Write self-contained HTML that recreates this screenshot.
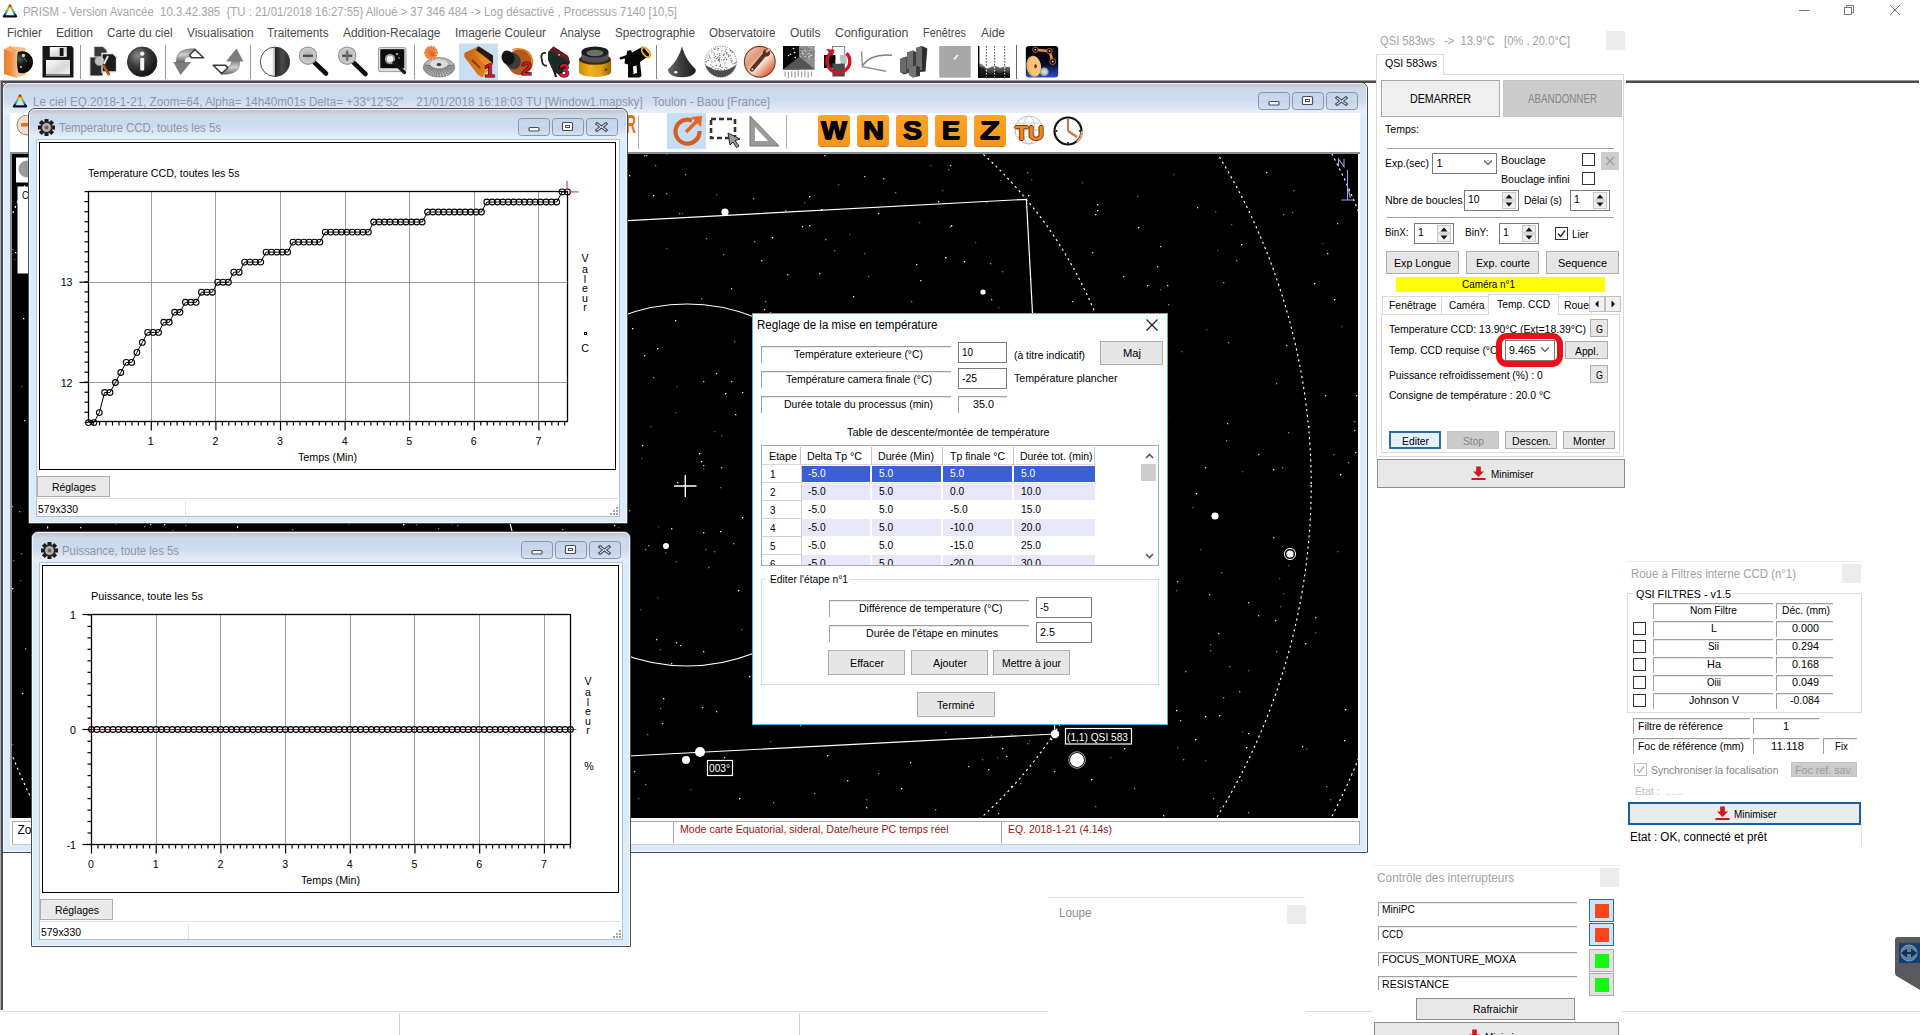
<!DOCTYPE html><html><head><meta charset="utf-8"><title>PRISM</title><style>html,body{margin:0;padding:0;}body{width:1920px;height:1035px;overflow:hidden;background:#fff;position:relative;font-family:'Liberation Sans',sans-serif;font-size:11px;}</style></head><body>
<svg style="position:absolute;left:2px;top:3px;" width="16" height="16" viewBox="0 0 15 15"><defs><linearGradient id="pg2" x1="0" y1="0" x2="0" y2="1"><stop offset="0" stop-color="#b0202a"/><stop offset="0.25" stop-color="#f0b020"/><stop offset="0.5" stop-color="#40c060"/><stop offset="0.7" stop-color="#20a0c0"/><stop offset="0.85" stop-color="#102050"/><stop offset="1" stop-color="#080818"/></linearGradient></defs><path d="M7.5 2.2 L13.3 12.6 L1.7 12.6 Z" fill="none" stroke="url(#pg2)" stroke-width="2" stroke-linejoin="round"/></svg>
<div style="position:absolute;left:23.00px;top:5px;font-size:12px;color:#a6a6a6;white-space:pre;line-height:normal;transform:scaleX(0.9484);transform-origin:0 0;">PRISM - Version Avancée  10.3.42.385  {TU : 21/01/2018 16:27:55} Alloué &gt; 37 346 484 -&gt; Log désactivé , Processus 7140 [10,5]</div>
<svg style="position:absolute;left:1790px;top:0px;" width="120" height="20"><g stroke="#777" stroke-width="1" fill="none"><path d="M9 10.5H19.5"/><rect x="54.5" y="7.5" width="7" height="7"/><path d="M56.5 7.5V5.5H63.5V12.5H61.5"/><path d="M100 5L110 15M110 5L100 15"/></g></svg>
<div style="position:absolute;left:7.00px;top:25.5px;font-size:12px;color:#4a4a4a;white-space:pre;line-height:normal;transform:scaleX(0.9718);transform-origin:0 0;">Fichier</div>
<div style="position:absolute;left:56.00px;top:25.5px;font-size:12px;color:#4a4a4a;white-space:pre;line-height:normal;transform:scaleX(1.0081);transform-origin:0 0;">Edition</div>
<div style="position:absolute;left:107.00px;top:25.5px;font-size:12px;color:#4a4a4a;white-space:pre;line-height:normal;transform:scaleX(0.9722);transform-origin:0 0;">Carte du ciel</div>
<div style="position:absolute;left:186.50px;top:25.5px;font-size:12px;color:#4a4a4a;white-space:pre;line-height:normal;transform:scaleX(0.9902);transform-origin:0 0;">Visualisation</div>
<div style="position:absolute;left:267.00px;top:25.5px;font-size:12px;color:#4a4a4a;white-space:pre;line-height:normal;transform:scaleX(0.9776);transform-origin:0 0;">Traitements</div>
<div style="position:absolute;left:343.00px;top:25.5px;font-size:12px;color:#4a4a4a;white-space:pre;line-height:normal;transform:scaleX(0.9943);transform-origin:0 0;">Addition-Recalage</div>
<div style="position:absolute;left:455.00px;top:25.5px;font-size:12px;color:#4a4a4a;white-space:pre;line-height:normal;transform:scaleX(0.9886);transform-origin:0 0;">Imagerie Couleur</div>
<div style="position:absolute;left:560.00px;top:25.5px;font-size:12px;color:#4a4a4a;white-space:pre;line-height:normal;transform:scaleX(0.9484);transform-origin:0 0;">Analyse</div>
<div style="position:absolute;left:615.00px;top:25.5px;font-size:12px;color:#4a4a4a;white-space:pre;line-height:normal;transform:scaleX(0.9829);transform-origin:0 0;">Spectrographie</div>
<div style="position:absolute;left:709.00px;top:25.5px;font-size:12px;color:#4a4a4a;white-space:pre;line-height:normal;transform:scaleX(0.9679);transform-origin:0 0;">Observatoire</div>
<div style="position:absolute;left:790.00px;top:25.5px;font-size:12px;color:#4a4a4a;white-space:pre;line-height:normal;transform:scaleX(0.9939);transform-origin:0 0;">Outils</div>
<div style="position:absolute;left:835.00px;top:25.5px;font-size:12px;color:#4a4a4a;white-space:pre;line-height:normal;transform:scaleX(1.0295);transform-origin:0 0;">Configuration</div>
<div style="position:absolute;left:923.00px;top:25.5px;font-size:12px;color:#4a4a4a;white-space:pre;line-height:normal;transform:scaleX(0.9080);transform-origin:0 0;">Fenêtres</div>
<div style="position:absolute;left:981.00px;top:25.5px;font-size:12px;color:#4a4a4a;white-space:pre;line-height:normal;">Aide</div>
<svg style="position:absolute;left:0;top:42px" width="1070" height="40" viewBox="0 42 1070 40"><defs><radialGradient id="gsph" cx="0.35" cy="0.3" r="0.75"><stop offset="0" stop-color="#8a8a8a"/><stop offset="0.45" stop-color="#3c3c3c"/><stop offset="1" stop-color="#0c0c0c"/></radialGradient><radialGradient id="gball" cx="0.4" cy="0.35" r="0.7"><stop offset="0" stop-color="#4a5a50"/><stop offset="0.4" stop-color="#151515"/><stop offset="1" stop-color="#000"/></radialGradient><linearGradient id="gmet" x1="0" y1="0" x2="0" y2="1"><stop offset="0" stop-color="#8c8c8c"/><stop offset="0.45" stop-color="#d0d0d0"/><stop offset="1" stop-color="#6a6a6a"/></linearGradient><linearGradient id="gor" x1="0" y1="0" x2="1" y2="0"><stop offset="0" stop-color="#ef7f2e"/><stop offset="0.5" stop-color="#f09048"/><stop offset="1" stop-color="#f6c8a0"/></linearGradient><linearGradient id="ghalf" x1="0" y1="0" x2="1" y2="0"><stop offset="0" stop-color="#fff"/><stop offset="0.4" stop-color="#fdfdfd"/><stop offset="0.5" stop-color="#aaa"/><stop offset="0.5" stop-color="#222"/><stop offset="0.75" stop-color="#4a4a4a"/><stop offset="1" stop-color="#2a2a2a"/></linearGradient><linearGradient id="gyel" x1="0" y1="0" x2="1" y2="0"><stop offset="0" stop-color="#c88a08"/><stop offset="0.35" stop-color="#f2b21c"/><stop offset="0.7" stop-color="#e0a010"/><stop offset="1" stop-color="#9a6400"/></linearGradient><linearGradient id="gcop" x1="0" y1="0" x2="1" y2="1"><stop offset="0" stop-color="#f3d3c2"/><stop offset="0.35" stop-color="#e09878"/><stop offset="0.55" stop-color="#f6e0d4"/><stop offset="0.8" stop-color="#e07850"/><stop offset="1" stop-color="#b86040"/></linearGradient><linearGradient id="glab" x1="0" y1="0" x2="1" y2="1"><stop offset="0" stop-color="#fff"/><stop offset="0.6" stop-color="#d8d8d8"/><stop offset="1" stop-color="#f4f4f4"/></linearGradient><linearGradient id="gcone" x1="0" y1="0" x2="1" y2="0"><stop offset="0" stop-color="#6a6a6a"/><stop offset="0.5" stop-color="#3a3a3a"/><stop offset="1" stop-color="#1e1e1e"/></linearGradient><linearGradient id="gcam1" x1="0" y1="0" x2="1" y2="1"><stop offset="0" stop-color="#b85a10"/><stop offset="0.5" stop-color="#e88a20"/><stop offset="1" stop-color="#f4a030"/></linearGradient><linearGradient id="gspec" x1="0" y1="0" x2="0" y2="1"><stop offset="0" stop-color="#8a8a8a"/><stop offset="1" stop-color="#0a0a0a"/></linearGradient><linearGradient id="grob" x1="0" y1="0" x2="0" y2="1"><stop offset="0" stop-color="#04040a"/><stop offset="0.55" stop-color="#080820"/><stop offset="1" stop-color="#2c50e0"/></linearGradient><radialGradient id="glens" cx="0.5" cy="0.5" r="0.5"><stop offset="0" stop-color="#b0b0b0"/><stop offset="0.8" stop-color="#c8c8c8"/><stop offset="1" stop-color="#e8e8e8"/></radialGradient></defs><path d="M9 46.3 L25.5 47.8 L26 74.5 L15 78Z" fill="#f5bd8c"/><circle cx="22" cy="62.2" r="11" fill="url(#gball)"/><circle cx="23.5" cy="55.5" r="1.7" fill="#dfe8d8" opacity="0.9"/><circle cx="21" cy="67" r="1.2" fill="#cdd" opacity="0.7"/><path d="M24 58 L27 62" stroke="#8a9a88" stroke-width="1" opacity="0.7"/><path d="M4 49.5 L10 46.3 L18 51 C16.5 58 16.5 66 18.5 73 L17 78 L4 74Z" fill="url(#gor)"/><path d="M4 49.5 L10 46.3 L18 51 L12 52Z" fill="#f7a868"/><path d="M42.5 46H71.5L73.5 48V77.5H42.5Z" fill="#161616"/><rect x="49.8" y="47" width="17" height="9.8" fill="url(#glab)"/><rect x="59.7" y="48" width="3.8" height="8" fill="#141414"/><rect x="46" y="60" width="24" height="14.2" fill="url(#glab)"/><rect x="46" y="74.2" width="24" height="1.6" fill="#8a8a8a"/><rect x="80" y="45" width="1" height="34" fill="#9a9a9a"/><path d="M94 46.5H103L107 50.5V58H94Z" fill="#3a3a3a" stroke="#d8d8d8" stroke-width="1"/><path d="M89.8 57H103V76H89.8Z" fill="#2a2a2a" stroke="#e4e4e4" stroke-width="1.2"/><path d="M102 53.5H113L116.5 57V72H102Z" fill="#1c1c1c" stroke="#e8e8e8" stroke-width="1.3"/><circle cx="99.5" cy="61" r="4.6" fill="#cfcfcf" opacity="0.9" stroke="#999" stroke-width="0.8"/><path d="M108 56L104 64" stroke="#e8e8e8" stroke-width="1.8"/><path d="M103.5 65L109 75" stroke="#c8651e" stroke-width="2.8"/><path d="M104.2 64.6L109.8 74.6" stroke="#5a2a08" stroke-width="0.8"/><circle cx="142.2" cy="61.8" r="15" fill="url(#gsph)"/><circle cx="142.2" cy="61.8" r="14.6" fill="none" stroke="#3a3a3a" stroke-width="0.8"/><rect x="140.2" y="58" width="4" height="12.4" rx="1" fill="#f4f4f4"/><circle cx="142.2" cy="53.6" r="2.2" fill="#f4f4f4"/><rect x="165" y="45" width="1" height="34" fill="#9a9a9a"/><path d="M173.2 62 L191.2 62 L180.5 75Z" fill="#7c7c7c"/><path d="M176.5 62 C176 52 183 48.5 195 48.8 L190 57 C186 56.5 184 58.5 184.5 62Z" fill="url(#gmet)" stroke="#6a6a6a" stroke-width="0.6"/><path d="M195 49.5 L203.5 57.8 L191.5 57.8 L189.5 55Z" fill="#fff" stroke="#3a3a3a" stroke-width="1.6" stroke-linejoin="round"/><path d="M226 61.5 L243.5 61.5 L236.5 48.5Z" fill="#7c7c7c"/><path d="M239.5 61.5 C240 71 234 74.5 221 74.3 L226 66.5 C230 67 231.5 65 231.5 61.5Z" fill="url(#gmet)" stroke="#6a6a6a" stroke-width="0.6"/><path d="M221.5 73.5 L213.2 65.3 L225.5 65.3 L227.8 68Z" fill="#fff" stroke="#3a3a3a" stroke-width="1.6" stroke-linejoin="round"/><rect x="250" y="45" width="1" height="34" fill="#9a9a9a"/><circle cx="275" cy="61.8" r="14.7" fill="url(#ghalf)" stroke="#3a3a3a" stroke-width="0.9"/><path d="M314 62.2 L326 73.5" stroke="#0e0e0e" stroke-width="4.6" stroke-linecap="round"/><circle cx="308" cy="55.7" r="8.6" fill="url(#glens)" stroke="#9a9a9a" stroke-width="1.4"/><rect x="303" y="54.7" width="10" height="2.2" fill="#4a4a4a"/><path d="M353.2 62.2 L365.5 74" stroke="#0e0e0e" stroke-width="4.6" stroke-linecap="round"/><circle cx="347.2" cy="55.7" r="8.6" fill="url(#glens)" stroke="#9a9a9a" stroke-width="1.4"/><rect x="342.2" y="54.7" width="10" height="2.2" fill="#4a4a4a"/><rect x="346.09999999999997" y="50.7" width="2.2" height="10" fill="#6a6a6a"/><rect x="378.5" y="47.6" width="27.5" height="24" rx="1.5" fill="#e0e0e0" stroke="#8a8a8a" stroke-width="0.8"/><rect x="380.3" y="49.2" width="24" height="19" fill="#0c0c0c"/><circle cx="390" cy="59" r="5.2" fill="#9a9a9a"/><circle cx="390" cy="59" r="3.2" fill="#f4f4f4"/><circle cx="397" cy="54" r="0.9" fill="#ddd"/><circle cx="399" cy="58" r="0.7" fill="#ccc"/><path d="M394 62.5 L404.5 72.5" stroke="#151515" stroke-width="3.2" stroke-linecap="round"/><rect x="414" y="45" width="1" height="34" fill="#9a9a9a"/><ellipse cx="439" cy="67.3" rx="15.8" ry="9.8" fill="#b4b4b4" stroke="#8c8c8c" stroke-width="0.8"/><path d="M439 66 L454.1 65.2" stroke="#6e6e6e" stroke-width="0.9"/><path d="M439 66 L454.5 67.3" stroke="#6e6e6e" stroke-width="0.9"/><path d="M439 66 L454.1 69.4" stroke="#6e6e6e" stroke-width="0.9"/><path d="M439 66 L453.0 71.5" stroke="#6e6e6e" stroke-width="0.9"/><path d="M439 66 L451.1 73.3" stroke="#6e6e6e" stroke-width="0.9"/><path d="M439 66 L448.7 74.8" stroke="#6e6e6e" stroke-width="0.9"/><path d="M439 66 L445.7 75.9" stroke="#6e6e6e" stroke-width="0.9"/><path d="M439 66 L442.4 76.7" stroke="#6e6e6e" stroke-width="0.9"/><path d="M439 66 L439.0 76.9" stroke="#6e6e6e" stroke-width="0.9"/><path d="M439 66 L435.6 76.7" stroke="#6e6e6e" stroke-width="0.9"/><path d="M439 66 L432.3 75.9" stroke="#6e6e6e" stroke-width="0.9"/><path d="M439 66 L429.3 74.8" stroke="#6e6e6e" stroke-width="0.9"/><path d="M439 66 L426.9 73.3" stroke="#6e6e6e" stroke-width="0.9"/><path d="M439 66 L425.0 71.5" stroke="#6e6e6e" stroke-width="0.9"/><path d="M439 66 L423.9 69.4" stroke="#6e6e6e" stroke-width="0.9"/><path d="M439 66 L423.5 67.3" stroke="#6e6e6e" stroke-width="0.9"/><path d="M439 66 L423.9 65.2" stroke="#6e6e6e" stroke-width="0.9"/><ellipse cx="439" cy="64" rx="9" ry="4.6" fill="#dcdcdc"/><ellipse cx="439" cy="64.5" rx="2.4" ry="1.5" fill="#3a3a3a"/><circle cx="431" cy="52.7" r="6.8" fill="#f39a62"/><path d="M431 52.7 L437.8 52.7" stroke="#e06a28" stroke-width="1"/><path d="M431 52.7 L436.9 56.1" stroke="#e06a28" stroke-width="1"/><path d="M431 52.7 L434.4 58.6" stroke="#e06a28" stroke-width="1"/><path d="M431 52.7 L431.0 59.5" stroke="#e06a28" stroke-width="1"/><path d="M431 52.7 L427.6 58.6" stroke="#e06a28" stroke-width="1"/><path d="M431 52.7 L425.1 56.1" stroke="#e06a28" stroke-width="1"/><path d="M431 52.7 L424.2 52.7" stroke="#e06a28" stroke-width="1"/><path d="M431 52.7 L425.1 49.3" stroke="#e06a28" stroke-width="1"/><path d="M431 52.7 L427.6 46.8" stroke="#e06a28" stroke-width="1"/><path d="M431 52.7 L431.0 45.9" stroke="#e06a28" stroke-width="1"/><path d="M431 52.7 L434.4 46.8" stroke="#e06a28" stroke-width="1"/><path d="M431 52.7 L436.9 49.3" stroke="#e06a28" stroke-width="1"/><circle cx="432.5" cy="54.5" r="2" fill="#e8601c"/><rect x="459" y="43.5" width="39" height="36.5" fill="#c9def5"/><path d="M464.5 53 L478.5 46.3 L493 55.5 L493 64 L482.5 77.3 L478 75 L464.5 57Z" fill="url(#gcam1)"/><path d="M478.5 46.3 L493 55.5 L493 64 L489 60 L476 50Z" fill="#2a1a10"/><path d="M464.5 53 L470 50.5 L486 66 L482.5 77.3 L478 75 L464.5 57Z" fill="#c8641a" opacity="0.55"/><path d="M472 60 L480 68" stroke="#6a2a08" stroke-width="2.2" opacity="0.7"/><text x="484.3" y="77.3" font-family="Liberation Sans" font-weight="bold" font-size="19" fill="#d01828" stroke="#1a0000" stroke-width="1.1" paint-order="stroke">1</text><ellipse cx="520" cy="62" rx="12.5" ry="13" fill="#b4581c"/><path d="M512 50 A13 13 0 0 1 524 75 M516 49.5 A13 13 0 0 1 528 72 M520 49 A13 13 0 0 1 531 68" fill="none" stroke="#e08838" stroke-width="1.3"/><ellipse cx="513" cy="61" rx="7.5" ry="8.5" fill="#3c3c3c" transform="rotate(-25 513 61)"/><ellipse cx="508" cy="57.8" rx="6.2" ry="7.4" fill="#141414" transform="rotate(-25 508 57.8)"/><text x="521.3" y="75.3" font-family="Liberation Sans" font-weight="bold" font-size="19" fill="#d01828" stroke="#1a0000" stroke-width="1.1" paint-order="stroke">2</text><path d="M548 52 L553.5 46.5 L568 56 L570 63 L560 75.5 L553 71 L548 60Z" fill="#1c2a28"/><path d="M553.5 46.5 L568 56 L570 63 L563 58 L550 50Z" fill="#6a1c24"/><path d="M546 53 C542 52 541 55 541.5 58 L542.5 63 C543 65 545 66 547 65.5" fill="none" stroke="#1e1e1e" stroke-width="1.7"/><path d="M554 70 L556 77" stroke="#1a1a1a" stroke-width="2.2"/><circle cx="559" cy="54.8" r="0.9" fill="#f4d0d0"/><text x="558.8" y="76.5" font-family="Liberation Sans" font-weight="bold" font-size="19" fill="#d01828" stroke="#1a0000" stroke-width="1.1" paint-order="stroke">3</text><path d="M579 60 V72 A16 5 0 0 0 611 72 V60Z" fill="url(#gyel)"/><ellipse cx="595" cy="59.5" rx="16" ry="5.2" fill="#3a2a1a"/><path d="M581.5 52 V58 A13.5 4.5 0 0 0 608.5 58 V52Z" fill="#50545a"/><ellipse cx="595" cy="52" rx="13.5" ry="5.6" fill="#1c1c1c"/><ellipse cx="595" cy="53" rx="8.5" ry="3.2" fill="#6e6e66"/><circle cx="606" cy="69.5" r="1.5" fill="#6a4400"/><path d="M619.5 57.5 L626.5 55 L627 51 L631 50 L632 52.5 L643 46.5 L650 55 L640 62 L641.5 76 L639.5 77.5 L628 77.5 L628 64.5 L624.5 63.5 L625 58.5 L620 59.5Z" fill="#060606"/><path d="M633 66.5 L636.5 65.5 L637 73 L633.5 74Z" fill="#fff"/><ellipse cx="646" cy="52.3" rx="3.1" ry="5.6" transform="rotate(-38 646 52.3)" fill="none" stroke="#f0a020" stroke-width="2"/><rect x="656" y="45" width="1" height="34" fill="#8a8a8a"/><path d="M682 46.3 C684.5 56 689 63 695.5 69 C697 72 693 77.3 682 77.3 C671 77.3 667 72 668.3 69 C675 63 679.5 56 682 46.3Z" fill="url(#gcone)"/><ellipse cx="675.8" cy="72.2" rx="1.7" ry="1.3" fill="#f4f4f4"/><circle cx="720.8" cy="61.8" r="15.6" fill="#fafafa"/><path d="M705.6 65 A15.6 15.6 0 0 0 736 65 Q720.8 76 705.6 65Z" fill="#4c4c4c"/><rect x="718.1" y="59.1" width="1" height="1" fill="#555"/><rect x="734.5" y="62.9" width="1" height="1" fill="#555"/><rect x="720.4" y="69.0" width="1" height="1" fill="#555"/><rect x="731.1" y="61.5" width="1" height="1" fill="#555"/><rect x="726.2" y="52.9" width="1" height="1" fill="#555"/><rect x="717.1" y="57.3" width="1" height="1" fill="#555"/><rect x="711.5" y="51.3" width="1" height="1" fill="#555"/><rect x="708.0" y="59.9" width="1" height="1" fill="#555"/><rect x="719.0" y="58.5" width="1" height="1" fill="#555"/><rect x="721.4" y="50.3" width="1" height="1" fill="#555"/><rect x="720.0" y="64.3" width="1" height="1" fill="#555"/><rect x="727.6" y="54.1" width="1" height="1" fill="#555"/><rect x="718.1" y="48.0" width="1" height="1" fill="#555"/><rect x="717.6" y="47.8" width="1" height="1" fill="#555"/><rect x="707.2" y="66.7" width="1" height="1" fill="#555"/><rect x="724.2" y="58.6" width="1" height="1" fill="#555"/><rect x="725.4" y="67.1" width="1" height="1" fill="#555"/><rect x="730.5" y="59.7" width="1" height="1" fill="#555"/><rect x="715.0" y="55.9" width="1" height="1" fill="#555"/><rect x="711.5" y="61.4" width="1" height="1" fill="#555"/><rect x="708.5" y="54.6" width="1" height="1" fill="#555"/><rect x="714.8" y="48.6" width="1" height="1" fill="#555"/><rect x="730.1" y="50.1" width="1" height="1" fill="#555"/><rect x="717.9" y="56.5" width="1" height="1" fill="#555"/><rect x="730.2" y="50.5" width="1" height="1" fill="#555"/><rect x="730.1" y="55.4" width="1" height="1" fill="#555"/><rect x="719.2" y="55.1" width="1" height="1" fill="#555"/><rect x="726.4" y="51.9" width="1" height="1" fill="#555"/><rect x="720.0" y="65.5" width="1" height="1" fill="#555"/><rect x="729.9" y="49.9" width="1" height="1" fill="#555"/><rect x="715.9" y="64.9" width="1" height="1" fill="#555"/><rect x="723.0" y="59.5" width="1" height="1" fill="#555"/><rect x="718.4" y="59.7" width="1" height="1" fill="#555"/><rect x="719.1" y="53.3" width="1" height="1" fill="#555"/><rect x="731.7" y="51.7" width="1" height="1" fill="#555"/><rect x="705.8" y="61.3" width="1" height="1" fill="#555"/><rect x="719.3" y="65.7" width="1" height="1" fill="#555"/><rect x="718.6" y="60.2" width="1" height="1" fill="#555"/><rect x="716.2" y="58.0" width="1" height="1" fill="#555"/><rect x="734.3" y="65.5" width="1" height="1" fill="#555"/><rect x="728.1" y="56.2" width="1" height="1" fill="#555"/><rect x="710.3" y="64.5" width="1" height="1" fill="#555"/><rect x="713.6" y="52.7" width="1" height="1" fill="#555"/><rect x="709.8" y="57.5" width="1" height="1" fill="#555"/><rect x="730.7" y="57.9" width="1" height="1" fill="#555"/><rect x="709.2" y="67.1" width="1" height="1" fill="#555"/><rect x="731.5" y="60.3" width="1" height="1" fill="#555"/><rect x="719.3" y="61.3" width="1" height="1" fill="#555"/><rect x="711.0" y="67.6" width="1" height="1" fill="#555"/><rect x="732.5" y="63.3" width="1" height="1" fill="#555"/><rect x="718.3" y="59.1" width="1" height="1" fill="#555"/><rect x="713.7" y="54.5" width="1" height="1" fill="#555"/><rect x="717.0" y="53.8" width="1" height="1" fill="#555"/><rect x="717.4" y="49.4" width="1" height="1" fill="#555"/><rect x="724.5" y="62.3" width="1" height="1" fill="#555"/><rect x="714.2" y="48.6" width="1" height="1" fill="#555"/><rect x="713.7" y="57.1" width="1" height="1" fill="#555"/><rect x="715.3" y="68.1" width="1" height="1" fill="#555"/><rect x="721.1" y="59.4" width="1" height="1" fill="#555"/><rect x="709.1" y="56.4" width="1" height="1" fill="#555"/><rect x="718.2" y="68.4" width="1" height="1" fill="#555"/><rect x="723.2" y="54.9" width="1" height="1" fill="#555"/><rect x="719.3" y="57.3" width="1" height="1" fill="#555"/><rect x="717.0" y="69.6" width="1" height="1" fill="#555"/><rect x="725.8" y="53.2" width="1" height="1" fill="#555"/><rect x="724.6" y="56.9" width="1" height="1" fill="#555"/><rect x="728.4" y="55.1" width="1" height="1" fill="#555"/><rect x="721.6" y="67.0" width="1" height="1" fill="#555"/><rect x="714.4" y="60.6" width="1" height="1" fill="#555"/><rect x="725.6" y="48.9" width="1" height="1" fill="#555"/><rect x="724.0" y="69.0" width="1" height="1" fill="#555"/><rect x="725.0" y="50.6" width="1" height="1" fill="#555"/><rect x="723.9" y="53.5" width="1" height="1" fill="#555"/><rect x="726.4" y="67.7" width="1" height="1" fill="#555"/><rect x="722.9" y="54.3" width="1" height="1" fill="#555"/><rect x="712.4" y="66.4" width="1" height="1" fill="#555"/><rect x="726.0" y="59.0" width="1" height="1" fill="#555"/><rect x="735.4" y="62.2" width="1" height="1" fill="#555"/><rect x="731.7" y="51.6" width="1" height="1" fill="#555"/><circle cx="720.8" cy="61.8" r="15.6" fill="none" stroke="#6a6a6a" stroke-width="0.9" stroke-dasharray="1.2 1.2"/><circle cx="759.8" cy="61.8" r="15.4" fill="url(#gcop)" stroke="#7a3c28" stroke-width="1.1"/><path d="M752 69.5 L765 54" stroke="#5c2e1e" stroke-width="4.2" stroke-linecap="round"/><circle cx="766.5" cy="52.8" r="3.6" fill="#5c2e1e"/><path d="M766 52 L770.5 48.5" stroke="#e8a888" stroke-width="2.4"/><circle cx="752.3" cy="69.2" r="1" fill="#f0d0c0"/><rect x="783" y="46" width="16.5" height="23.5" fill="#060606"/><rect x="799.5" y="46" width="15.2" height="23.5" fill="#8c8c8c"/><rect x="808.5" y="56.4" width="1" height="1" fill="#ccc"/><rect x="811.7" y="56.9" width="1" height="1" fill="#555"/><rect x="808.9" y="58.6" width="1" height="1" fill="#ccc"/><rect x="804.9" y="58.2" width="1" height="1" fill="#777"/><rect x="807.4" y="54.0" width="1" height="1" fill="#ccc"/><rect x="810.1" y="51.7" width="1" height="1" fill="#555"/><rect x="812.8" y="56.7" width="1" height="1" fill="#555"/><rect x="810.5" y="47.0" width="1" height="1" fill="#777"/><rect x="801.3" y="46.0" width="1" height="1" fill="#ccc"/><rect x="802.5" y="49.0" width="1" height="1" fill="#555"/><rect x="812.1" y="50.1" width="1" height="1" fill="#555"/><rect x="807.3" y="55.5" width="1" height="1" fill="#555"/><rect x="802.1" y="59.6" width="1" height="1" fill="#555"/><rect x="813.5" y="58.5" width="1" height="1" fill="#eee"/><rect x="799.8" y="51.8" width="1" height="1" fill="#555"/><rect x="803.3" y="50.6" width="1" height="1" fill="#ccc"/><rect x="808.1" y="55.9" width="1" height="1" fill="#ccc"/><rect x="804.0" y="57.5" width="1" height="1" fill="#777"/><rect x="809.6" y="48.6" width="1" height="1" fill="#777"/><rect x="809.7" y="46.8" width="1" height="1" fill="#ccc"/><rect x="813.3" y="51.0" width="1" height="1" fill="#777"/><rect x="799.8" y="57.0" width="1" height="1" fill="#eee"/><rect x="805.0" y="57.8" width="1" height="1" fill="#777"/><rect x="800.2" y="48.5" width="1" height="1" fill="#555"/><rect x="801.2" y="49.4" width="1" height="1" fill="#777"/><rect x="804.5" y="51.0" width="1" height="1" fill="#eee"/><rect x="810.7" y="47.5" width="1" height="1" fill="#eee"/><rect x="812.0" y="46.5" width="1" height="1" fill="#ccc"/><rect x="802.5" y="53.2" width="1" height="1" fill="#eee"/><rect x="812.8" y="50.8" width="1" height="1" fill="#ccc"/><rect x="804.0" y="50.4" width="1" height="1" fill="#555"/><rect x="811.1" y="54.8" width="1" height="1" fill="#eee"/><rect x="814.0" y="48.3" width="1" height="1" fill="#ccc"/><rect x="800.7" y="54.4" width="1" height="1" fill="#777"/><rect x="800.0" y="56.4" width="1" height="1" fill="#eee"/><rect x="811.5" y="52.4" width="1" height="1" fill="#777"/><rect x="801.6" y="59.7" width="1" height="1" fill="#ccc"/><rect x="811.1" y="50.7" width="1" height="1" fill="#555"/><rect x="801.4" y="56.2" width="1" height="1" fill="#555"/><rect x="808.6" y="57.0" width="1" height="1" fill="#ccc"/><rect x="801.9" y="51.2" width="1" height="1" fill="#ccc"/><rect x="811.7" y="50.1" width="1" height="1" fill="#777"/><rect x="812.9" y="54.7" width="1" height="1" fill="#555"/><rect x="813.7" y="52.3" width="1" height="1" fill="#777"/><rect x="809.5" y="50.4" width="1" height="1" fill="#eee"/><rect x="803.7" y="51.7" width="1" height="1" fill="#555"/><rect x="801.1" y="57.5" width="1" height="1" fill="#555"/><rect x="808.6" y="53.0" width="1" height="1" fill="#eee"/><rect x="802.1" y="52.9" width="1" height="1" fill="#eee"/><rect x="800.4" y="57.1" width="1" height="1" fill="#eee"/><rect x="809.6" y="55.3" width="1" height="1" fill="#eee"/><rect x="804.8" y="55.9" width="1" height="1" fill="#eee"/><rect x="811.6" y="49.7" width="1" height="1" fill="#eee"/><rect x="813.4" y="50.8" width="1" height="1" fill="#555"/><rect x="807.9" y="46.2" width="1" height="1" fill="#eee"/><rect x="804.2" y="49.8" width="1" height="1" fill="#eee"/><rect x="811.3" y="55.1" width="1" height="1" fill="#eee"/><rect x="804.5" y="55.0" width="1" height="1" fill="#777"/><rect x="804.6" y="57.8" width="1" height="1" fill="#777"/><rect x="813.7" y="59.4" width="1" height="1" fill="#555"/><path d="M783 69.5 L799.5 56.5 L814.7 69.5Z" fill="#555"/><circle cx="793.5" cy="48.5" r="0.8" fill="#fff"/><circle cx="794.5" cy="52.5" r="0.8" fill="#fff"/><circle cx="790.5" cy="54.3" r="0.8" fill="#fff"/><circle cx="788.5" cy="55.5" r="0.8" fill="#fff"/><circle cx="795.3" cy="57.5" r="0.8" fill="#fff"/><rect x="784.5" y="71.3" width="1.2" height="5.2" fill="#9aa0a8"/><rect x="787.8" y="71.8" width="1.2" height="6.4" fill="#9aa0a8"/><rect x="791.1" y="71.2" width="1.2" height="6.0" fill="#9aa0a8"/><rect x="794.4" y="71.6" width="1.2" height="6.1" fill="#9aa0a8"/><rect x="797.7" y="70.8" width="1.2" height="6.2" fill="#9aa0a8"/><rect x="801.0" y="71.4" width="1.2" height="6.0" fill="#9aa0a8"/><rect x="804.3" y="71.1" width="1.2" height="5.9" fill="#9aa0a8"/><rect x="807.6" y="71.7" width="1.2" height="6.0" fill="#9aa0a8"/><rect x="810.9" y="71.6" width="1.2" height="5.0" fill="#9aa0a8"/><rect x="832.5" y="46.5" width="12.2" height="15.8" fill="#fff" stroke="#777" stroke-width="0.9"/><rect x="840" y="55" width="6.6" height="8.6" fill="#b9c0c0"/><rect x="824" y="55" width="11.5" height="13" fill="#0a0a0a"/><rect x="832.4" y="63.5" width="12.4" height="13" fill="#4a4e52"/><rect x="835.5" y="60" width="5" height="3.5" fill="#fff"/><path d="M833 51.2 A11.4 11.4 0 1 0 846.5 53.2" fill="none" stroke="#cf1424" stroke-width="3.4"/><path d="M826 49 L834.5 49.8 L832.6 56.5Z" fill="#cf1424"/><path d="M861.6 51.5 L862.4 66.6 L886 71.2" fill="none" stroke="#8a9090" stroke-width="1.4"/><path d="M862.4 65.5 C868 57.5 878 54 892 55.3" fill="none" stroke="#7a7e7e" stroke-width="1.5"/><path d="M900 59 L906 56.5 L909 58 L909 73 L904 74.5 L900 72Z" fill="#4a4a4a"/><path d="M900 59 L906 56.5 L906 72.5 L900 72Z" fill="#6a6a6a"/><path d="M907 52.5 L913 50.5 L917 52.5 L917 70 L907 70Z" fill="#3c3c3c"/><path d="M907 52.5 L913 50.5 L913 68 L907 69Z" fill="#707070"/><path d="M916 48 L922 46 L927.3 48.5 L925.5 71.5 L919 72 L916 70Z" fill="#2e2e2e"/><path d="M916 48 L922 46 L922 70 L916 70Z" fill="#6c6c6c"/><path d="M909 67 L916 65.5 L920 67 L920 76 L913 77.5 L909 75Z" fill="#3a3a3a"/><path d="M909 67 L916 65.5 L916 76.5 L913 77.5 L909 75Z" fill="#747474"/><rect x="939.2" y="46" width="31.5" height="31.6" fill="#a8a8a8"/><path d="M954 59.5 L957.8 55" stroke="#fff" stroke-width="1.5"/><rect x="978" y="46" width="32" height="31.6" fill="#fdfdfd"/><path d="M978 64 L981 63.5 L985 67 L988 68.5 L992 66.5 L996 66 L1000 68 L1004 66.5 L1010 67 V77.6 H978Z" fill="url(#gspec)"/><path d="M978 66 L984 68 L987 73 L992 74.5 L996 71 L1000 74 L1004 71 L1010 75 V77.6 H978Z" fill="#111" opacity="0.75"/><path d="M986.4 46V66M994.6 46V66M1004.7 46V66" stroke="#555" stroke-width="1" stroke-dasharray="1.6 1.4"/><path d="M986.4 67V77M994.6 67V77M1004.7 67V77" stroke="#fff" stroke-width="1" stroke-dasharray="1.4 1.6"/><rect x="978" y="46" width="1.4" height="31.6" fill="#000"/><rect x="978" y="76.6" width="32" height="1" fill="#000"/><rect x="1016" y="45" width="1" height="34" fill="#6a6a6a"/><rect x="1025.8" y="46" width="32.4" height="31.6" rx="3" fill="url(#grob)"/><path d="M1035.4 49.7 L1049.5 51.1 L1052.7 61.6" fill="none" stroke="#e8902c" stroke-width="2.6"/><circle cx="1035.4" cy="49.7" r="2.7" fill="#0a0a14" stroke="#d0682c" stroke-width="0.9"/><circle cx="1049.5" cy="51.1" r="2.7" fill="#0a0a14" stroke="#d0682c" stroke-width="0.9"/><circle cx="1052.7" cy="61.6" r="2.9" fill="#0a0a14" stroke="#d0682c" stroke-width="0.9"/><circle cx="1035.4" cy="49.7" r="0.8" fill="#fff"/><circle cx="1049.5" cy="51.1" r="0.8" fill="#fff"/><circle cx="1052.7" cy="61.6" r="0.8" fill="#fff"/><ellipse cx="1033.6" cy="66.3" rx="7.2" ry="10.6" fill="#f2b060" transform="rotate(-8 1033.6 66.3)"/><ellipse cx="1035" cy="66.3" rx="6" ry="9.6" fill="#f6c47c" transform="rotate(-8 1035 66.3)"/><ellipse cx="1035.6" cy="66.2" rx="1.3" ry="2" fill="#5a3408"/><circle cx="1044.3" cy="71.8" r="4.3" fill="#a8b0b0"/><circle cx="1044.3" cy="71.8" r="2.4" fill="#d8dcd4"/></svg>
<div style="position:absolute;left:0px;top:80px;width:1919px;height:1px;box-sizing:border-box;background:#9a9a9a;"></div>
<div style="position:absolute;left:0px;top:81px;width:1919px;height:1.5px;box-sizing:border-box;background:#4a4a4a;"></div>
<div style="position:absolute;left:0px;top:80px;width:1px;height:930px;box-sizing:border-box;background:#b0a8a8;"></div>
<div style="position:absolute;left:1px;top:81px;width:2px;height:929px;box-sizing:border-box;background:#4d5259;"></div>
<div style="position:absolute;left:0px;top:1011px;width:1920px;height:1px;box-sizing:border-box;background:#dcdcdc;"></div>
<div style="position:absolute;left:399px;top:1013px;width:1px;height:22px;box-sizing:border-box;background:#d4d4d4;"></div>
<div style="position:absolute;left:799px;top:1013px;width:1px;height:22px;box-sizing:border-box;background:#d4d4d4;"></div>
<div style="position:absolute;left:2px;top:82px;width:1366px;height:771px;box-sizing:border-box;border:1px solid #434a52;border-radius:7px 7px 1px 1px;background:linear-gradient(to bottom,#c4c8d6 0px,#c5c9d7 3px,#cfd9e3 6px,#c9dcec 11px,#cddaf0 17px,#d8e3f0 22px,#e1ecf6 27px,#e3effb 30px,#dcebfa 32px,#dcebfa 100%);"></div>
<div style="position:absolute;left:3px;top:83px;width:1364px;height:769px;box-sizing:border-box;border:1px solid rgba(255,255,255,0.7);border-radius:6px 6px 0 0;"></div>
<svg style="position:absolute;left:12px;top:93px;" width="16" height="16" viewBox="0 0 15 15"><defs><linearGradient id="pg12" x1="0" y1="0" x2="0" y2="1"><stop offset="0" stop-color="#b0202a"/><stop offset="0.25" stop-color="#f0b020"/><stop offset="0.5" stop-color="#40c060"/><stop offset="0.7" stop-color="#20a0c0"/><stop offset="0.85" stop-color="#102050"/><stop offset="1" stop-color="#080818"/></linearGradient></defs><path d="M7.5 2.2 L13.3 12.6 L1.7 12.6 Z" fill="none" stroke="url(#pg12)" stroke-width="2" stroke-linejoin="round"/></svg>
<div style="position:absolute;left:32.50px;top:95px;font-size:12px;color:#8e98a6;white-space:pre;line-height:normal;transform:scaleX(0.9710);transform-origin:0 0;">Le ciel EQ.2018-1-21, Zoom=64, Alpha= 14h40m01s Delta= +33°12'52''    21/01/2018 16:18:03 TU [Window1.mapsky]   Toulon - Baou [France]</div>
<svg style="position:absolute;left:1258px;top:92px;" width="101" height="19"><defs><linearGradient id="cbg" x1="0" y1="0" x2="0" y2="1"><stop offset="0" stop-color="#c3d2e8"/><stop offset="0.45" stop-color="#cbd9ec"/><stop offset="0.5" stop-color="#c3d3e8"/><stop offset="1" stop-color="#d3e0f0"/></linearGradient></defs><rect x="0.5" y="0.5" width="31" height="17" rx="3" fill="url(#cbg)" stroke="#8497b3"/><rect x="34.5" y="0.5" width="31" height="17" rx="3" fill="url(#cbg)" stroke="#8497b3"/><rect x="68.5" y="0.5" width="31" height="17" rx="3" fill="url(#cbg)" stroke="#8497b3"/><rect x="11" y="9.5" width="10" height="3.5" rx="1" fill="#fff" stroke="#46505f" stroke-width="1.2"/><rect x="44.5" y="4.5" width="10" height="8" rx="1" fill="#fff" stroke="#46505f" stroke-width="1.2"/><rect x="47.5" y="7.5" width="4" height="2" fill="#fff" stroke="#46505f" stroke-width="1"/><path d="M79 4.5 L83.5 8 L88 4.5 L89.5 6 L85.5 9 L89.5 12 L88 13.5 L83.5 10 L79 13.5 L77.5 12 L81.5 9 L77.5 6Z" fill="#fff" stroke="#46505f" stroke-width="1.1"/></svg>
<div style="position:absolute;left:10px;top:113px;width:1350px;height:732px;box-sizing:border-box;background:#fff;"></div>
<div style="position:absolute;left:10px;top:152px;width:1350px;height:2px;box-sizing:border-box;background:#8a8f96;"></div>
<div style="position:absolute;left:10px;top:152px;width:2px;height:666px;box-sizing:border-box;background:#8a8f96;"></div>
<svg style="position:absolute;left:16px;top:115px;" width="14" height="22" viewBox="0 0 14 22"><circle cx="11" cy="10" r="10" fill="#f2ddd0" stroke="#a08070" stroke-width="1"/><rect x="5" y="8" width="12" height="3.5" fill="#e07020"/></svg>
<div style="position:absolute;left:626.00px;top:109px;font-size:26px;color:#e8701a;white-space:pre;line-height:normal;font-weight:bold;transform:scaleX(0.5324);transform-origin:0 0;">R</div>
<div style="position:absolute;left:638px;top:115px;width:1px;height:34px;box-sizing:border-box;background:#b0b0b0;"></div>
<div style="position:absolute;left:667px;top:113px;width:39px;height:36px;box-sizing:border-box;background:#c5ddf7;"></div>
<svg style="position:absolute;left:671px;top:115px;" width="32" height="32"><path d="M21 5.5 A12 12 0 1 0 28.5 16" fill="none" stroke="#d4601c" stroke-width="4.2"/><path d="M15 17 L26 6" stroke="#e8641c" stroke-width="3.6"/><path d="M20 2 L31 1 L30 12Z" fill="#f0641c"/></svg>
<svg style="position:absolute;left:709px;top:115px;" width="34" height="34"><rect x="2" y="4" width="24" height="19" fill="none" stroke="#333" stroke-width="2.6" stroke-dasharray="5 3"/><path d="M19 18 L31 24 L26 25.5 L30 31 L27.5 32.5 L24 27 L21 30Z" fill="#999" stroke="#222" stroke-width="1"/></svg>
<svg style="position:absolute;left:748px;top:115px;" width="34" height="34"><path d="M2 1 L2 31 L31 31Z" fill="#9a9a9a" stroke="#777" stroke-width="1"/><path d="M7 12 L7 26 L20 26Z" fill="#fff"/></svg>
<div style="position:absolute;left:786px;top:115px;width:1px;height:34px;box-sizing:border-box;background:#b0b0b0;"></div>
<div style="position:absolute;left:818px;top:115px;width:32px;height:31px;border-radius:3px;background:linear-gradient(#ffa424,#f7941a);box-shadow:0 1px 0 #c9822a;"></div>
<div style="position:absolute;left:821.00px;top:115.69999999999999px;font-size:25px;color:#000;white-space:pre;line-height:normal;font-weight:bold;transform:scaleX(1.1013);transform-origin:0 0;text-shadow:0.6px 0 0 #000,-0.6px 0 0 #000,0 0.6px 0 #000;">W</div>
<div style="position:absolute;left:857px;top:115px;width:32px;height:31px;border-radius:3px;background:linear-gradient(#ffa424,#f7941a);box-shadow:0 1px 0 #c9822a;"></div>
<div style="position:absolute;left:862.50px;top:115.69999999999999px;font-size:25px;color:#000;white-space:pre;line-height:normal;font-weight:bold;transform:scaleX(1.1626);transform-origin:0 0;text-shadow:0.6px 0 0 #000,-0.6px 0 0 #000,0 0.6px 0 #000;">N</div>
<div style="position:absolute;left:896px;top:115px;width:32px;height:31px;border-radius:3px;background:linear-gradient(#ffa424,#f7941a);box-shadow:0 1px 0 #c9822a;"></div>
<div style="position:absolute;left:902.50px;top:115.69999999999999px;font-size:25px;color:#000;white-space:pre;line-height:normal;font-weight:bold;transform:scaleX(1.1386);transform-origin:0 0;text-shadow:0.6px 0 0 #000,-0.6px 0 0 #000,0 0.6px 0 #000;">S</div>
<div style="position:absolute;left:935px;top:115px;width:32px;height:31px;border-radius:3px;background:linear-gradient(#ffa424,#f7941a);box-shadow:0 1px 0 #c9822a;"></div>
<div style="position:absolute;left:942.00px;top:115.69999999999999px;font-size:25px;color:#000;white-space:pre;line-height:normal;font-weight:bold;transform:scaleX(1.0787);transform-origin:0 0;text-shadow:0.6px 0 0 #000,-0.6px 0 0 #000,0 0.6px 0 #000;">E</div>
<div style="position:absolute;left:974px;top:115px;width:32px;height:31px;border-radius:3px;background:linear-gradient(#ffa424,#f7941a);box-shadow:0 1px 0 #c9822a;"></div>
<div style="position:absolute;left:980.00px;top:115.69999999999999px;font-size:25px;color:#000;white-space:pre;line-height:normal;font-weight:bold;transform:scaleX(1.3088);transform-origin:0 0;text-shadow:0.6px 0 0 #000,-0.6px 0 0 #000,0 0.6px 0 #000;">Z</div>
<svg style="position:absolute;left:1013px;top:114px;" width="34" height="34"><circle cx="16" cy="16" r="14" fill="#fff" stroke="#bbb"/><ellipse cx="16" cy="16" rx="6" ry="14" fill="none" stroke="#ccc"/><path d="M2 16H30M4 9H28M4 23H28" stroke="#ccc"/></svg>
<div style="position:absolute;left:1015.00px;top:121px;font-size:21px;color:#f08818;white-space:pre;line-height:normal;font-weight:bold;transform:scaleX(1.0357);transform-origin:0 0;text-shadow:1px 0 0 #7a3a08,-1px 0 0 #7a3a08,0 1px 0 #7a3a08,0 -1px 0 #7a3a08;">TU</div>
<svg style="position:absolute;left:1052px;top:114px;" width="34" height="34"><circle cx="16" cy="17" r="13.5" fill="#fff" stroke="#111" stroke-width="2.2"/><path d="M16 17V5" stroke="#e0703a" stroke-width="2"/><path d="M16 17L25 23" stroke="#e0703a" stroke-width="2.4"/><path d="M30 17 A14 14 0 0 1 25 28" stroke="#e0a080" stroke-width="2.4" fill="none"/><circle cx="16" cy="29" r="1" fill="#111"/><circle cx="4.5" cy="17" r="1" fill="#111"/><circle cx="28" cy="17" r="1" fill="#111"/></svg>
<svg style="position:absolute;left:12px;top:154px;" width="1346" height="664"><rect width="1347" height="665" fill="#000"/><g transform="translate(-1,-1)"><rect x="853" y="100" width="1.3" height="1.3" fill="#fff" opacity="0.4"/><rect x="652" y="545" width="1.3" height="1.3" fill="#fff" opacity="1"/><rect x="884" y="39" width="1.3" height="1.3" fill="#fff" opacity="0.5"/><rect x="774" y="57" width="1.3" height="1.3" fill="#fff" opacity="0.6"/><rect x="668" y="60" width="1.3" height="1.3" fill="#fff" opacity="0.6"/><rect x="660" y="375" width="1.3" height="1.3" fill="#fff" opacity="0.9"/><rect x="1077" y="387" width="1.3" height="1.3" fill="#fff" opacity="1"/><rect x="1038" y="263" width="1.3" height="1.3" fill="#fff" opacity="0.9"/><rect x="651" y="570" width="1.3" height="1.3" fill="#fff" opacity="0.8"/><rect x="923" y="359" width="1.3" height="1.3" fill="#fff" opacity="0.5"/><rect x="842" y="542" width="1.3" height="1.3" fill="#fff" opacity="0.9"/><rect x="692" y="379" width="1.3" height="1.3" fill="#fff" opacity="0.9"/><rect x="889" y="364" width="1.3" height="1.3" fill="#fff" opacity="1"/><rect x="1029" y="411" width="1.3" height="1.3" fill="#fff" opacity="0.6"/><rect x="1114" y="284" width="1.3" height="1.3" fill="#fff" opacity="0.8"/><rect x="957" y="613" width="1.3" height="1.3" fill="#fff" opacity="0.8"/><rect x="836" y="527" width="1.3" height="1.3" fill="#fff" opacity="0.4"/><rect x="1186" y="54" width="1.3" height="1.3" fill="#fff" opacity="0.8"/><rect x="1000" y="581" width="1.3" height="1.3" fill="#fff" opacity="0.4"/><rect x="945" y="404" width="1.3" height="1.3" fill="#fff" opacity="1"/><rect x="703" y="278" width="1.3" height="1.3" fill="#fff" opacity="0.35"/><rect x="867" y="620" width="1.3" height="1.3" fill="#fff" opacity="0.6"/><rect x="646" y="444" width="1.3" height="1.3" fill="#fff" opacity="0.35"/><rect x="1024" y="524" width="1.3" height="1.3" fill="#fff" opacity="0.35"/><rect x="846" y="462" width="1.3" height="1.3" fill="#fff" opacity="0.5"/><rect x="980" y="529" width="1.3" height="1.3" fill="#fff" opacity="1"/><rect x="1230" y="627" width="1.3" height="1.3" fill="#fff" opacity="0.6"/><rect x="1126" y="43" width="1.3" height="1.3" fill="#fff" opacity="0.4"/><rect x="1129" y="430" width="1.3" height="1.3" fill="#fff" opacity="0.4"/><rect x="1217" y="189" width="1.3" height="1.3" fill="#fff" opacity="0.6"/><rect x="1265" y="230" width="1.3" height="1.3" fill="#fff" opacity="0.6"/><rect x="876" y="406" width="1.3" height="1.3" fill="#fff" opacity="0.6"/><rect x="660" y="510" width="1.3" height="1.3" fill="#fff" opacity="0.9"/><rect x="1156" y="264" width="1.3" height="1.3" fill="#fff" opacity="0.35"/><rect x="979" y="110" width="1.3" height="1.3" fill="#fff" opacity="0.6"/><rect x="1018" y="587" width="1.3" height="1.3" fill="#fff" opacity="0.35"/><rect x="931" y="365" width="1.3" height="1.3" fill="#fff" opacity="0.4"/><rect x="920" y="238" width="1.3" height="1.3" fill="#fff" opacity="0.6"/><rect x="1316" y="100" width="1.3" height="1.3" fill="#fff" opacity="0.9"/><rect x="727" y="437" width="1.3" height="1.3" fill="#fff" opacity="1"/><rect x="971" y="391" width="1.3" height="1.3" fill="#fff" opacity="0.8"/><rect x="823" y="97" width="1.3" height="1.3" fill="#fff" opacity="0.5"/><rect x="887" y="376" width="1.3" height="1.3" fill="#fff" opacity="0.9"/><rect x="1121" y="342" width="1.3" height="1.3" fill="#fff" opacity="0.5"/><rect x="1095" y="491" width="1.3" height="1.3" fill="#fff" opacity="0.6"/><rect x="1274" y="518" width="1.3" height="1.3" fill="#fff" opacity="0.35"/><rect x="1114" y="371" width="1.3" height="1.3" fill="#fff" opacity="0.6"/><rect x="908" y="69" width="1.3" height="1.3" fill="#fff" opacity="0.4"/><rect x="909" y="127" width="1.3" height="1.3" fill="#fff" opacity="0.9"/><rect x="939" y="73" width="1.3" height="1.3" fill="#fff" opacity="0.5"/><rect x="655" y="0" width="1.3" height="1.3" fill="#fff" opacity="0.9"/><rect x="1009" y="630" width="1.3" height="1.3" fill="#fff" opacity="0.5"/><rect x="636" y="581" width="1.3" height="1.3" fill="#fff" opacity="0.5"/><rect x="892" y="421" width="1.3" height="1.3" fill="#fff" opacity="0.8"/><rect x="1057" y="315" width="1.3" height="1.3" fill="#fff" opacity="1"/><rect x="1237" y="659" width="1.3" height="1.3" fill="#fff" opacity="0.6"/><rect x="968" y="207" width="1.3" height="1.3" fill="#fff" opacity="0.9"/><rect x="692" y="228" width="1.3" height="1.3" fill="#fff" opacity="0.8"/><rect x="966" y="460" width="1.3" height="1.3" fill="#fff" opacity="0.5"/><rect x="634" y="631" width="1.3" height="1.3" fill="#fff" opacity="0.5"/><rect x="881" y="458" width="1.3" height="1.3" fill="#fff" opacity="1"/><rect x="1170" y="198" width="1.3" height="1.3" fill="#fff" opacity="0.4"/><rect x="1247" y="462" width="1.3" height="1.3" fill="#fff" opacity="0.8"/><rect x="995" y="603" width="1.3" height="1.3" fill="#fff" opacity="0.8"/><rect x="1181" y="354" width="1.3" height="1.3" fill="#fff" opacity="0.35"/><rect x="984" y="423" width="1.3" height="1.3" fill="#fff" opacity="0.5"/><rect x="1209" y="654" width="1.3" height="1.3" fill="#fff" opacity="0.35"/><rect x="759" y="159" width="1.3" height="1.3" fill="#fff" opacity="0.6"/><rect x="1157" y="151" width="1.3" height="1.3" fill="#fff" opacity="0.5"/><rect x="977" y="485" width="1.3" height="1.3" fill="#fff" opacity="1"/><rect x="1194" y="314" width="1.3" height="1.3" fill="#fff" opacity="0.9"/><rect x="1123" y="635" width="1.3" height="1.3" fill="#fff" opacity="0.6"/><rect x="1207" y="480" width="1.3" height="1.3" fill="#fff" opacity="0.8"/><rect x="1314" y="242" width="1.3" height="1.3" fill="#fff" opacity="0.9"/><rect x="692" y="312" width="1.3" height="1.3" fill="#fff" opacity="0.8"/><rect x="766" y="414" width="1.3" height="1.3" fill="#fff" opacity="0.5"/><rect x="1231" y="318" width="1.3" height="1.3" fill="#fff" opacity="0.4"/><rect x="868" y="427" width="1.3" height="1.3" fill="#fff" opacity="0.35"/><rect x="1099" y="604" width="1.3" height="1.3" fill="#fff" opacity="0.35"/><rect x="1136" y="132" width="1.3" height="1.3" fill="#fff" opacity="0.9"/><rect x="934" y="422" width="1.3" height="1.3" fill="#fff" opacity="1"/><rect x="1202" y="645" width="1.3" height="1.3" fill="#fff" opacity="0.6"/><rect x="955" y="494" width="1.3" height="1.3" fill="#fff" opacity="1"/><rect x="1146" y="113" width="1.3" height="1.3" fill="#fff" opacity="0.9"/><rect x="637" y="392" width="1.3" height="1.3" fill="#fff" opacity="0.6"/><rect x="1206" y="97" width="1.3" height="1.3" fill="#fff" opacity="0.35"/><rect x="1052" y="315" width="1.3" height="1.3" fill="#fff" opacity="0.8"/><rect x="731" y="364" width="1.3" height="1.3" fill="#fff" opacity="1"/><rect x="627" y="645" width="1.3" height="1.3" fill="#fff" opacity="0.4"/><rect x="692" y="498" width="1.3" height="1.3" fill="#fff" opacity="0.9"/><rect x="934" y="579" width="1.3" height="1.3" fill="#fff" opacity="0.35"/><rect x="1255" y="19" width="1.3" height="1.3" fill="#fff" opacity="0.9"/><rect x="831" y="160" width="1.3" height="1.3" fill="#fff" opacity="0.5"/><rect x="855" y="361" width="1.3" height="1.3" fill="#fff" opacity="0.35"/><rect x="713" y="604" width="1.3" height="1.3" fill="#fff" opacity="0.8"/><rect x="1272" y="440" width="1.3" height="1.3" fill="#fff" opacity="0.35"/><rect x="1277" y="279" width="1.3" height="1.3" fill="#fff" opacity="0.5"/><rect x="712" y="101" width="1.3" height="1.3" fill="#fff" opacity="0.5"/><rect x="631" y="292" width="1.3" height="1.3" fill="#fff" opacity="0.9"/><rect x="1061" y="515" width="1.3" height="1.3" fill="#fff" opacity="0.9"/><rect x="743" y="314" width="1.3" height="1.3" fill="#fff" opacity="0.4"/><rect x="705" y="41" width="1.3" height="1.3" fill="#fff" opacity="0.4"/><rect x="995" y="369" width="1.3" height="1.3" fill="#fff" opacity="0.35"/><rect x="1184" y="586" width="1.3" height="1.3" fill="#fff" opacity="1"/><rect x="798" y="184" width="1.3" height="1.3" fill="#fff" opacity="0.35"/><rect x="688" y="300" width="1.3" height="1.3" fill="#fff" opacity="1"/><rect x="1172" y="606" width="1.3" height="1.3" fill="#fff" opacity="0.6"/><rect x="855" y="646" width="1.3" height="1.3" fill="#fff" opacity="0.5"/><rect x="991" y="460" width="1.3" height="1.3" fill="#fff" opacity="0.6"/><rect x="988" y="536" width="1.3" height="1.3" fill="#fff" opacity="0.5"/><rect x="1304" y="464" width="1.3" height="1.3" fill="#fff" opacity="0.8"/><rect x="1291" y="593" width="1.3" height="1.3" fill="#fff" opacity="0.9"/><rect x="1230" y="91" width="1.3" height="1.3" fill="#fff" opacity="1"/><rect x="903" y="210" width="1.3" height="1.3" fill="#fff" opacity="0.4"/><rect x="793" y="49" width="1.3" height="1.3" fill="#fff" opacity="0.4"/><rect x="838" y="81" width="1.3" height="1.3" fill="#fff" opacity="0.35"/><rect x="730" y="476" width="1.3" height="1.3" fill="#fff" opacity="0.4"/><rect x="884" y="168" width="1.3" height="1.3" fill="#fff" opacity="0.9"/><rect x="1323" y="146" width="1.3" height="1.3" fill="#fff" opacity="1"/><rect x="908" y="324" width="1.3" height="1.3" fill="#fff" opacity="0.4"/><rect x="1225" y="107" width="1.3" height="1.3" fill="#fff" opacity="0.6"/><rect x="1343" y="268" width="1.3" height="1.3" fill="#fff" opacity="0.6"/><rect x="760" y="212" width="1.3" height="1.3" fill="#fff" opacity="0.4"/><rect x="884" y="224" width="1.3" height="1.3" fill="#fff" opacity="0.6"/><rect x="939" y="12" width="1.3" height="1.3" fill="#fff" opacity="0.8"/><rect x="995" y="196" width="1.3" height="1.3" fill="#fff" opacity="1"/><rect x="699" y="610" width="1.3" height="1.3" fill="#fff" opacity="0.9"/><rect x="1326" y="70" width="1.3" height="1.3" fill="#fff" opacity="0.8"/><rect x="816" y="602" width="1.3" height="1.3" fill="#fff" opacity="0.9"/><rect x="814" y="86" width="1.3" height="1.3" fill="#fff" opacity="0.6"/><rect x="1237" y="449" width="1.3" height="1.3" fill="#fff" opacity="0.8"/><rect x="913" y="356" width="1.3" height="1.3" fill="#fff" opacity="0.5"/><rect x="1034" y="465" width="1.3" height="1.3" fill="#fff" opacity="1"/><rect x="821" y="531" width="1.3" height="1.3" fill="#fff" opacity="0.9"/><rect x="927" y="48" width="1.3" height="1.3" fill="#fff" opacity="1"/><rect x="1080" y="532" width="1.3" height="1.3" fill="#fff" opacity="1"/><rect x="1061" y="148" width="1.3" height="1.3" fill="#fff" opacity="0.8"/><rect x="1247" y="301" width="1.3" height="1.3" fill="#fff" opacity="0.8"/><rect x="1343" y="277" width="1.3" height="1.3" fill="#fff" opacity="0.8"/><rect x="1071" y="29" width="1.3" height="1.3" fill="#fff" opacity="0.4"/><rect x="791" y="73" width="1.3" height="1.3" fill="#fff" opacity="0.9"/><rect x="808" y="120" width="1.3" height="1.3" fill="#fff" opacity="0.8"/><rect x="1076" y="353" width="1.3" height="1.3" fill="#fff" opacity="0.9"/><rect x="829" y="332" width="1.3" height="1.3" fill="#fff" opacity="0.9"/><rect x="814" y="534" width="1.3" height="1.3" fill="#fff" opacity="0.8"/><rect x="644" y="12" width="1.3" height="1.3" fill="#fff" opacity="0.5"/><rect x="1019" y="126" width="1.3" height="1.3" fill="#fff" opacity="0.6"/><rect x="796" y="297" width="1.3" height="1.3" fill="#fff" opacity="0.4"/><rect x="1215" y="287" width="1.3" height="1.3" fill="#fff" opacity="0.6"/><rect x="1016" y="590" width="1.3" height="1.3" fill="#fff" opacity="0.5"/><rect x="842" y="143" width="1.3" height="1.3" fill="#fff" opacity="0.9"/><rect x="867" y="553" width="1.3" height="1.3" fill="#fff" opacity="0.4"/><rect x="1149" y="93" width="1.3" height="1.3" fill="#fff" opacity="0.8"/><rect x="1334" y="556" width="1.3" height="1.3" fill="#fff" opacity="1"/><rect x="669" y="492" width="1.3" height="1.3" fill="#fff" opacity="0.8"/><rect x="931" y="37" width="1.3" height="1.3" fill="#fff" opacity="0.4"/><rect x="1231" y="578" width="1.3" height="1.3" fill="#fff" opacity="0.4"/><rect x="1326" y="398" width="1.3" height="1.3" fill="#fff" opacity="0.4"/><rect x="831" y="305" width="1.3" height="1.3" fill="#fff" opacity="0.9"/><rect x="813" y="2" width="1.3" height="1.3" fill="#fff" opacity="0.8"/><rect x="1319" y="646" width="1.3" height="1.3" fill="#fff" opacity="0.5"/><rect x="853" y="23" width="1.3" height="1.3" fill="#fff" opacity="0.8"/><rect x="776" y="121" width="1.3" height="1.3" fill="#fff" opacity="0.8"/><rect x="896" y="315" width="1.3" height="1.3" fill="#fff" opacity="0.5"/><rect x="1096" y="165" width="1.3" height="1.3" fill="#fff" opacity="0.35"/><rect x="621" y="175" width="1.3" height="1.3" fill="#fff" opacity="1"/><rect x="722" y="390" width="1.3" height="1.3" fill="#fff" opacity="0.6"/><rect x="633" y="202" width="1.3" height="1.3" fill="#fff" opacity="0.9"/><rect x="679" y="636" width="1.3" height="1.3" fill="#fff" opacity="0.35"/><rect x="1165" y="437" width="1.3" height="1.3" fill="#fff" opacity="0.4"/><rect x="1189" y="396" width="1.3" height="1.3" fill="#fff" opacity="0.35"/><rect x="855" y="654" width="1.3" height="1.3" fill="#fff" opacity="0.9"/><rect x="824" y="411" width="1.3" height="1.3" fill="#fff" opacity="0.9"/><rect x="649" y="555" width="1.3" height="1.3" fill="#fff" opacity="0.5"/><rect x="1075" y="487" width="1.3" height="1.3" fill="#fff" opacity="0.35"/><rect x="986" y="604" width="1.3" height="1.3" fill="#fff" opacity="0.35"/><rect x="985" y="554" width="1.3" height="1.3" fill="#fff" opacity="0.35"/><rect x="629" y="456" width="1.3" height="1.3" fill="#fff" opacity="0.35"/><rect x="1269" y="453" width="1.3" height="1.3" fill="#fff" opacity="0.4"/><rect x="1086" y="57" width="1.3" height="1.3" fill="#fff" opacity="1"/><rect x="714" y="240" width="1.3" height="1.3" fill="#fff" opacity="1"/><rect x="892" y="300" width="1.3" height="1.3" fill="#fff" opacity="1"/><rect x="1075" y="416" width="1.3" height="1.3" fill="#fff" opacity="0.4"/><rect x="796" y="175" width="1.3" height="1.3" fill="#fff" opacity="0.6"/><rect x="1199" y="497" width="1.3" height="1.3" fill="#fff" opacity="0.5"/><rect x="1272" y="61" width="1.3" height="1.3" fill="#fff" opacity="0.5"/><rect x="665" y="489" width="1.3" height="1.3" fill="#fff" opacity="0.8"/><rect x="1208" y="562" width="1.3" height="1.3" fill="#fff" opacity="0.9"/><rect x="1149" y="136" width="1.3" height="1.3" fill="#fff" opacity="0.4"/><rect x="1091" y="306" width="1.3" height="1.3" fill="#fff" opacity="0.35"/><rect x="896" y="318" width="1.3" height="1.3" fill="#fff" opacity="0.4"/><rect x="827" y="31" width="1.3" height="1.3" fill="#fff" opacity="0.4"/><rect x="1086" y="51" width="1.3" height="1.3" fill="#fff" opacity="0.9"/><rect x="859" y="433" width="1.3" height="1.3" fill="#fff" opacity="0.4"/><rect x="839" y="377" width="1.3" height="1.3" fill="#fff" opacity="1"/><rect x="969" y="323" width="1.3" height="1.3" fill="#fff" opacity="0.4"/><rect x="690" y="145" width="1.3" height="1.3" fill="#fff" opacity="0.6"/><rect x="829" y="343" width="1.3" height="1.3" fill="#fff" opacity="0.6"/><rect x="957" y="509" width="1.3" height="1.3" fill="#fff" opacity="0.5"/><rect x="762" y="649" width="1.3" height="1.3" fill="#fff" opacity="0.6"/><rect x="630" y="305" width="1.3" height="1.3" fill="#fff" opacity="0.35"/><rect x="987" y="660" width="1.3" height="1.3" fill="#fff" opacity="0.8"/><rect x="899" y="609" width="1.3" height="1.3" fill="#fff" opacity="0.9"/><rect x="671" y="60" width="1.3" height="1.3" fill="#fff" opacity="0.4"/><rect x="1000" y="633" width="1.3" height="1.3" fill="#fff" opacity="0.9"/><rect x="1057" y="419" width="1.3" height="1.3" fill="#fff" opacity="0.8"/><rect x="1264" y="467" width="1.3" height="1.3" fill="#fff" opacity="0.9"/><rect x="980" y="582" width="1.3" height="1.3" fill="#fff" opacity="0.6"/><rect x="635" y="2" width="1.3" height="1.3" fill="#fff" opacity="0.6"/><rect x="1115" y="269" width="1.3" height="1.3" fill="#fff" opacity="0.4"/><rect x="720" y="228" width="1.3" height="1.3" fill="#fff" opacity="0.8"/><rect x="705" y="220" width="1.3" height="1.3" fill="#fff" opacity="0.8"/><rect x="1165" y="557" width="1.3" height="1.3" fill="#fff" opacity="1"/><rect x="1303" y="130" width="1.3" height="1.3" fill="#fff" opacity="1"/><rect x="1275" y="192" width="1.3" height="1.3" fill="#fff" opacity="0.8"/><rect x="664" y="259" width="1.3" height="1.3" fill="#fff" opacity="0.35"/><rect x="1047" y="240" width="1.3" height="1.3" fill="#fff" opacity="0.6"/><rect x="1169" y="567" width="1.3" height="1.3" fill="#fff" opacity="0.8"/><rect x="691" y="554" width="1.3" height="1.3" fill="#fff" opacity="0.8"/><rect x="1081" y="99" width="1.3" height="1.3" fill="#fff" opacity="0.8"/><rect x="935" y="210" width="1.3" height="1.3" fill="#fff" opacity="0.35"/><rect x="890" y="635" width="1.3" height="1.3" fill="#fff" opacity="1"/><rect x="1210" y="419" width="1.3" height="1.3" fill="#fff" opacity="0.5"/><rect x="1018" y="478" width="1.3" height="1.3" fill="#fff" opacity="1"/><rect x="1298" y="273" width="1.3" height="1.3" fill="#fff" opacity="0.5"/><rect x="1166" y="428" width="1.3" height="1.3" fill="#fff" opacity="0.8"/><rect x="971" y="606" width="1.3" height="1.3" fill="#fff" opacity="0.5"/><rect x="710" y="314" width="1.3" height="1.3" fill="#fff" opacity="0.8"/><rect x="823" y="170" width="1.3" height="1.3" fill="#fff" opacity="0.4"/><rect x="1330" y="173" width="1.3" height="1.3" fill="#fff" opacity="0.4"/><rect x="791" y="321" width="1.3" height="1.3" fill="#fff" opacity="0.4"/><rect x="905" y="111" width="1.3" height="1.3" fill="#fff" opacity="0.9"/><rect x="672" y="332" width="1.3" height="1.3" fill="#fff" opacity="0.35"/><rect x="980" y="146" width="1.3" height="1.3" fill="#fff" opacity="0.8"/><rect x="1344" y="299" width="1.3" height="1.3" fill="#fff" opacity="0.9"/><rect x="1017" y="162" width="1.3" height="1.3" fill="#fff" opacity="0.9"/><rect x="867" y="60" width="1.3" height="1.3" fill="#fff" opacity="0.9"/><rect x="886" y="537" width="1.3" height="1.3" fill="#fff" opacity="0.9"/><rect x="1265" y="498" width="1.3" height="1.3" fill="#fff" opacity="0.6"/><rect x="896" y="495" width="1.3" height="1.3" fill="#fff" opacity="0.9"/><rect x="892" y="225" width="1.3" height="1.3" fill="#fff" opacity="1"/><rect x="981" y="381" width="1.3" height="1.3" fill="#fff" opacity="0.8"/><rect x="709" y="334" width="1.3" height="1.3" fill="#fff" opacity="0.4"/><rect x="1194" y="563" width="1.3" height="1.3" fill="#fff" opacity="1"/><rect x="815" y="165" width="1.3" height="1.3" fill="#fff" opacity="0.6"/><rect x="1088" y="287" width="1.3" height="1.3" fill="#fff" opacity="0.8"/><rect x="1237" y="580" width="1.3" height="1.3" fill="#fff" opacity="1"/><rect x="710" y="282" width="1.3" height="1.3" fill="#fff" opacity="0.35"/><rect x="1271" y="314" width="1.3" height="1.3" fill="#fff" opacity="0.5"/><rect x="975" y="49" width="1.3" height="1.3" fill="#fff" opacity="0.35"/><rect x="1002" y="311" width="1.3" height="1.3" fill="#fff" opacity="0.6"/><rect x="798" y="72" width="1.3" height="1.3" fill="#fff" opacity="0.9"/><rect x="728" y="645" width="1.3" height="1.3" fill="#fff" opacity="1"/><rect x="1304" y="479" width="1.3" height="1.3" fill="#fff" opacity="0.4"/><rect x="1235" y="594" width="1.3" height="1.3" fill="#fff" opacity="1"/><rect x="1020" y="26" width="1.3" height="1.3" fill="#fff" opacity="0.35"/><rect x="709" y="378" width="1.3" height="1.3" fill="#fff" opacity="1"/><rect x="1088" y="202" width="1.3" height="1.3" fill="#fff" opacity="0.9"/><rect x="1074" y="351" width="1.3" height="1.3" fill="#fff" opacity="0.6"/><rect x="1127" y="74" width="1.3" height="1.3" fill="#fff" opacity="1"/><rect x="836" y="627" width="1.3" height="1.3" fill="#fff" opacity="0.9"/><rect x="900" y="148" width="1.3" height="1.3" fill="#fff" opacity="0.5"/><rect x="618" y="357" width="1.3" height="1.3" fill="#fff" opacity="0.6"/><rect x="820" y="210" width="1.3" height="1.3" fill="#fff" opacity="0.35"/><rect x="1262" y="316" width="1.3" height="1.3" fill="#fff" opacity="0.9"/><rect x="1016" y="19" width="1.3" height="1.3" fill="#fff" opacity="0.6"/><rect x="1131" y="204" width="1.3" height="1.3" fill="#fff" opacity="1"/><rect x="759" y="588" width="1.3" height="1.3" fill="#fff" opacity="0.4"/><rect x="924" y="171" width="1.3" height="1.3" fill="#fff" opacity="0.4"/><rect x="927" y="246" width="1.3" height="1.3" fill="#fff" opacity="0.6"/><rect x="642" y="224" width="1.3" height="1.3" fill="#fff" opacity="0.6"/><rect x="881" y="263" width="1.3" height="1.3" fill="#fff" opacity="1"/><rect x="1199" y="491" width="1.3" height="1.3" fill="#fff" opacity="0.5"/><rect x="666" y="329" width="1.3" height="1.3" fill="#fff" opacity="0.9"/><rect x="845" y="544" width="1.3" height="1.3" fill="#fff" opacity="0.9"/><rect x="957" y="176" width="1.3" height="1.3" fill="#fff" opacity="0.8"/><rect x="697" y="414" width="1.3" height="1.3" fill="#fff" opacity="0.5"/><rect x="754" y="148" width="1.3" height="1.3" fill="#fff" opacity="0.6"/><rect x="1282" y="37" width="1.3" height="1.3" fill="#fff" opacity="0.5"/><rect x="724" y="261" width="1.3" height="1.3" fill="#fff" opacity="0.9"/><rect x="634" y="396" width="1.3" height="1.3" fill="#fff" opacity="0.6"/><rect x="655" y="40" width="1.3" height="1.3" fill="#fff" opacity="0.6"/><rect x="945" y="473" width="1.3" height="1.3" fill="#fff" opacity="0.8"/><rect x="1152" y="662" width="1.3" height="1.3" fill="#fff" opacity="0.9"/><rect x="857" y="123" width="1.3" height="1.3" fill="#fff" opacity="0.5"/><rect x="1162" y="21" width="1.3" height="1.3" fill="#fff" opacity="0.4"/><rect x="1147" y="557" width="1.3" height="1.3" fill="#fff" opacity="0.8"/><rect x="940" y="72" width="1.3" height="1.3" fill="#fff" opacity="1"/><rect x="821" y="233" width="1.3" height="1.3" fill="#fff" opacity="1"/><rect x="1027" y="504" width="1.3" height="1.3" fill="#fff" opacity="0.6"/><rect x="877" y="546" width="1.3" height="1.3" fill="#fff" opacity="0.35"/><rect x="1204" y="58" width="1.3" height="1.3" fill="#fff" opacity="0.4"/><rect x="963" y="247" width="1.3" height="1.3" fill="#fff" opacity="0.6"/><rect x="758" y="242" width="1.3" height="1.3" fill="#fff" opacity="0.6"/><rect x="639" y="273" width="1.3" height="1.3" fill="#fff" opacity="0.35"/><rect x="1074" y="269" width="1.3" height="1.3" fill="#fff" opacity="0.6"/><rect x="642" y="42" width="1.3" height="1.3" fill="#fff" opacity="1"/><rect x="805" y="496" width="1.3" height="1.3" fill="#fff" opacity="0.5"/><rect x="865" y="181" width="1.3" height="1.3" fill="#fff" opacity="0.5"/><rect x="649" y="496" width="1.3" height="1.3" fill="#fff" opacity="0.4"/><rect x="848" y="183" width="1.3" height="1.3" fill="#fff" opacity="1"/><rect x="1144" y="395" width="1.3" height="1.3" fill="#fff" opacity="0.35"/><rect x="1080" y="626" width="1.3" height="1.3" fill="#fff" opacity="1"/><rect x="1220" y="71" width="1.3" height="1.3" fill="#fff" opacity="0.4"/><rect x="1315" y="633" width="1.3" height="1.3" fill="#fff" opacity="0.6"/><rect x="1194" y="607" width="1.3" height="1.3" fill="#fff" opacity="0.35"/><rect x="977" y="616" width="1.3" height="1.3" fill="#fff" opacity="0.9"/><rect x="623" y="618" width="1.3" height="1.3" fill="#fff" opacity="0.8"/><rect x="1218" y="513" width="1.3" height="1.3" fill="#fff" opacity="0.5"/><rect x="789" y="572" width="1.3" height="1.3" fill="#fff" opacity="0.6"/><rect x="881" y="519" width="1.3" height="1.3" fill="#fff" opacity="1"/><rect x="991" y="260" width="1.3" height="1.3" fill="#fff" opacity="0.9"/><rect x="798" y="43" width="1.3" height="1.3" fill="#fff" opacity="1"/><rect x="969" y="362" width="1.3" height="1.3" fill="#fff" opacity="0.9"/><rect x="1333" y="587" width="1.3" height="1.3" fill="#fff" opacity="1"/><rect x="810" y="56" width="1.3" height="1.3" fill="#fff" opacity="1"/><rect x="924" y="656" width="1.3" height="1.3" fill="#fff" opacity="0.6"/><rect x="743" y="88" width="1.3" height="1.3" fill="#fff" opacity="0.6"/><rect x="1070" y="448" width="1.3" height="1.3" fill="#fff" opacity="0.4"/><rect x="1010" y="514" width="1.3" height="1.3" fill="#fff" opacity="0.35"/><rect x="705" y="558" width="1.3" height="1.3" fill="#fff" opacity="0.8"/><rect x="821" y="178" width="1.3" height="1.3" fill="#fff" opacity="0.8"/><rect x="1156" y="132" width="1.3" height="1.3" fill="#fff" opacity="0.9"/><rect x="753" y="156" width="1.3" height="1.3" fill="#fff" opacity="0.8"/><rect x="1262" y="384" width="1.3" height="1.3" fill="#fff" opacity="0.8"/><rect x="664" y="167" width="1.3" height="1.3" fill="#fff" opacity="0.9"/><rect x="987" y="154" width="1.3" height="1.3" fill="#fff" opacity="0.35"/><rect x="690" y="308" width="1.3" height="1.3" fill="#fff" opacity="1"/><rect x="692" y="315" width="1.3" height="1.3" fill="#fff" opacity="0.35"/><rect x="786" y="298" width="1.3" height="1.3" fill="#fff" opacity="0.8"/><rect x="646" y="195" width="1.3" height="1.3" fill="#fff" opacity="1"/><rect x="654" y="399" width="1.3" height="1.3" fill="#fff" opacity="0.35"/><rect x="1043" y="618" width="1.3" height="1.3" fill="#fff" opacity="0.8"/><rect x="991" y="118" width="1.3" height="1.3" fill="#fff" opacity="0.5"/><rect x="807" y="516" width="1.3" height="1.3" fill="#fff" opacity="1"/><rect x="694" y="396" width="1.3" height="1.3" fill="#fff" opacity="0.5"/><rect x="872" y="25" width="1.3" height="1.3" fill="#fff" opacity="0.8"/><rect x="720" y="135" width="1.3" height="1.3" fill="#fff" opacity="0.8"/><rect x="645" y="486" width="1.3" height="1.3" fill="#fff" opacity="0.9"/><rect x="1212" y="544" width="1.3" height="1.3" fill="#fff" opacity="0.6"/><rect x="1112" y="123" width="1.3" height="1.3" fill="#fff" opacity="0.8"/><rect x="674" y="21" width="1.3" height="1.3" fill="#fff" opacity="0.6"/><rect x="1017" y="42" width="1.3" height="1.3" fill="#fff" opacity="1"/><rect x="1198" y="441" width="1.3" height="1.3" fill="#fff" opacity="0.9"/><rect x="1084" y="61" width="1.3" height="1.3" fill="#fff" opacity="0.9"/><rect x="907" y="180" width="1.3" height="1.3" fill="#fff" opacity="0.8"/><rect x="1105" y="277" width="1.3" height="1.3" fill="#fff" opacity="1"/><rect x="845" y="376" width="1.3" height="1.3" fill="#fff" opacity="0.8"/><rect x="919" y="12" width="1.3" height="1.3" fill="#fff" opacity="0.35"/><rect x="1345" y="242" width="1.3" height="1.3" fill="#fff" opacity="0.9"/><rect x="902" y="269" width="1.3" height="1.3" fill="#fff" opacity="1"/><rect x="934" y="104" width="1.3" height="1.3" fill="#fff" opacity="1"/><rect x="1216" y="270" width="1.3" height="1.3" fill="#fff" opacity="0.8"/><rect x="953" y="108" width="1.3" height="1.3" fill="#fff" opacity="1"/><rect x="655" y="95" width="1.3" height="1.3" fill="#fff" opacity="0.35"/><rect x="1281" y="59" width="1.3" height="1.3" fill="#fff" opacity="0.5"/><rect x="1294" y="490" width="1.3" height="1.3" fill="#fff" opacity="0.9"/><rect x="723" y="188" width="1.3" height="1.3" fill="#fff" opacity="0.5"/><rect x="742" y="45" width="1.3" height="1.3" fill="#fff" opacity="0.6"/><rect x="975" y="534" width="1.3" height="1.3" fill="#fff" opacity="0.35"/><rect x="761" y="84" width="1.3" height="1.3" fill="#fff" opacity="1"/><rect x="1329" y="321" width="1.3" height="1.3" fill="#fff" opacity="1"/><rect x="1061" y="423" width="1.3" height="1.3" fill="#fff" opacity="1"/><rect x="1277" y="412" width="1.3" height="1.3" fill="#fff" opacity="0.35"/><rect x="1268" y="425" width="1.3" height="1.3" fill="#fff" opacity="0.35"/><rect x="779" y="269" width="1.3" height="1.3" fill="#fff" opacity="0.35"/><rect x="760" y="314" width="1.3" height="1.3" fill="#fff" opacity="0.5"/><rect x="776" y="265" width="1.3" height="1.3" fill="#fff" opacity="0.5"/><rect x="731" y="239" width="1.3" height="1.3" fill="#fff" opacity="0.9"/><rect x="797" y="481" width="1.3" height="1.3" fill="#fff" opacity="0.9"/><rect x="647" y="373" width="1.3" height="1.3" fill="#fff" opacity="0.35"/><rect x="1108" y="443" width="1.3" height="1.3" fill="#fff" opacity="0.8"/><rect x="703" y="398" width="1.3" height="1.3" fill="#fff" opacity="0.5"/><rect x="1237" y="517" width="1.3" height="1.3" fill="#fff" opacity="0.4"/><rect x="924" y="387" width="1.3" height="1.3" fill="#fff" opacity="0.6"/><rect x="901" y="244" width="1.3" height="1.3" fill="#fff" opacity="0.5"/><rect x="937" y="16" width="1.3" height="1.3" fill="#fff" opacity="0.5"/><rect x="1337" y="309" width="1.3" height="1.3" fill="#fff" opacity="0.6"/><rect x="1174" y="518" width="1.3" height="1.3" fill="#fff" opacity="0.6"/><rect x="1228" y="538" width="1.3" height="1.3" fill="#fff" opacity="0.6"/><rect x="695" y="85" width="1.3" height="1.3" fill="#fff" opacity="0.6"/><rect x="884" y="533" width="1.3" height="1.3" fill="#fff" opacity="0.5"/><rect x="989" y="27" width="1.3" height="1.3" fill="#fff" opacity="0.4"/><rect x="712" y="612" width="1.3" height="1.3" fill="#fff" opacity="0.8"/><rect x="1185" y="340" width="1.3" height="1.3" fill="#fff" opacity="1"/><rect x="1166" y="594" width="1.3" height="1.3" fill="#fff" opacity="0.4"/><rect x="1311" y="90" width="1.3" height="1.3" fill="#fff" opacity="0.35"/><rect x="665" y="408" width="1.3" height="1.3" fill="#fff" opacity="0.4"/><rect x="1212" y="129" width="1.3" height="1.3" fill="#fff" opacity="0.6"/><rect x="827" y="539" width="1.3" height="1.3" fill="#fff" opacity="0.35"/><rect x="738" y="523" width="1.3" height="1.3" fill="#fff" opacity="0.9"/><rect x="665" y="233" width="1.3" height="1.3" fill="#fff" opacity="0.35"/><rect x="801" y="215" width="1.3" height="1.3" fill="#fff" opacity="0.5"/><rect x="818" y="542" width="1.3" height="1.3" fill="#fff" opacity="0.9"/><rect x="803" y="640" width="1.3" height="1.3" fill="#fff" opacity="0.6"/><rect x="769" y="175" width="1.3" height="1.3" fill="#fff" opacity="0.5"/><rect x="790" y="247" width="1.3" height="1.3" fill="#fff" opacity="0.9"/><rect x="750" y="107" width="1.3" height="1.3" fill="#fff" opacity="0.8"/><rect x="1113" y="595" width="1.3" height="1.3" fill="#fff" opacity="0.9"/><rect x="1195" y="176" width="1.3" height="1.3" fill="#fff" opacity="0.35"/><rect x="1004" y="423" width="1.3" height="1.3" fill="#fff" opacity="0.8"/><rect x="1322" y="301" width="1.3" height="1.3" fill="#fff" opacity="0.5"/><rect x="1040" y="586" width="1.3" height="1.3" fill="#fff" opacity="1"/><rect x="801" y="356" width="1.3" height="1.3" fill="#fff" opacity="0.35"/><rect x="905" y="530" width="1.3" height="1.3" fill="#fff" opacity="0.8"/><rect x="891" y="245" width="1.3" height="1.3" fill="#fff" opacity="0.9"/><rect x="880" y="508" width="1.3" height="1.3" fill="#fff" opacity="0.6"/><rect x="785" y="409" width="1.3" height="1.3" fill="#fff" opacity="1"/><rect x="833" y="343" width="1.3" height="1.3" fill="#fff" opacity="0.8"/><rect x="1084" y="653" width="1.3" height="1.3" fill="#fff" opacity="0.5"/><rect x="1295" y="595" width="1.3" height="1.3" fill="#fff" opacity="0.4"/><rect x="618" y="22" width="1.3" height="1.3" fill="#fff" opacity="0.9"/><rect x="829" y="415" width="1.3" height="1.3" fill="#fff" opacity="0.6"/><rect x="991" y="595" width="1.3" height="1.3" fill="#fff" opacity="0.9"/><rect x="974" y="407" width="1.3" height="1.3" fill="#fff" opacity="1"/><rect x="633" y="2" width="1.3" height="1.3" fill="#fff" opacity="0.8"/><rect x="839" y="347" width="1.3" height="1.3" fill="#fff" opacity="0.5"/><rect x="781" y="388" width="1.3" height="1.3" fill="#fff" opacity="0.5"/><rect x="715" y="243" width="1.3" height="1.3" fill="#fff" opacity="0.35"/><rect x="964" y="89" width="1.3" height="1.3" fill="#fff" opacity="0.35"/><rect x="4" y="99" width="1.3" height="1.3" fill="#fff" opacity="1"/><rect x="1" y="96" width="1.3" height="1.3" fill="#fff" opacity="0.4"/><rect x="13" y="267" width="1.3" height="1.3" fill="#fff" opacity="0.8"/><rect x="16" y="37" width="1.3" height="1.3" fill="#fff" opacity="0.35"/><rect x="10" y="233" width="1.3" height="1.3" fill="#fff" opacity="0.4"/><rect x="10" y="400" width="1.3" height="1.3" fill="#fff" opacity="0.5"/><rect x="12" y="165" width="1.3" height="1.3" fill="#fff" opacity="1"/><rect x="1" y="353" width="1.3" height="1.3" fill="#fff" opacity="0.6"/><rect x="3" y="106" width="1.3" height="1.3" fill="#fff" opacity="0.35"/><rect x="2" y="407" width="1.3" height="1.3" fill="#fff" opacity="0.4"/><rect x="16" y="94" width="1.3" height="1.3" fill="#fff" opacity="0.9"/><rect x="9" y="427" width="1.3" height="1.3" fill="#fff" opacity="0.4"/><rect x="11" y="540" width="1.3" height="1.3" fill="#fff" opacity="0.9"/><rect x="9" y="42" width="1.3" height="1.3" fill="#fff" opacity="0.4"/><rect x="1" y="591" width="1.3" height="1.3" fill="#fff" opacity="0.35"/><rect x="8" y="358" width="1.3" height="1.3" fill="#fff" opacity="0.6"/><rect x="14" y="495" width="1.3" height="1.3" fill="#fff" opacity="0.6"/><rect x="1" y="435" width="1.3" height="1.3" fill="#fff" opacity="0.9"/><rect x="153" y="371" width="1.3" height="1.3" fill="#fff" opacity="0.9"/><rect x="405" y="371" width="1.3" height="1.3" fill="#fff" opacity="0.4"/><rect x="575" y="378" width="1.3" height="1.3" fill="#fff" opacity="0.8"/><rect x="446" y="372" width="1.3" height="1.3" fill="#fff" opacity="0.5"/><rect x="427" y="375" width="1.3" height="1.3" fill="#fff" opacity="0.5"/><rect x="603" y="372" width="1.3" height="1.3" fill="#fff" opacity="0.9"/><rect x="69" y="374" width="1.3" height="1.3" fill="#fff" opacity="0.9"/><rect x="174" y="372" width="1.3" height="1.3" fill="#fff" opacity="0.4"/><rect x="139" y="371" width="1.3" height="1.3" fill="#fff" opacity="0.8"/><rect x="133" y="373" width="1.3" height="1.3" fill="#fff" opacity="0.5"/><rect x="161" y="377" width="1.3" height="1.3" fill="#fff" opacity="0.4"/><rect x="573" y="378" width="1.3" height="1.3" fill="#fff" opacity="0.35"/><rect x="607" y="374" width="1.3" height="1.3" fill="#fff" opacity="0.35"/><rect x="337" y="370" width="1.3" height="1.3" fill="#fff" opacity="1"/><rect x="281" y="376" width="1.3" height="1.3" fill="#fff" opacity="0.5"/><rect x="551" y="376" width="1.3" height="1.3" fill="#fff" opacity="0.6"/><rect x="392" y="371" width="1.3" height="1.3" fill="#fff" opacity="0.9"/><rect x="104" y="370" width="1.3" height="1.3" fill="#fff" opacity="1"/><rect x="392" y="371" width="1.3" height="1.3" fill="#fff" opacity="0.9"/><rect x="440" y="370" width="1.3" height="1.3" fill="#fff" opacity="0.9"/><g fill="none" stroke="#fff" stroke-width="1.2"><circle cx="676" cy="332" r="181"/><path d="M617 67.6 L1015.4 46.3 L1044 581"/><path d="M617 603 L1044 581"/><path d="M674.3 322 V344 M663 333 H685.5" stroke-width="1.4"/></g><g fill="none" stroke="#fff" stroke-width="1.15" stroke-dasharray="2.2 3.4"><circle cx="671.6" cy="332" r="447"/><circle cx="667.7" cy="332" r="632.5"/><circle cx="675" cy="332" r="726"/></g><g fill="#fff"><circle cx="714" cy="59" r="3.6"/><circle cx="972" cy="139" r="2.6"/><circle cx="1204" cy="363" r="3.6"/><circle cx="655" cy="393" r="3"/><circle cx="1044" cy="581" r="4.2"/><circle cx="1066" cy="607" r="7"/><circle cx="689" cy="599" r="5"/><circle cx="675" cy="607" r="4"/><circle cx="1279" cy="401" r="3.6"/></g><circle cx="1279" cy="401" r="5.6" fill="none" stroke="#fff" stroke-width="1"/><circle cx="1066" cy="607" r="8.3" fill="none" stroke="#fff" stroke-width="0.8" opacity="0.8"/><rect x="1054.5" y="575.5" width="66" height="15.5" fill="#000" stroke="#fff" stroke-width="1.2"/><rect x="696.5" y="607.5" width="25" height="15" fill="#000" stroke="#fff" stroke-width="1.2"/><g stroke="#9c9cf0" stroke-width="1.1" fill="none"><path d="M1336.5 17 V47 M1330 47 H1343.5 M1336.5 34 L1339.5 45"/><path d="M1327.5 13.5 V6 L1333 13.5 V6"/></g><rect x="5" y="4.5" width="30" height="25" fill="#fff"/><circle cx="16" cy="16" r="8.5" fill="#9a9a9a"/><rect x="6.5" y="33.5" width="30" height="87" fill="#fff"/></g></svg>
<div style="position:absolute;left:1066.50px;top:730.5px;font-size:11px;color:#fff;white-space:pre;line-height:normal;transform:scaleX(0.9236);transform-origin:0 0;">(1,1) QSI 583</div>
<div style="position:absolute;left:709.00px;top:762px;font-size:11px;color:#fff;white-space:pre;line-height:normal;transform:scaleX(0.9224);transform-origin:0 0;">003°</div>
<div style="position:absolute;left:22.00px;top:189px;font-size:11px;color:#000;white-space:pre;line-height:normal;transform:scaleX(0.8173);transform-origin:0 0;">C</div>
<div style="position:absolute;left:12px;top:821px;width:1347px;height:1px;box-sizing:border-box;background:#a8a8a8;"></div>
<div style="position:absolute;left:12px;top:821px;width:1px;height:23px;box-sizing:border-box;background:#a8a8a8;"></div>
<div style="position:absolute;left:12px;top:844px;width:1348px;height:1px;box-sizing:border-box;background:#c8ccd2;"></div>
<div style="position:absolute;left:1359px;top:821px;width:1px;height:24px;box-sizing:border-box;background:#a4a8b0;"></div>
<div style="position:absolute;left:673px;top:821px;width:1px;height:22px;box-sizing:border-box;background:#a8a8a8;"></div>
<div style="position:absolute;left:1001px;top:821px;width:1px;height:22px;box-sizing:border-box;background:#a8a8a8;"></div>
<div style="position:absolute;left:17.50px;top:822.7px;font-size:12px;color:#000;white-space:pre;line-height:normal;">Zoom=64</div>
<div style="position:absolute;left:679.50px;top:823px;font-size:11px;color:#a01414;white-space:pre;line-height:normal;transform:scaleX(0.9609);transform-origin:0 0;">Mode carte Equatorial, sideral, Date/heure PC temps réel</div>
<div style="position:absolute;left:1007.50px;top:823px;font-size:11px;color:#a01414;white-space:pre;line-height:normal;transform:scaleX(0.9502);transform-origin:0 0;">EQ. 2018-1-21 (4.14s)</div>
<div style="position:absolute;left:28px;top:108px;width:600px;height:416px;box-sizing:border-box;border:1px solid #434a52;border-radius:7px 7px 1px 1px;background:linear-gradient(to bottom,#c4c8d6 0px,#c5c9d7 3px,#cfd9e3 6px,#c9dcec 11px,#cddaf0 17px,#d8e3f0 22px,#e1ecf6 27px,#e3effb 30px,#dcebfa 32px,#dcebfa 100%);"></div>
<div style="position:absolute;left:29px;top:109px;width:598px;height:414px;box-sizing:border-box;border:1px solid rgba(255,255,255,0.7);border-radius:6px 6px 0 0;"></div>
<svg style="position:absolute;left:38px;top:119px;" width="17" height="17" viewBox="0 0 16 16"><rect x="12.40" y="6.10" width="3.8" height="3.8" transform="rotate(0 14.30 8.00)" fill="#1c1c1c"/><rect x="10.55" y="10.55" width="3.8" height="3.8" transform="rotate(45 12.45 12.45)" fill="#1c1c1c"/><rect x="6.10" y="12.40" width="3.8" height="3.8" transform="rotate(90 8.00 14.30)" fill="#1c1c1c"/><rect x="1.65" y="10.55" width="3.8" height="3.8" transform="rotate(135 3.55 12.45)" fill="#1c1c1c"/><rect x="-0.20" y="6.10" width="3.8" height="3.8" transform="rotate(180 1.70 8.00)" fill="#1c1c1c"/><rect x="1.65" y="1.65" width="3.8" height="3.8" transform="rotate(225 3.55 3.55)" fill="#1c1c1c"/><rect x="6.10" y="-0.20" width="3.8" height="3.8" transform="rotate(270 8.00 1.70)" fill="#1c1c1c"/><rect x="10.55" y="1.65" width="3.8" height="3.8" transform="rotate(315 12.45 3.55)" fill="#1c1c1c"/><circle cx="8" cy="8" r="5.6" fill="#2a2a2a"/><circle cx="8" cy="8" r="4.2" fill="#b8b0a8"/><circle cx="8" cy="8" r="1.8" fill="#6a625c"/></svg>
<div style="position:absolute;left:59.00px;top:120.5px;font-size:12px;color:#8e98a6;white-space:pre;line-height:normal;transform:scaleX(0.9488);transform-origin:0 0;">Temperature CCD, toutes les 5s</div>
<svg style="position:absolute;left:518px;top:118px;" width="101" height="19"><defs><linearGradient id="cbg" x1="0" y1="0" x2="0" y2="1"><stop offset="0" stop-color="#c3d2e8"/><stop offset="0.45" stop-color="#cbd9ec"/><stop offset="0.5" stop-color="#c3d3e8"/><stop offset="1" stop-color="#d3e0f0"/></linearGradient></defs><rect x="0.5" y="0.5" width="31" height="17" rx="3" fill="url(#cbg)" stroke="#8497b3"/><rect x="34.5" y="0.5" width="31" height="17" rx="3" fill="url(#cbg)" stroke="#8497b3"/><rect x="68.5" y="0.5" width="31" height="17" rx="3" fill="url(#cbg)" stroke="#8497b3"/><rect x="11" y="9.5" width="10" height="3.5" rx="1" fill="#fff" stroke="#46505f" stroke-width="1.2"/><rect x="44.5" y="4.5" width="10" height="8" rx="1" fill="#fff" stroke="#46505f" stroke-width="1.2"/><rect x="47.5" y="7.5" width="4" height="2" fill="#fff" stroke="#46505f" stroke-width="1"/><path d="M79 4.5 L83.5 8 L88 4.5 L89.5 6 L85.5 9 L89.5 12 L88 13.5 L83.5 10 L79 13.5 L77.5 12 L81.5 9 L77.5 6Z" fill="#fff" stroke="#46505f" stroke-width="1.1"/></svg>
<div style="position:absolute;left:36px;top:139px;width:584px;height:378px;box-sizing:border-box;background:#fff;border:1px solid #b4c0d0;"></div>
<div style="position:absolute;left:39px;top:142px;width:577px;height:328px;box-sizing:border-box;background:#fff;border:1px solid #000;"></div>
<div style="position:absolute;left:37px;top:476px;width:73px;height:21px;box-sizing:border-box;background:#e9e9e9;border:1px solid #adadad;"></div>
<div style="position:absolute;left:51.50px;top:480.5px;font-size:11px;color:#000;white-space:pre;line-height:normal;transform:scaleX(0.9466);transform-origin:0 0;">Réglages</div>
<div style="position:absolute;left:37px;top:498px;width:583px;height:1px;box-sizing:border-box;background:#e2e2e2;"></div>
<div style="position:absolute;left:185px;top:501px;width:1px;height:15px;box-sizing:border-box;background:#e2e2e2;"></div>
<div style="position:absolute;left:38.30px;top:502.79999999999995px;font-size:11px;color:#000;white-space:pre;line-height:normal;transform:scaleX(0.9474);transform-origin:0 0;">579x330</div>
<svg style="position:absolute;left:610px;top:507px;" width="9" height="9"><rect x="6" y="0" width="2" height="2" fill="#a9a9a9"/><rect x="3" y="3" width="2" height="2" fill="#a9a9a9"/><rect x="6" y="3" width="2" height="2" fill="#a9a9a9"/><rect x="0" y="6" width="2" height="2" fill="#a9a9a9"/><rect x="3" y="6" width="2" height="2" fill="#a9a9a9"/><rect x="6" y="6" width="2" height="2" fill="#a9a9a9"/></svg>
<svg style="position:absolute;left:0;top:0" width="700" height="960"><path d="M151.5 191.5 V421.5" stroke="#9c9c9c" stroke-width="1"/><path d="M215.5 191.5 V421.5" stroke="#9c9c9c" stroke-width="1"/><path d="M280.5 191.5 V421.5" stroke="#9c9c9c" stroke-width="1"/><path d="M345.5 191.5 V421.5" stroke="#9c9c9c" stroke-width="1"/><path d="M409.5 191.5 V421.5" stroke="#9c9c9c" stroke-width="1"/><path d="M474.5 191.5 V421.5" stroke="#9c9c9c" stroke-width="1"/><path d="M538.5 191.5 V421.5" stroke="#9c9c9c" stroke-width="1"/><path d="M88.5 282.5 H567.5" stroke="#9c9c9c" stroke-width="1"/><path d="M88.5 382.5 H567.5" stroke="#9c9c9c" stroke-width="1"/><rect x="88.5" y="191.5" width="479" height="230" fill="none" stroke="#000" stroke-width="1.3"/><path d="M93.2 421.5 v4" stroke="#000" stroke-width="1.2"/><path d="M99.6 421.5 v4" stroke="#000" stroke-width="1.2"/><path d="M106.1 421.5 v4" stroke="#000" stroke-width="1.2"/><path d="M112.5 421.5 v4" stroke="#000" stroke-width="1.2"/><path d="M119.0 421.5 v4" stroke="#000" stroke-width="1.2"/><path d="M125.5 421.5 v4" stroke="#000" stroke-width="1.2"/><path d="M131.9 421.5 v4" stroke="#000" stroke-width="1.2"/><path d="M138.4 421.5 v4" stroke="#000" stroke-width="1.2"/><path d="M144.8 421.5 v4" stroke="#000" stroke-width="1.2"/><path d="M151.3 421.5 v9" stroke="#000" stroke-width="1.2"/><path d="M157.8 421.5 v4" stroke="#000" stroke-width="1.2"/><path d="M164.2 421.5 v4" stroke="#000" stroke-width="1.2"/><path d="M170.7 421.5 v4" stroke="#000" stroke-width="1.2"/><path d="M177.1 421.5 v4" stroke="#000" stroke-width="1.2"/><path d="M183.6 421.5 v4" stroke="#000" stroke-width="1.2"/><path d="M190.1 421.5 v4" stroke="#000" stroke-width="1.2"/><path d="M196.5 421.5 v4" stroke="#000" stroke-width="1.2"/><path d="M203.0 421.5 v4" stroke="#000" stroke-width="1.2"/><path d="M209.4 421.5 v4" stroke="#000" stroke-width="1.2"/><path d="M215.9 421.5 v9" stroke="#000" stroke-width="1.2"/><path d="M222.4 421.5 v4" stroke="#000" stroke-width="1.2"/><path d="M228.8 421.5 v4" stroke="#000" stroke-width="1.2"/><path d="M235.3 421.5 v4" stroke="#000" stroke-width="1.2"/><path d="M241.7 421.5 v4" stroke="#000" stroke-width="1.2"/><path d="M248.2 421.5 v4" stroke="#000" stroke-width="1.2"/><path d="M254.7 421.5 v4" stroke="#000" stroke-width="1.2"/><path d="M261.1 421.5 v4" stroke="#000" stroke-width="1.2"/><path d="M267.6 421.5 v4" stroke="#000" stroke-width="1.2"/><path d="M274.0 421.5 v4" stroke="#000" stroke-width="1.2"/><path d="M280.5 421.5 v9" stroke="#000" stroke-width="1.2"/><path d="M287.0 421.5 v4" stroke="#000" stroke-width="1.2"/><path d="M293.4 421.5 v4" stroke="#000" stroke-width="1.2"/><path d="M299.9 421.5 v4" stroke="#000" stroke-width="1.2"/><path d="M306.3 421.5 v4" stroke="#000" stroke-width="1.2"/><path d="M312.8 421.5 v4" stroke="#000" stroke-width="1.2"/><path d="M319.3 421.5 v4" stroke="#000" stroke-width="1.2"/><path d="M325.7 421.5 v4" stroke="#000" stroke-width="1.2"/><path d="M332.2 421.5 v4" stroke="#000" stroke-width="1.2"/><path d="M338.6 421.5 v4" stroke="#000" stroke-width="1.2"/><path d="M345.1 421.5 v9" stroke="#000" stroke-width="1.2"/><path d="M351.6 421.5 v4" stroke="#000" stroke-width="1.2"/><path d="M358.0 421.5 v4" stroke="#000" stroke-width="1.2"/><path d="M364.5 421.5 v4" stroke="#000" stroke-width="1.2"/><path d="M370.9 421.5 v4" stroke="#000" stroke-width="1.2"/><path d="M377.4 421.5 v4" stroke="#000" stroke-width="1.2"/><path d="M383.9 421.5 v4" stroke="#000" stroke-width="1.2"/><path d="M390.3 421.5 v4" stroke="#000" stroke-width="1.2"/><path d="M396.8 421.5 v4" stroke="#000" stroke-width="1.2"/><path d="M403.2 421.5 v4" stroke="#000" stroke-width="1.2"/><path d="M409.7 421.5 v9" stroke="#000" stroke-width="1.2"/><path d="M416.2 421.5 v4" stroke="#000" stroke-width="1.2"/><path d="M422.6 421.5 v4" stroke="#000" stroke-width="1.2"/><path d="M429.1 421.5 v4" stroke="#000" stroke-width="1.2"/><path d="M435.5 421.5 v4" stroke="#000" stroke-width="1.2"/><path d="M442.0 421.5 v4" stroke="#000" stroke-width="1.2"/><path d="M448.5 421.5 v4" stroke="#000" stroke-width="1.2"/><path d="M454.9 421.5 v4" stroke="#000" stroke-width="1.2"/><path d="M461.4 421.5 v4" stroke="#000" stroke-width="1.2"/><path d="M467.8 421.5 v4" stroke="#000" stroke-width="1.2"/><path d="M474.3 421.5 v9" stroke="#000" stroke-width="1.2"/><path d="M480.8 421.5 v4" stroke="#000" stroke-width="1.2"/><path d="M487.2 421.5 v4" stroke="#000" stroke-width="1.2"/><path d="M493.7 421.5 v4" stroke="#000" stroke-width="1.2"/><path d="M500.1 421.5 v4" stroke="#000" stroke-width="1.2"/><path d="M506.6 421.5 v4" stroke="#000" stroke-width="1.2"/><path d="M513.1 421.5 v4" stroke="#000" stroke-width="1.2"/><path d="M519.5 421.5 v4" stroke="#000" stroke-width="1.2"/><path d="M526.0 421.5 v4" stroke="#000" stroke-width="1.2"/><path d="M532.4 421.5 v4" stroke="#000" stroke-width="1.2"/><path d="M538.9 421.5 v9" stroke="#000" stroke-width="1.2"/><path d="M545.4 421.5 v4" stroke="#000" stroke-width="1.2"/><path d="M551.8 421.5 v4" stroke="#000" stroke-width="1.2"/><path d="M558.3 421.5 v4" stroke="#000" stroke-width="1.2"/><path d="M564.7 421.5 v4" stroke="#000" stroke-width="1.2"/><path d="M88.5 422.3 h-4" stroke="#000" stroke-width="1.2"/><path d="M88.5 412.3 h-4" stroke="#000" stroke-width="1.2"/><path d="M88.5 402.2 h-4" stroke="#000" stroke-width="1.2"/><path d="M88.5 392.2 h-4" stroke="#000" stroke-width="1.2"/><path d="M88.5 382.2 h-4" stroke="#000" stroke-width="1.2"/><path d="M88.5 372.2 h-4" stroke="#000" stroke-width="1.2"/><path d="M88.5 362.1 h-4" stroke="#000" stroke-width="1.2"/><path d="M88.5 352.1 h-4" stroke="#000" stroke-width="1.2"/><path d="M88.5 342.1 h-4" stroke="#000" stroke-width="1.2"/><path d="M88.5 332.0 h-4" stroke="#000" stroke-width="1.2"/><path d="M88.5 322.0 h-4" stroke="#000" stroke-width="1.2"/><path d="M88.5 312.0 h-4" stroke="#000" stroke-width="1.2"/><path d="M88.5 301.9 h-4" stroke="#000" stroke-width="1.2"/><path d="M88.5 291.9 h-4" stroke="#000" stroke-width="1.2"/><path d="M88.5 281.9 h-4" stroke="#000" stroke-width="1.2"/><path d="M88.5 271.9 h-4" stroke="#000" stroke-width="1.2"/><path d="M88.5 261.8 h-4" stroke="#000" stroke-width="1.2"/><path d="M88.5 251.8 h-4" stroke="#000" stroke-width="1.2"/><path d="M88.5 241.8 h-4" stroke="#000" stroke-width="1.2"/><path d="M88.5 231.7 h-4" stroke="#000" stroke-width="1.2"/><path d="M88.5 221.7 h-4" stroke="#000" stroke-width="1.2"/><path d="M88.5 211.7 h-4" stroke="#000" stroke-width="1.2"/><path d="M88.5 201.6 h-4" stroke="#000" stroke-width="1.2"/><path d="M88.5 191.6 h-4" stroke="#000" stroke-width="1.2"/><path d="M88.5 282.2 h-9" stroke="#000" stroke-width="1.2"/><path d="M88.5 382.5 h-9" stroke="#000" stroke-width="1.2"/><path d="M88.5 422.6 L93.9 422.6 L99.3 412.6 L104.6 392.5 L110.0 392.5 L115.4 382.5 L120.8 372.5 L126.2 362.4 L131.6 362.4 L136.9 352.4 L142.3 342.4 L147.7 332.4 L153.1 332.4 L158.5 332.4 L163.8 322.3 L169.2 322.3 L174.6 312.3 L180.0 312.3 L185.4 302.3 L190.8 302.3 L196.1 302.3 L201.5 292.2 L206.9 292.2 L212.3 292.2 L217.7 282.2 L223.1 282.2 L228.4 282.2 L233.8 272.2 L239.2 272.2 L244.6 262.1 L250.0 262.1 L255.3 262.1 L260.7 262.1 L266.1 252.1 L271.5 252.1 L276.9 252.1 L282.3 252.1 L287.6 252.1 L293.0 242.1 L298.4 242.1 L303.8 242.1 L309.2 242.1 L314.5 242.1 L319.9 242.1 L325.3 232.1 L330.7 232.1 L336.1 232.1 L341.5 232.1 L346.8 232.1 L352.2 232.1 L357.6 232.1 L363.0 232.1 L368.4 232.1 L373.7 222.0 L379.1 222.0 L384.5 222.0 L389.9 222.0 L395.3 222.0 L400.7 222.0 L406.0 222.0 L411.4 222.0 L416.8 222.0 L422.2 222.0 L427.6 212.0 L432.9 212.0 L438.3 212.0 L443.7 212.0 L449.1 212.0 L454.5 212.0 L459.9 212.0 L465.2 212.0 L470.6 212.0 L476.0 212.0 L481.4 212.0 L486.8 202.0 L492.2 202.0 L497.5 202.0 L502.9 202.0 L508.3 202.0 L513.7 202.0 L519.1 202.0 L524.4 202.0 L529.8 202.0 L535.2 202.0 L540.6 202.0 L546.0 202.0 L551.4 202.0 L556.7 202.0 L562.1 191.9 L567.5 191.9" fill="none" stroke="#000" stroke-width="1"/><circle cx="88.5" cy="422.6" r="2.9" fill="none" stroke="#000" stroke-width="1.1"/><circle cx="93.9" cy="422.6" r="2.9" fill="none" stroke="#000" stroke-width="1.1"/><circle cx="99.3" cy="412.6" r="2.9" fill="none" stroke="#000" stroke-width="1.1"/><circle cx="104.6" cy="392.5" r="2.9" fill="none" stroke="#000" stroke-width="1.1"/><circle cx="110.0" cy="392.5" r="2.9" fill="none" stroke="#000" stroke-width="1.1"/><circle cx="115.4" cy="382.5" r="2.9" fill="none" stroke="#000" stroke-width="1.1"/><circle cx="120.8" cy="372.5" r="2.9" fill="none" stroke="#000" stroke-width="1.1"/><circle cx="126.2" cy="362.4" r="2.9" fill="none" stroke="#000" stroke-width="1.1"/><circle cx="131.6" cy="362.4" r="2.9" fill="none" stroke="#000" stroke-width="1.1"/><circle cx="136.9" cy="352.4" r="2.9" fill="none" stroke="#000" stroke-width="1.1"/><circle cx="142.3" cy="342.4" r="2.9" fill="none" stroke="#000" stroke-width="1.1"/><circle cx="147.7" cy="332.4" r="2.9" fill="none" stroke="#000" stroke-width="1.1"/><circle cx="153.1" cy="332.4" r="2.9" fill="none" stroke="#000" stroke-width="1.1"/><circle cx="158.5" cy="332.4" r="2.9" fill="none" stroke="#000" stroke-width="1.1"/><circle cx="163.8" cy="322.3" r="2.9" fill="none" stroke="#000" stroke-width="1.1"/><circle cx="169.2" cy="322.3" r="2.9" fill="none" stroke="#000" stroke-width="1.1"/><circle cx="174.6" cy="312.3" r="2.9" fill="none" stroke="#000" stroke-width="1.1"/><circle cx="180.0" cy="312.3" r="2.9" fill="none" stroke="#000" stroke-width="1.1"/><circle cx="185.4" cy="302.3" r="2.9" fill="none" stroke="#000" stroke-width="1.1"/><circle cx="190.8" cy="302.3" r="2.9" fill="none" stroke="#000" stroke-width="1.1"/><circle cx="196.1" cy="302.3" r="2.9" fill="none" stroke="#000" stroke-width="1.1"/><circle cx="201.5" cy="292.2" r="2.9" fill="none" stroke="#000" stroke-width="1.1"/><circle cx="206.9" cy="292.2" r="2.9" fill="none" stroke="#000" stroke-width="1.1"/><circle cx="212.3" cy="292.2" r="2.9" fill="none" stroke="#000" stroke-width="1.1"/><circle cx="217.7" cy="282.2" r="2.9" fill="none" stroke="#000" stroke-width="1.1"/><circle cx="223.1" cy="282.2" r="2.9" fill="none" stroke="#000" stroke-width="1.1"/><circle cx="228.4" cy="282.2" r="2.9" fill="none" stroke="#000" stroke-width="1.1"/><circle cx="233.8" cy="272.2" r="2.9" fill="none" stroke="#000" stroke-width="1.1"/><circle cx="239.2" cy="272.2" r="2.9" fill="none" stroke="#000" stroke-width="1.1"/><circle cx="244.6" cy="262.1" r="2.9" fill="none" stroke="#000" stroke-width="1.1"/><circle cx="250.0" cy="262.1" r="2.9" fill="none" stroke="#000" stroke-width="1.1"/><circle cx="255.3" cy="262.1" r="2.9" fill="none" stroke="#000" stroke-width="1.1"/><circle cx="260.7" cy="262.1" r="2.9" fill="none" stroke="#000" stroke-width="1.1"/><circle cx="266.1" cy="252.1" r="2.9" fill="none" stroke="#000" stroke-width="1.1"/><circle cx="271.5" cy="252.1" r="2.9" fill="none" stroke="#000" stroke-width="1.1"/><circle cx="276.9" cy="252.1" r="2.9" fill="none" stroke="#000" stroke-width="1.1"/><circle cx="282.3" cy="252.1" r="2.9" fill="none" stroke="#000" stroke-width="1.1"/><circle cx="287.6" cy="252.1" r="2.9" fill="none" stroke="#000" stroke-width="1.1"/><circle cx="293.0" cy="242.1" r="2.9" fill="none" stroke="#000" stroke-width="1.1"/><circle cx="298.4" cy="242.1" r="2.9" fill="none" stroke="#000" stroke-width="1.1"/><circle cx="303.8" cy="242.1" r="2.9" fill="none" stroke="#000" stroke-width="1.1"/><circle cx="309.2" cy="242.1" r="2.9" fill="none" stroke="#000" stroke-width="1.1"/><circle cx="314.5" cy="242.1" r="2.9" fill="none" stroke="#000" stroke-width="1.1"/><circle cx="319.9" cy="242.1" r="2.9" fill="none" stroke="#000" stroke-width="1.1"/><circle cx="325.3" cy="232.1" r="2.9" fill="none" stroke="#000" stroke-width="1.1"/><circle cx="330.7" cy="232.1" r="2.9" fill="none" stroke="#000" stroke-width="1.1"/><circle cx="336.1" cy="232.1" r="2.9" fill="none" stroke="#000" stroke-width="1.1"/><circle cx="341.5" cy="232.1" r="2.9" fill="none" stroke="#000" stroke-width="1.1"/><circle cx="346.8" cy="232.1" r="2.9" fill="none" stroke="#000" stroke-width="1.1"/><circle cx="352.2" cy="232.1" r="2.9" fill="none" stroke="#000" stroke-width="1.1"/><circle cx="357.6" cy="232.1" r="2.9" fill="none" stroke="#000" stroke-width="1.1"/><circle cx="363.0" cy="232.1" r="2.9" fill="none" stroke="#000" stroke-width="1.1"/><circle cx="368.4" cy="232.1" r="2.9" fill="none" stroke="#000" stroke-width="1.1"/><circle cx="373.7" cy="222.0" r="2.9" fill="none" stroke="#000" stroke-width="1.1"/><circle cx="379.1" cy="222.0" r="2.9" fill="none" stroke="#000" stroke-width="1.1"/><circle cx="384.5" cy="222.0" r="2.9" fill="none" stroke="#000" stroke-width="1.1"/><circle cx="389.9" cy="222.0" r="2.9" fill="none" stroke="#000" stroke-width="1.1"/><circle cx="395.3" cy="222.0" r="2.9" fill="none" stroke="#000" stroke-width="1.1"/><circle cx="400.7" cy="222.0" r="2.9" fill="none" stroke="#000" stroke-width="1.1"/><circle cx="406.0" cy="222.0" r="2.9" fill="none" stroke="#000" stroke-width="1.1"/><circle cx="411.4" cy="222.0" r="2.9" fill="none" stroke="#000" stroke-width="1.1"/><circle cx="416.8" cy="222.0" r="2.9" fill="none" stroke="#000" stroke-width="1.1"/><circle cx="422.2" cy="222.0" r="2.9" fill="none" stroke="#000" stroke-width="1.1"/><circle cx="427.6" cy="212.0" r="2.9" fill="none" stroke="#000" stroke-width="1.1"/><circle cx="432.9" cy="212.0" r="2.9" fill="none" stroke="#000" stroke-width="1.1"/><circle cx="438.3" cy="212.0" r="2.9" fill="none" stroke="#000" stroke-width="1.1"/><circle cx="443.7" cy="212.0" r="2.9" fill="none" stroke="#000" stroke-width="1.1"/><circle cx="449.1" cy="212.0" r="2.9" fill="none" stroke="#000" stroke-width="1.1"/><circle cx="454.5" cy="212.0" r="2.9" fill="none" stroke="#000" stroke-width="1.1"/><circle cx="459.9" cy="212.0" r="2.9" fill="none" stroke="#000" stroke-width="1.1"/><circle cx="465.2" cy="212.0" r="2.9" fill="none" stroke="#000" stroke-width="1.1"/><circle cx="470.6" cy="212.0" r="2.9" fill="none" stroke="#000" stroke-width="1.1"/><circle cx="476.0" cy="212.0" r="2.9" fill="none" stroke="#000" stroke-width="1.1"/><circle cx="481.4" cy="212.0" r="2.9" fill="none" stroke="#000" stroke-width="1.1"/><circle cx="486.8" cy="202.0" r="2.9" fill="none" stroke="#000" stroke-width="1.1"/><circle cx="492.2" cy="202.0" r="2.9" fill="none" stroke="#000" stroke-width="1.1"/><circle cx="497.5" cy="202.0" r="2.9" fill="none" stroke="#000" stroke-width="1.1"/><circle cx="502.9" cy="202.0" r="2.9" fill="none" stroke="#000" stroke-width="1.1"/><circle cx="508.3" cy="202.0" r="2.9" fill="none" stroke="#000" stroke-width="1.1"/><circle cx="513.7" cy="202.0" r="2.9" fill="none" stroke="#000" stroke-width="1.1"/><circle cx="519.1" cy="202.0" r="2.9" fill="none" stroke="#000" stroke-width="1.1"/><circle cx="524.4" cy="202.0" r="2.9" fill="none" stroke="#000" stroke-width="1.1"/><circle cx="529.8" cy="202.0" r="2.9" fill="none" stroke="#000" stroke-width="1.1"/><circle cx="535.2" cy="202.0" r="2.9" fill="none" stroke="#000" stroke-width="1.1"/><circle cx="540.6" cy="202.0" r="2.9" fill="none" stroke="#000" stroke-width="1.1"/><circle cx="546.0" cy="202.0" r="2.9" fill="none" stroke="#000" stroke-width="1.1"/><circle cx="551.4" cy="202.0" r="2.9" fill="none" stroke="#000" stroke-width="1.1"/><circle cx="556.7" cy="202.0" r="2.9" fill="none" stroke="#000" stroke-width="1.1"/><circle cx="562.1" cy="191.9" r="2.9" fill="none" stroke="#000" stroke-width="1.1"/><circle cx="567.5" cy="191.9" r="2.9" fill="none" stroke="#000" stroke-width="1.1"/><path d="M567.0 180.9 v9 M569.5 191.9 h9" stroke="#d42828" stroke-width="1"/></svg>
<div style="position:absolute;left:88.00px;top:166.7px;font-size:10.67px;color:#000;white-space:pre;line-height:normal;">Temperature CCD, toutes les 5s</div>
<div style="position:absolute;left:147.83px;top:435px;font-size:10.67px;color:#000;white-space:pre;line-height:normal;">1</div>
<div style="position:absolute;left:212.43px;top:435px;font-size:10.67px;color:#000;white-space:pre;line-height:normal;">2</div>
<div style="position:absolute;left:277.03px;top:435px;font-size:10.67px;color:#000;white-space:pre;line-height:normal;">3</div>
<div style="position:absolute;left:341.63px;top:435px;font-size:10.67px;color:#000;white-space:pre;line-height:normal;">4</div>
<div style="position:absolute;left:406.23px;top:435px;font-size:10.67px;color:#000;white-space:pre;line-height:normal;">5</div>
<div style="position:absolute;left:470.83px;top:435px;font-size:10.67px;color:#000;white-space:pre;line-height:normal;">6</div>
<div style="position:absolute;left:535.43px;top:435px;font-size:10.67px;color:#000;white-space:pre;line-height:normal;">7</div>
<div style="position:absolute;left:297.50px;top:451.3px;font-size:10.67px;color:#000;white-space:pre;line-height:normal;transform:scaleX(1.0064);transform-origin:0 0;">Temps (Min)</div>
<div style="position:absolute;left:60.64px;top:276px;font-size:10.67px;color:#000;white-space:pre;line-height:normal;">13</div>
<div style="position:absolute;left:60.64px;top:376.5px;font-size:10.67px;color:#000;white-space:pre;line-height:normal;">12</div>
<div style="position:absolute;left:581.45px;top:252px;font-size:10.67px;color:#000;white-space:pre;line-height:normal;">V</div>
<div style="position:absolute;left:582.03px;top:263px;font-size:10.67px;color:#000;white-space:pre;line-height:normal;">a</div>
<div style="position:absolute;left:583.81px;top:272.5px;font-size:10.67px;color:#000;white-space:pre;line-height:normal;">l</div>
<div style="position:absolute;left:582.03px;top:282px;font-size:10.67px;color:#000;white-space:pre;line-height:normal;">e</div>
<div style="position:absolute;left:582.03px;top:291.5px;font-size:10.67px;color:#000;white-space:pre;line-height:normal;">u</div>
<div style="position:absolute;left:583.22px;top:301px;font-size:10.67px;color:#000;white-space:pre;line-height:normal;">r</div>
<div style="position:absolute;left:583.5px;top:332px;width:3px;height:3px;box-sizing:border-box;border:1px solid #000;"></div>
<div style="position:absolute;left:581.15px;top:342px;font-size:10.67px;color:#000;white-space:pre;line-height:normal;">C</div>
<div style="position:absolute;left:31px;top:531px;width:600px;height:416px;box-sizing:border-box;border:1px solid #434a52;border-radius:7px 7px 1px 1px;background:linear-gradient(to bottom,#c4c8d6 0px,#c5c9d7 3px,#cfd9e3 6px,#c9dcec 11px,#cddaf0 17px,#d8e3f0 22px,#e1ecf6 27px,#e3effb 30px,#dcebfa 32px,#dcebfa 100%);"></div>
<div style="position:absolute;left:32px;top:532px;width:598px;height:414px;box-sizing:border-box;border:1px solid rgba(255,255,255,0.7);border-radius:6px 6px 0 0;"></div>
<svg style="position:absolute;left:41px;top:542px;" width="17" height="17" viewBox="0 0 16 16"><rect x="12.40" y="6.10" width="3.8" height="3.8" transform="rotate(0 14.30 8.00)" fill="#1c1c1c"/><rect x="10.55" y="10.55" width="3.8" height="3.8" transform="rotate(45 12.45 12.45)" fill="#1c1c1c"/><rect x="6.10" y="12.40" width="3.8" height="3.8" transform="rotate(90 8.00 14.30)" fill="#1c1c1c"/><rect x="1.65" y="10.55" width="3.8" height="3.8" transform="rotate(135 3.55 12.45)" fill="#1c1c1c"/><rect x="-0.20" y="6.10" width="3.8" height="3.8" transform="rotate(180 1.70 8.00)" fill="#1c1c1c"/><rect x="1.65" y="1.65" width="3.8" height="3.8" transform="rotate(225 3.55 3.55)" fill="#1c1c1c"/><rect x="6.10" y="-0.20" width="3.8" height="3.8" transform="rotate(270 8.00 1.70)" fill="#1c1c1c"/><rect x="10.55" y="1.65" width="3.8" height="3.8" transform="rotate(315 12.45 3.55)" fill="#1c1c1c"/><circle cx="8" cy="8" r="5.6" fill="#2a2a2a"/><circle cx="8" cy="8" r="4.2" fill="#b8b0a8"/><circle cx="8" cy="8" r="1.8" fill="#6a625c"/></svg>
<div style="position:absolute;left:62.00px;top:543.5px;font-size:12px;color:#8e98a6;white-space:pre;line-height:normal;transform:scaleX(0.9481);transform-origin:0 0;">Puissance, toute les 5s</div>
<svg style="position:absolute;left:521px;top:541px;" width="101" height="19"><defs><linearGradient id="cbg" x1="0" y1="0" x2="0" y2="1"><stop offset="0" stop-color="#c3d2e8"/><stop offset="0.45" stop-color="#cbd9ec"/><stop offset="0.5" stop-color="#c3d3e8"/><stop offset="1" stop-color="#d3e0f0"/></linearGradient></defs><rect x="0.5" y="0.5" width="31" height="17" rx="3" fill="url(#cbg)" stroke="#8497b3"/><rect x="34.5" y="0.5" width="31" height="17" rx="3" fill="url(#cbg)" stroke="#8497b3"/><rect x="68.5" y="0.5" width="31" height="17" rx="3" fill="url(#cbg)" stroke="#8497b3"/><rect x="11" y="9.5" width="10" height="3.5" rx="1" fill="#fff" stroke="#46505f" stroke-width="1.2"/><rect x="44.5" y="4.5" width="10" height="8" rx="1" fill="#fff" stroke="#46505f" stroke-width="1.2"/><rect x="47.5" y="7.5" width="4" height="2" fill="#fff" stroke="#46505f" stroke-width="1"/><path d="M79 4.5 L83.5 8 L88 4.5 L89.5 6 L85.5 9 L89.5 12 L88 13.5 L83.5 10 L79 13.5 L77.5 12 L81.5 9 L77.5 6Z" fill="#fff" stroke="#46505f" stroke-width="1.1"/></svg>
<div style="position:absolute;left:39px;top:562px;width:584px;height:378px;box-sizing:border-box;background:#fff;border:1px solid #b4c0d0;"></div>
<div style="position:absolute;left:42px;top:565px;width:577px;height:328px;box-sizing:border-box;background:#fff;border:1px solid #000;"></div>
<div style="position:absolute;left:40px;top:899px;width:73px;height:21px;box-sizing:border-box;background:#e9e9e9;border:1px solid #adadad;"></div>
<div style="position:absolute;left:54.50px;top:903.5px;font-size:11px;color:#000;white-space:pre;line-height:normal;transform:scaleX(0.9466);transform-origin:0 0;">Réglages</div>
<div style="position:absolute;left:40px;top:921px;width:583px;height:1px;box-sizing:border-box;background:#e2e2e2;"></div>
<div style="position:absolute;left:188px;top:924px;width:1px;height:15px;box-sizing:border-box;background:#e2e2e2;"></div>
<div style="position:absolute;left:41.30px;top:925.8px;font-size:11px;color:#000;white-space:pre;line-height:normal;transform:scaleX(0.9474);transform-origin:0 0;">579x330</div>
<svg style="position:absolute;left:613px;top:930px;" width="9" height="9"><rect x="6" y="0" width="2" height="2" fill="#a9a9a9"/><rect x="3" y="3" width="2" height="2" fill="#a9a9a9"/><rect x="6" y="3" width="2" height="2" fill="#a9a9a9"/><rect x="0" y="6" width="2" height="2" fill="#a9a9a9"/><rect x="3" y="6" width="2" height="2" fill="#a9a9a9"/><rect x="6" y="6" width="2" height="2" fill="#a9a9a9"/></svg>
<svg style="position:absolute;left:0;top:0" width="700" height="960"><path d="M156.5 614.5 V844.5" stroke="#9c9c9c" stroke-width="1"/><path d="M220.5 614.5 V844.5" stroke="#9c9c9c" stroke-width="1"/><path d="M285.5 614.5 V844.5" stroke="#9c9c9c" stroke-width="1"/><path d="M350.5 614.5 V844.5" stroke="#9c9c9c" stroke-width="1"/><path d="M414.5 614.5 V844.5" stroke="#9c9c9c" stroke-width="1"/><path d="M479.5 614.5 V844.5" stroke="#9c9c9c" stroke-width="1"/><path d="M544.5 614.5 V844.5" stroke="#9c9c9c" stroke-width="1"/><rect x="91.5" y="614.5" width="479" height="230" fill="none" stroke="#000" stroke-width="1.3"/><path d="M91.5 844.5 v9" stroke="#000" stroke-width="1.2"/><path d="M98.0 844.5 v4" stroke="#000" stroke-width="1.2"/><path d="M104.4 844.5 v4" stroke="#000" stroke-width="1.2"/><path d="M110.9 844.5 v4" stroke="#000" stroke-width="1.2"/><path d="M117.4 844.5 v4" stroke="#000" stroke-width="1.2"/><path d="M123.8 844.5 v4" stroke="#000" stroke-width="1.2"/><path d="M130.3 844.5 v4" stroke="#000" stroke-width="1.2"/><path d="M136.8 844.5 v4" stroke="#000" stroke-width="1.2"/><path d="M143.3 844.5 v4" stroke="#000" stroke-width="1.2"/><path d="M149.7 844.5 v4" stroke="#000" stroke-width="1.2"/><path d="M156.2 844.5 v9" stroke="#000" stroke-width="1.2"/><path d="M162.7 844.5 v4" stroke="#000" stroke-width="1.2"/><path d="M169.1 844.5 v4" stroke="#000" stroke-width="1.2"/><path d="M175.6 844.5 v4" stroke="#000" stroke-width="1.2"/><path d="M182.1 844.5 v4" stroke="#000" stroke-width="1.2"/><path d="M188.6 844.5 v4" stroke="#000" stroke-width="1.2"/><path d="M195.0 844.5 v4" stroke="#000" stroke-width="1.2"/><path d="M201.5 844.5 v4" stroke="#000" stroke-width="1.2"/><path d="M208.0 844.5 v4" stroke="#000" stroke-width="1.2"/><path d="M214.4 844.5 v4" stroke="#000" stroke-width="1.2"/><path d="M220.9 844.5 v9" stroke="#000" stroke-width="1.2"/><path d="M227.4 844.5 v4" stroke="#000" stroke-width="1.2"/><path d="M233.8 844.5 v4" stroke="#000" stroke-width="1.2"/><path d="M240.3 844.5 v4" stroke="#000" stroke-width="1.2"/><path d="M246.8 844.5 v4" stroke="#000" stroke-width="1.2"/><path d="M253.2 844.5 v4" stroke="#000" stroke-width="1.2"/><path d="M259.7 844.5 v4" stroke="#000" stroke-width="1.2"/><path d="M266.2 844.5 v4" stroke="#000" stroke-width="1.2"/><path d="M272.7 844.5 v4" stroke="#000" stroke-width="1.2"/><path d="M279.1 844.5 v4" stroke="#000" stroke-width="1.2"/><path d="M285.6 844.5 v9" stroke="#000" stroke-width="1.2"/><path d="M292.1 844.5 v4" stroke="#000" stroke-width="1.2"/><path d="M298.5 844.5 v4" stroke="#000" stroke-width="1.2"/><path d="M305.0 844.5 v4" stroke="#000" stroke-width="1.2"/><path d="M311.5 844.5 v4" stroke="#000" stroke-width="1.2"/><path d="M317.9 844.5 v4" stroke="#000" stroke-width="1.2"/><path d="M324.4 844.5 v4" stroke="#000" stroke-width="1.2"/><path d="M330.9 844.5 v4" stroke="#000" stroke-width="1.2"/><path d="M337.4 844.5 v4" stroke="#000" stroke-width="1.2"/><path d="M343.8 844.5 v4" stroke="#000" stroke-width="1.2"/><path d="M350.3 844.5 v9" stroke="#000" stroke-width="1.2"/><path d="M356.8 844.5 v4" stroke="#000" stroke-width="1.2"/><path d="M363.2 844.5 v4" stroke="#000" stroke-width="1.2"/><path d="M369.7 844.5 v4" stroke="#000" stroke-width="1.2"/><path d="M376.2 844.5 v4" stroke="#000" stroke-width="1.2"/><path d="M382.6 844.5 v4" stroke="#000" stroke-width="1.2"/><path d="M389.1 844.5 v4" stroke="#000" stroke-width="1.2"/><path d="M395.6 844.5 v4" stroke="#000" stroke-width="1.2"/><path d="M402.1 844.5 v4" stroke="#000" stroke-width="1.2"/><path d="M408.5 844.5 v4" stroke="#000" stroke-width="1.2"/><path d="M415.0 844.5 v9" stroke="#000" stroke-width="1.2"/><path d="M421.5 844.5 v4" stroke="#000" stroke-width="1.2"/><path d="M427.9 844.5 v4" stroke="#000" stroke-width="1.2"/><path d="M434.4 844.5 v4" stroke="#000" stroke-width="1.2"/><path d="M440.9 844.5 v4" stroke="#000" stroke-width="1.2"/><path d="M447.4 844.5 v4" stroke="#000" stroke-width="1.2"/><path d="M453.8 844.5 v4" stroke="#000" stroke-width="1.2"/><path d="M460.3 844.5 v4" stroke="#000" stroke-width="1.2"/><path d="M466.8 844.5 v4" stroke="#000" stroke-width="1.2"/><path d="M473.2 844.5 v4" stroke="#000" stroke-width="1.2"/><path d="M479.7 844.5 v9" stroke="#000" stroke-width="1.2"/><path d="M486.2 844.5 v4" stroke="#000" stroke-width="1.2"/><path d="M492.6 844.5 v4" stroke="#000" stroke-width="1.2"/><path d="M499.1 844.5 v4" stroke="#000" stroke-width="1.2"/><path d="M505.6 844.5 v4" stroke="#000" stroke-width="1.2"/><path d="M512.0 844.5 v4" stroke="#000" stroke-width="1.2"/><path d="M518.5 844.5 v4" stroke="#000" stroke-width="1.2"/><path d="M525.0 844.5 v4" stroke="#000" stroke-width="1.2"/><path d="M531.5 844.5 v4" stroke="#000" stroke-width="1.2"/><path d="M537.9 844.5 v4" stroke="#000" stroke-width="1.2"/><path d="M544.4 844.5 v9" stroke="#000" stroke-width="1.2"/><path d="M550.9 844.5 v4" stroke="#000" stroke-width="1.2"/><path d="M557.3 844.5 v4" stroke="#000" stroke-width="1.2"/><path d="M563.8 844.5 v4" stroke="#000" stroke-width="1.2"/><path d="M570.3 844.5 v4" stroke="#000" stroke-width="1.2"/><path d="M91.5 844.5 h-4" stroke="#000" stroke-width="1.2"/><path d="M91.5 833.0 h-4" stroke="#000" stroke-width="1.2"/><path d="M91.5 821.5 h-4" stroke="#000" stroke-width="1.2"/><path d="M91.5 810.1 h-4" stroke="#000" stroke-width="1.2"/><path d="M91.5 798.6 h-4" stroke="#000" stroke-width="1.2"/><path d="M91.5 787.1 h-4" stroke="#000" stroke-width="1.2"/><path d="M91.5 775.6 h-4" stroke="#000" stroke-width="1.2"/><path d="M91.5 764.1 h-4" stroke="#000" stroke-width="1.2"/><path d="M91.5 752.7 h-4" stroke="#000" stroke-width="1.2"/><path d="M91.5 741.2 h-4" stroke="#000" stroke-width="1.2"/><path d="M91.5 729.7 h-4" stroke="#000" stroke-width="1.2"/><path d="M91.5 718.2 h-4" stroke="#000" stroke-width="1.2"/><path d="M91.5 706.7 h-4" stroke="#000" stroke-width="1.2"/><path d="M91.5 695.3 h-4" stroke="#000" stroke-width="1.2"/><path d="M91.5 683.8 h-4" stroke="#000" stroke-width="1.2"/><path d="M91.5 672.3 h-4" stroke="#000" stroke-width="1.2"/><path d="M91.5 660.8 h-4" stroke="#000" stroke-width="1.2"/><path d="M91.5 649.3 h-4" stroke="#000" stroke-width="1.2"/><path d="M91.5 637.9 h-4" stroke="#000" stroke-width="1.2"/><path d="M91.5 626.4 h-4" stroke="#000" stroke-width="1.2"/><path d="M91.5 614.9 h-4" stroke="#000" stroke-width="1.2"/><path d="M91.5 614.5 h-9" stroke="#000" stroke-width="1.2"/><path d="M91.5 729.5 h-9" stroke="#000" stroke-width="1.2"/><path d="M91.5 844.5 h-9" stroke="#000" stroke-width="1.2"/><path d="M87.5 729.5 H574.5" stroke="#000" stroke-width="1"/><path d="M91.5 729.5 H576.5" stroke="#a03038" stroke-width="1" opacity="0.8"/><circle cx="91.5" cy="729.5" r="2.9" fill="none" stroke="#000" stroke-width="1.1"/><circle cx="96.9" cy="729.5" r="2.9" fill="none" stroke="#000" stroke-width="1.1"/><circle cx="102.3" cy="729.5" r="2.9" fill="none" stroke="#000" stroke-width="1.1"/><circle cx="107.6" cy="729.5" r="2.9" fill="none" stroke="#000" stroke-width="1.1"/><circle cx="113.0" cy="729.5" r="2.9" fill="none" stroke="#000" stroke-width="1.1"/><circle cx="118.4" cy="729.5" r="2.9" fill="none" stroke="#000" stroke-width="1.1"/><circle cx="123.8" cy="729.5" r="2.9" fill="none" stroke="#000" stroke-width="1.1"/><circle cx="129.2" cy="729.5" r="2.9" fill="none" stroke="#000" stroke-width="1.1"/><circle cx="134.6" cy="729.5" r="2.9" fill="none" stroke="#000" stroke-width="1.1"/><circle cx="139.9" cy="729.5" r="2.9" fill="none" stroke="#000" stroke-width="1.1"/><circle cx="145.3" cy="729.5" r="2.9" fill="none" stroke="#000" stroke-width="1.1"/><circle cx="150.7" cy="729.5" r="2.9" fill="none" stroke="#000" stroke-width="1.1"/><circle cx="156.1" cy="729.5" r="2.9" fill="none" stroke="#000" stroke-width="1.1"/><circle cx="161.5" cy="729.5" r="2.9" fill="none" stroke="#000" stroke-width="1.1"/><circle cx="166.8" cy="729.5" r="2.9" fill="none" stroke="#000" stroke-width="1.1"/><circle cx="172.2" cy="729.5" r="2.9" fill="none" stroke="#000" stroke-width="1.1"/><circle cx="177.6" cy="729.5" r="2.9" fill="none" stroke="#000" stroke-width="1.1"/><circle cx="183.0" cy="729.5" r="2.9" fill="none" stroke="#000" stroke-width="1.1"/><circle cx="188.4" cy="729.5" r="2.9" fill="none" stroke="#000" stroke-width="1.1"/><circle cx="193.8" cy="729.5" r="2.9" fill="none" stroke="#000" stroke-width="1.1"/><circle cx="199.1" cy="729.5" r="2.9" fill="none" stroke="#000" stroke-width="1.1"/><circle cx="204.5" cy="729.5" r="2.9" fill="none" stroke="#000" stroke-width="1.1"/><circle cx="209.9" cy="729.5" r="2.9" fill="none" stroke="#000" stroke-width="1.1"/><circle cx="215.3" cy="729.5" r="2.9" fill="none" stroke="#000" stroke-width="1.1"/><circle cx="220.7" cy="729.5" r="2.9" fill="none" stroke="#000" stroke-width="1.1"/><circle cx="226.1" cy="729.5" r="2.9" fill="none" stroke="#000" stroke-width="1.1"/><circle cx="231.4" cy="729.5" r="2.9" fill="none" stroke="#000" stroke-width="1.1"/><circle cx="236.8" cy="729.5" r="2.9" fill="none" stroke="#000" stroke-width="1.1"/><circle cx="242.2" cy="729.5" r="2.9" fill="none" stroke="#000" stroke-width="1.1"/><circle cx="247.6" cy="729.5" r="2.9" fill="none" stroke="#000" stroke-width="1.1"/><circle cx="253.0" cy="729.5" r="2.9" fill="none" stroke="#000" stroke-width="1.1"/><circle cx="258.3" cy="729.5" r="2.9" fill="none" stroke="#000" stroke-width="1.1"/><circle cx="263.7" cy="729.5" r="2.9" fill="none" stroke="#000" stroke-width="1.1"/><circle cx="269.1" cy="729.5" r="2.9" fill="none" stroke="#000" stroke-width="1.1"/><circle cx="274.5" cy="729.5" r="2.9" fill="none" stroke="#000" stroke-width="1.1"/><circle cx="279.9" cy="729.5" r="2.9" fill="none" stroke="#000" stroke-width="1.1"/><circle cx="285.3" cy="729.5" r="2.9" fill="none" stroke="#000" stroke-width="1.1"/><circle cx="290.6" cy="729.5" r="2.9" fill="none" stroke="#000" stroke-width="1.1"/><circle cx="296.0" cy="729.5" r="2.9" fill="none" stroke="#000" stroke-width="1.1"/><circle cx="301.4" cy="729.5" r="2.9" fill="none" stroke="#000" stroke-width="1.1"/><circle cx="306.8" cy="729.5" r="2.9" fill="none" stroke="#000" stroke-width="1.1"/><circle cx="312.2" cy="729.5" r="2.9" fill="none" stroke="#000" stroke-width="1.1"/><circle cx="317.5" cy="729.5" r="2.9" fill="none" stroke="#000" stroke-width="1.1"/><circle cx="322.9" cy="729.5" r="2.9" fill="none" stroke="#000" stroke-width="1.1"/><circle cx="328.3" cy="729.5" r="2.9" fill="none" stroke="#000" stroke-width="1.1"/><circle cx="333.7" cy="729.5" r="2.9" fill="none" stroke="#000" stroke-width="1.1"/><circle cx="339.1" cy="729.5" r="2.9" fill="none" stroke="#000" stroke-width="1.1"/><circle cx="344.5" cy="729.5" r="2.9" fill="none" stroke="#000" stroke-width="1.1"/><circle cx="349.8" cy="729.5" r="2.9" fill="none" stroke="#000" stroke-width="1.1"/><circle cx="355.2" cy="729.5" r="2.9" fill="none" stroke="#000" stroke-width="1.1"/><circle cx="360.6" cy="729.5" r="2.9" fill="none" stroke="#000" stroke-width="1.1"/><circle cx="366.0" cy="729.5" r="2.9" fill="none" stroke="#000" stroke-width="1.1"/><circle cx="371.4" cy="729.5" r="2.9" fill="none" stroke="#000" stroke-width="1.1"/><circle cx="376.7" cy="729.5" r="2.9" fill="none" stroke="#000" stroke-width="1.1"/><circle cx="382.1" cy="729.5" r="2.9" fill="none" stroke="#000" stroke-width="1.1"/><circle cx="387.5" cy="729.5" r="2.9" fill="none" stroke="#000" stroke-width="1.1"/><circle cx="392.9" cy="729.5" r="2.9" fill="none" stroke="#000" stroke-width="1.1"/><circle cx="398.3" cy="729.5" r="2.9" fill="none" stroke="#000" stroke-width="1.1"/><circle cx="403.7" cy="729.5" r="2.9" fill="none" stroke="#000" stroke-width="1.1"/><circle cx="409.0" cy="729.5" r="2.9" fill="none" stroke="#000" stroke-width="1.1"/><circle cx="414.4" cy="729.5" r="2.9" fill="none" stroke="#000" stroke-width="1.1"/><circle cx="419.8" cy="729.5" r="2.9" fill="none" stroke="#000" stroke-width="1.1"/><circle cx="425.2" cy="729.5" r="2.9" fill="none" stroke="#000" stroke-width="1.1"/><circle cx="430.6" cy="729.5" r="2.9" fill="none" stroke="#000" stroke-width="1.1"/><circle cx="435.9" cy="729.5" r="2.9" fill="none" stroke="#000" stroke-width="1.1"/><circle cx="441.3" cy="729.5" r="2.9" fill="none" stroke="#000" stroke-width="1.1"/><circle cx="446.7" cy="729.5" r="2.9" fill="none" stroke="#000" stroke-width="1.1"/><circle cx="452.1" cy="729.5" r="2.9" fill="none" stroke="#000" stroke-width="1.1"/><circle cx="457.5" cy="729.5" r="2.9" fill="none" stroke="#000" stroke-width="1.1"/><circle cx="462.9" cy="729.5" r="2.9" fill="none" stroke="#000" stroke-width="1.1"/><circle cx="468.2" cy="729.5" r="2.9" fill="none" stroke="#000" stroke-width="1.1"/><circle cx="473.6" cy="729.5" r="2.9" fill="none" stroke="#000" stroke-width="1.1"/><circle cx="479.0" cy="729.5" r="2.9" fill="none" stroke="#000" stroke-width="1.1"/><circle cx="484.4" cy="729.5" r="2.9" fill="none" stroke="#000" stroke-width="1.1"/><circle cx="489.8" cy="729.5" r="2.9" fill="none" stroke="#000" stroke-width="1.1"/><circle cx="495.2" cy="729.5" r="2.9" fill="none" stroke="#000" stroke-width="1.1"/><circle cx="500.5" cy="729.5" r="2.9" fill="none" stroke="#000" stroke-width="1.1"/><circle cx="505.9" cy="729.5" r="2.9" fill="none" stroke="#000" stroke-width="1.1"/><circle cx="511.3" cy="729.5" r="2.9" fill="none" stroke="#000" stroke-width="1.1"/><circle cx="516.7" cy="729.5" r="2.9" fill="none" stroke="#000" stroke-width="1.1"/><circle cx="522.1" cy="729.5" r="2.9" fill="none" stroke="#000" stroke-width="1.1"/><circle cx="527.4" cy="729.5" r="2.9" fill="none" stroke="#000" stroke-width="1.1"/><circle cx="532.8" cy="729.5" r="2.9" fill="none" stroke="#000" stroke-width="1.1"/><circle cx="538.2" cy="729.5" r="2.9" fill="none" stroke="#000" stroke-width="1.1"/><circle cx="543.6" cy="729.5" r="2.9" fill="none" stroke="#000" stroke-width="1.1"/><circle cx="549.0" cy="729.5" r="2.9" fill="none" stroke="#000" stroke-width="1.1"/><circle cx="554.4" cy="729.5" r="2.9" fill="none" stroke="#000" stroke-width="1.1"/><circle cx="559.7" cy="729.5" r="2.9" fill="none" stroke="#000" stroke-width="1.1"/><circle cx="565.1" cy="729.5" r="2.9" fill="none" stroke="#000" stroke-width="1.1"/><circle cx="570.5" cy="729.5" r="2.9" fill="none" stroke="#000" stroke-width="1.1"/></svg>
<div style="position:absolute;left:91.00px;top:589.7px;font-size:10.67px;color:#000;white-space:pre;line-height:normal;transform:scaleX(1.0220);transform-origin:0 0;">Puissance, toute les 5s</div>
<div style="position:absolute;left:152.73px;top:858px;font-size:10.67px;color:#000;white-space:pre;line-height:normal;">1</div>
<div style="position:absolute;left:217.43px;top:858px;font-size:10.67px;color:#000;white-space:pre;line-height:normal;">2</div>
<div style="position:absolute;left:282.13px;top:858px;font-size:10.67px;color:#000;white-space:pre;line-height:normal;">3</div>
<div style="position:absolute;left:346.83px;top:858px;font-size:10.67px;color:#000;white-space:pre;line-height:normal;">4</div>
<div style="position:absolute;left:411.53px;top:858px;font-size:10.67px;color:#000;white-space:pre;line-height:normal;">5</div>
<div style="position:absolute;left:476.23px;top:858px;font-size:10.67px;color:#000;white-space:pre;line-height:normal;">6</div>
<div style="position:absolute;left:540.93px;top:858px;font-size:10.67px;color:#000;white-space:pre;line-height:normal;">7</div>
<div style="position:absolute;left:300.50px;top:874.3px;font-size:10.67px;color:#000;white-space:pre;line-height:normal;transform:scaleX(1.0064);transform-origin:0 0;">Temps (Min)</div>
<div style="position:absolute;left:88.03px;top:858px;font-size:10.67px;color:#000;white-space:pre;line-height:normal;">0</div>
<div style="position:absolute;left:70.06px;top:608.5px;font-size:10.67px;color:#000;white-space:pre;line-height:normal;">1</div>
<div style="position:absolute;left:70.06px;top:723.5px;font-size:10.67px;color:#000;white-space:pre;line-height:normal;">0</div>
<div style="position:absolute;left:66.52px;top:838.5px;font-size:10.67px;color:#000;white-space:pre;line-height:normal;">-1</div>
<div style="position:absolute;left:584.45px;top:675px;font-size:10.67px;color:#000;white-space:pre;line-height:normal;">V</div>
<div style="position:absolute;left:585.03px;top:686px;font-size:10.67px;color:#000;white-space:pre;line-height:normal;">a</div>
<div style="position:absolute;left:586.81px;top:695.5px;font-size:10.67px;color:#000;white-space:pre;line-height:normal;">l</div>
<div style="position:absolute;left:585.03px;top:705px;font-size:10.67px;color:#000;white-space:pre;line-height:normal;">e</div>
<div style="position:absolute;left:585.03px;top:714.5px;font-size:10.67px;color:#000;white-space:pre;line-height:normal;">u</div>
<div style="position:absolute;left:586.22px;top:724px;font-size:10.67px;color:#000;white-space:pre;line-height:normal;">r</div>
<div style="position:absolute;left:584.26px;top:760px;font-size:10.67px;color:#000;white-space:pre;line-height:normal;">%</div>
<div style="position:absolute;left:752px;top:313px;width:416px;height:412px;box-sizing:border-box;background:#fff;border:1px solid #57b0dc;"></div>
<div style="position:absolute;left:756.50px;top:318px;font-size:12px;color:#000;white-space:pre;line-height:normal;transform:scaleX(0.9629);transform-origin:0 0;">Reglage de la mise en température</div>
<svg style="position:absolute;left:1145px;top:318px;" width="14" height="14"><path d="M1.5 1.5L12.5 12.5M12.5 1.5L1.5 12.5" stroke="#222" stroke-width="1.3"/></svg>
<div style="position:absolute;left:761px;top:346px;width:190px;height:17px;box-sizing:border-box;background:#fff;"></div>
<div style="position:absolute;left:761px;top:346px;width:190px;height:1px;box-sizing:border-box;background:#a0a0a0;"></div>
<div style="position:absolute;left:761px;top:346px;width:1px;height:17px;box-sizing:border-box;background:#a0a0a0;"></div>
<div style="position:absolute;left:762px;top:347px;width:189px;height:1px;box-sizing:border-box;background:#e8e8e8;"></div>
<div style="position:absolute;left:794.00px;top:348.2px;font-size:11px;color:#000;white-space:pre;line-height:normal;transform:scaleX(0.9454);transform-origin:0 0;">Température exterieure (°C)</div>
<div style="position:absolute;left:958px;top:342px;width:49px;height:21px;box-sizing:border-box;background:#fff;border:1px solid #7a7a7a;"></div>
<div style="position:absolute;left:962.00px;top:346px;font-size:11px;color:#000;white-space:pre;line-height:normal;transform:scaleX(0.8980);transform-origin:0 0;">10</div>
<div style="position:absolute;left:1013.50px;top:349px;font-size:11px;color:#000;white-space:pre;line-height:normal;transform:scaleX(0.9441);transform-origin:0 0;">(à titre indicatif)</div>
<div style="position:absolute;left:1100px;top:341px;width:63px;height:24px;box-sizing:border-box;background:#e6e6e6;border:1px solid #adadad;"></div>
<div style="position:absolute;left:1122.50px;top:347px;font-size:11px;color:#000;white-space:pre;line-height:normal;transform:scaleX(1.0150);transform-origin:0 0;">Maj</div>
<div style="position:absolute;left:761px;top:371px;width:190px;height:17px;box-sizing:border-box;background:#fff;"></div>
<div style="position:absolute;left:761px;top:371px;width:190px;height:1px;box-sizing:border-box;background:#a0a0a0;"></div>
<div style="position:absolute;left:761px;top:371px;width:1px;height:17px;box-sizing:border-box;background:#a0a0a0;"></div>
<div style="position:absolute;left:762px;top:372px;width:189px;height:1px;box-sizing:border-box;background:#e8e8e8;"></div>
<div style="position:absolute;left:785.50px;top:373.2px;font-size:11px;color:#000;white-space:pre;line-height:normal;transform:scaleX(0.9507);transform-origin:0 0;">Température camera finale (°C)</div>
<div style="position:absolute;left:958px;top:368px;width:49px;height:21px;box-sizing:border-box;background:#fff;border:1px solid #7a7a7a;"></div>
<div style="position:absolute;left:962.00px;top:371.5px;font-size:11px;color:#000;white-space:pre;line-height:normal;transform:scaleX(0.9430);transform-origin:0 0;">-25</div>
<div style="position:absolute;left:1014.00px;top:371.5px;font-size:11px;color:#000;white-space:pre;line-height:normal;transform:scaleX(0.9671);transform-origin:0 0;">Température plancher</div>
<div style="position:absolute;left:761px;top:396px;width:190px;height:17px;box-sizing:border-box;background:#fff;"></div>
<div style="position:absolute;left:761px;top:396px;width:190px;height:1px;box-sizing:border-box;background:#a0a0a0;"></div>
<div style="position:absolute;left:761px;top:396px;width:1px;height:17px;box-sizing:border-box;background:#a0a0a0;"></div>
<div style="position:absolute;left:762px;top:397px;width:189px;height:1px;box-sizing:border-box;background:#e8e8e8;"></div>
<div style="position:absolute;left:783.50px;top:398px;font-size:11px;color:#000;white-space:pre;line-height:normal;transform:scaleX(0.9520);transform-origin:0 0;">Durée totale du processus (min)</div>
<div style="position:absolute;left:958px;top:396px;width:49px;height:17px;box-sizing:border-box;background:#fff;"></div>
<div style="position:absolute;left:958px;top:396px;width:49px;height:1px;box-sizing:border-box;background:#a0a0a0;"></div>
<div style="position:absolute;left:958px;top:396px;width:1px;height:17px;box-sizing:border-box;background:#a0a0a0;"></div>
<div style="position:absolute;left:959px;top:397px;width:48px;height:1px;box-sizing:border-box;background:#e8e8e8;"></div>
<div style="position:absolute;left:972.50px;top:398px;font-size:11px;color:#000;white-space:pre;line-height:normal;transform:scaleX(0.9803);transform-origin:0 0;">35.0</div>
<div style="position:absolute;left:846.75px;top:426px;font-size:11px;color:#000;white-space:pre;line-height:normal;transform:scaleX(0.9797);transform-origin:0 0;">Table de descente/montée de température</div>
<div style="position:absolute;left:761px;top:445px;width:398px;height:121px;box-sizing:border-box;background:#fff;border:1px solid #a8a8a8;"></div>
<div style="position:absolute;left:769.30px;top:450px;font-size:11px;color:#000;white-space:pre;line-height:normal;transform:scaleX(0.9739);transform-origin:0 0;">Etape</div>
<div style="position:absolute;left:800px;top:447px;width:1px;height:17px;box-sizing:border-box;background:#c8c8c8;"></div>
<div style="position:absolute;left:807.30px;top:450px;font-size:11px;color:#000;white-space:pre;line-height:normal;transform:scaleX(0.9686);transform-origin:0 0;">Delta Tp °C</div>
<div style="position:absolute;left:871px;top:447px;width:1px;height:17px;box-sizing:border-box;background:#c8c8c8;"></div>
<div style="position:absolute;left:878.30px;top:450px;font-size:11px;color:#000;white-space:pre;line-height:normal;transform:scaleX(0.9642);transform-origin:0 0;">Durée (Min)</div>
<div style="position:absolute;left:942px;top:447px;width:1px;height:17px;box-sizing:border-box;background:#c8c8c8;"></div>
<div style="position:absolute;left:949.80px;top:450px;font-size:11px;color:#000;white-space:pre;line-height:normal;transform:scaleX(0.9550);transform-origin:0 0;">Tp finale °C</div>
<div style="position:absolute;left:1013px;top:447px;width:1px;height:17px;box-sizing:border-box;background:#c8c8c8;"></div>
<div style="position:absolute;left:1020.30px;top:450px;font-size:11px;color:#000;white-space:pre;line-height:normal;transform:scaleX(0.9487);transform-origin:0 0;">Durée tot. (min)</div>
<div style="position:absolute;left:1094px;top:447px;width:1px;height:17px;box-sizing:border-box;background:#c8c8c8;"></div>
<div style="position:absolute;left:762px;top:464px;width:333px;height:1px;box-sizing:border-box;background:#d8d8d8;"></div>
<div style="position:absolute;left:762px;top:465px;width:396px;height:100px;overflow:hidden">
<div style="position:absolute;left:0;top:17px;width:39px;height:1px;background:#d0d0d0"></div>
<div style="position:absolute;left:39px;top:1px;width:69px;height:16px;background:#3a5fd6"></div>
<div style="position:absolute;left:110px;top:1px;width:69px;height:16px;background:#3a5fd6"></div>
<div style="position:absolute;left:181px;top:1px;width:69px;height:16px;background:#3a5fd6"></div>
<div style="position:absolute;left:252px;top:1px;width:81px;height:16px;background:#3a5fd6"></div>
<div style="position:absolute;left:108px;top:4px;width:1px;height:12px;background:#fff"></div>
<div style="position:absolute;left:250px;top:4px;width:1px;height:12px;background:#fff"></div>
<div style="position:absolute;left:0;top:35px;width:39px;height:1px;background:#d0d0d0"></div>
<div style="position:absolute;left:39px;top:18px;width:69px;height:17px;background:#e8e8fa"></div>
<div style="position:absolute;left:110px;top:18px;width:69px;height:17px;background:#e8e8fa"></div>
<div style="position:absolute;left:181px;top:18px;width:69px;height:17px;background:#e8e8fa"></div>
<div style="position:absolute;left:252px;top:18px;width:81px;height:17px;background:#e8e8fa"></div>
<div style="position:absolute;left:0;top:53px;width:39px;height:1px;background:#d0d0d0"></div>
<div style="position:absolute;left:0;top:71px;width:39px;height:1px;background:#d0d0d0"></div>
<div style="position:absolute;left:39px;top:54px;width:69px;height:17px;background:#e8e8fa"></div>
<div style="position:absolute;left:110px;top:54px;width:69px;height:17px;background:#e8e8fa"></div>
<div style="position:absolute;left:181px;top:54px;width:69px;height:17px;background:#e8e8fa"></div>
<div style="position:absolute;left:252px;top:54px;width:81px;height:17px;background:#e8e8fa"></div>
<div style="position:absolute;left:0;top:89px;width:39px;height:1px;background:#d0d0d0"></div>
<div style="position:absolute;left:0;top:107px;width:39px;height:1px;background:#d0d0d0"></div>
<div style="position:absolute;left:39px;top:90px;width:69px;height:17px;background:#e8e8fa"></div>
<div style="position:absolute;left:110px;top:90px;width:69px;height:17px;background:#e8e8fa"></div>
<div style="position:absolute;left:181px;top:90px;width:69px;height:17px;background:#e8e8fa"></div>
<div style="position:absolute;left:252px;top:90px;width:81px;height:17px;background:#e8e8fa"></div>
<div style="position:absolute;left:39px;top:0;width:1px;height:100px;background:#d0d0d0"></div>
</div>
<div style="position:absolute;left:0;top:0;width:1920px;height:565px;overflow:hidden">
<div style="position:absolute;left:769.50px;top:467.5px;font-size:11px;color:#000;white-space:pre;line-height:normal;transform:scaleX(0.9000);transform-origin:0 0;">1</div>
<div style="position:absolute;left:807.80px;top:466.5px;font-size:11px;color:#fff;white-space:pre;line-height:normal;transform:scaleX(0.9300);transform-origin:0 0;">-5.0</div>
<div style="position:absolute;left:878.80px;top:466.5px;font-size:11px;color:#fff;white-space:pre;line-height:normal;transform:scaleX(0.9300);transform-origin:0 0;">5.0</div>
<div style="position:absolute;left:950.30px;top:466.5px;font-size:11px;color:#fff;white-space:pre;line-height:normal;transform:scaleX(0.9300);transform-origin:0 0;">5.0</div>
<div style="position:absolute;left:1020.80px;top:466.5px;font-size:11px;color:#fff;white-space:pre;line-height:normal;transform:scaleX(0.9300);transform-origin:0 0;">5.0</div>
<div style="position:absolute;left:769.50px;top:485.5px;font-size:11px;color:#000;white-space:pre;line-height:normal;transform:scaleX(0.9000);transform-origin:0 0;">2</div>
<div style="position:absolute;left:807.80px;top:484.5px;font-size:11px;color:#000;white-space:pre;line-height:normal;transform:scaleX(0.9300);transform-origin:0 0;">-5.0</div>
<div style="position:absolute;left:878.80px;top:484.5px;font-size:11px;color:#000;white-space:pre;line-height:normal;transform:scaleX(0.9300);transform-origin:0 0;">5.0</div>
<div style="position:absolute;left:950.30px;top:484.5px;font-size:11px;color:#000;white-space:pre;line-height:normal;transform:scaleX(0.9300);transform-origin:0 0;">0.0</div>
<div style="position:absolute;left:1020.80px;top:484.5px;font-size:11px;color:#000;white-space:pre;line-height:normal;transform:scaleX(0.9300);transform-origin:0 0;">10.0</div>
<div style="position:absolute;left:769.50px;top:503.5px;font-size:11px;color:#000;white-space:pre;line-height:normal;transform:scaleX(0.9000);transform-origin:0 0;">3</div>
<div style="position:absolute;left:807.80px;top:502.5px;font-size:11px;color:#000;white-space:pre;line-height:normal;transform:scaleX(0.9300);transform-origin:0 0;">-5.0</div>
<div style="position:absolute;left:878.80px;top:502.5px;font-size:11px;color:#000;white-space:pre;line-height:normal;transform:scaleX(0.9300);transform-origin:0 0;">5.0</div>
<div style="position:absolute;left:950.30px;top:502.5px;font-size:11px;color:#000;white-space:pre;line-height:normal;transform:scaleX(0.9300);transform-origin:0 0;">-5.0</div>
<div style="position:absolute;left:1020.80px;top:502.5px;font-size:11px;color:#000;white-space:pre;line-height:normal;transform:scaleX(0.9300);transform-origin:0 0;">15.0</div>
<div style="position:absolute;left:769.50px;top:521.5px;font-size:11px;color:#000;white-space:pre;line-height:normal;transform:scaleX(0.9000);transform-origin:0 0;">4</div>
<div style="position:absolute;left:807.80px;top:520.5px;font-size:11px;color:#000;white-space:pre;line-height:normal;transform:scaleX(0.9300);transform-origin:0 0;">-5.0</div>
<div style="position:absolute;left:878.80px;top:520.5px;font-size:11px;color:#000;white-space:pre;line-height:normal;transform:scaleX(0.9300);transform-origin:0 0;">5.0</div>
<div style="position:absolute;left:950.30px;top:520.5px;font-size:11px;color:#000;white-space:pre;line-height:normal;transform:scaleX(0.9300);transform-origin:0 0;">-10.0</div>
<div style="position:absolute;left:1020.80px;top:520.5px;font-size:11px;color:#000;white-space:pre;line-height:normal;transform:scaleX(0.9300);transform-origin:0 0;">20.0</div>
<div style="position:absolute;left:769.50px;top:539.5px;font-size:11px;color:#000;white-space:pre;line-height:normal;transform:scaleX(0.9000);transform-origin:0 0;">5</div>
<div style="position:absolute;left:807.80px;top:538.5px;font-size:11px;color:#000;white-space:pre;line-height:normal;transform:scaleX(0.9300);transform-origin:0 0;">-5.0</div>
<div style="position:absolute;left:878.80px;top:538.5px;font-size:11px;color:#000;white-space:pre;line-height:normal;transform:scaleX(0.9300);transform-origin:0 0;">5.0</div>
<div style="position:absolute;left:950.30px;top:538.5px;font-size:11px;color:#000;white-space:pre;line-height:normal;transform:scaleX(0.9300);transform-origin:0 0;">-15.0</div>
<div style="position:absolute;left:1020.80px;top:538.5px;font-size:11px;color:#000;white-space:pre;line-height:normal;transform:scaleX(0.9300);transform-origin:0 0;">25.0</div>
<div style="position:absolute;left:769.50px;top:557.5px;font-size:11px;color:#000;white-space:pre;line-height:normal;transform:scaleX(0.9000);transform-origin:0 0;">6</div>
<div style="position:absolute;left:807.80px;top:556.5px;font-size:11px;color:#000;white-space:pre;line-height:normal;transform:scaleX(0.9300);transform-origin:0 0;">-5.0</div>
<div style="position:absolute;left:878.80px;top:556.5px;font-size:11px;color:#000;white-space:pre;line-height:normal;transform:scaleX(0.9300);transform-origin:0 0;">5.0</div>
<div style="position:absolute;left:950.30px;top:556.5px;font-size:11px;color:#000;white-space:pre;line-height:normal;transform:scaleX(0.9300);transform-origin:0 0;">-20.0</div>
<div style="position:absolute;left:1020.80px;top:556.5px;font-size:11px;color:#000;white-space:pre;line-height:normal;transform:scaleX(0.9300);transform-origin:0 0;">30.0</div>
</div>
<svg style="position:absolute;left:1141px;top:446px;" width="17" height="119"><path d="M5 12L8.5 8.5L12 12" fill="none" stroke="#555" stroke-width="1.6"/><rect x="0" y="18" width="15" height="17" fill="#cdcdcd"/><path d="M5 108L8.5 111.5L12 108" fill="none" stroke="#555" stroke-width="1.6"/></svg>
<div style="position:absolute;left:761px;top:579px;width:398px;height:106px;box-sizing:border-box;border:1px solid #dcdcdc;"></div>
<div style="position:absolute;left:766px;top:575px;width:84px;height:10px;box-sizing:border-box;background:#fff;"></div>
<div style="position:absolute;left:769.50px;top:573px;font-size:11px;color:#000;white-space:pre;line-height:normal;transform:scaleX(0.9334);transform-origin:0 0;">Editer l'étape n°1</div>
<div style="position:absolute;left:829px;top:600px;width:200px;height:17px;box-sizing:border-box;background:#fff;"></div>
<div style="position:absolute;left:829px;top:600px;width:200px;height:1px;box-sizing:border-box;background:#a0a0a0;"></div>
<div style="position:absolute;left:829px;top:600px;width:1px;height:17px;box-sizing:border-box;background:#a0a0a0;"></div>
<div style="position:absolute;left:830px;top:601px;width:199px;height:1px;box-sizing:border-box;background:#e8e8e8;"></div>
<div style="position:absolute;left:859.25px;top:601.8px;font-size:11px;color:#000;white-space:pre;line-height:normal;transform:scaleX(0.9546);transform-origin:0 0;">Différence de temperature (°C)</div>
<div style="position:absolute;left:1036px;top:597px;width:56px;height:21px;box-sizing:border-box;background:#fff;border:1px solid #7a7a7a;"></div>
<div style="position:absolute;left:1039.50px;top:600.5px;font-size:11px;color:#000;white-space:pre;line-height:normal;transform:scaleX(0.9201);transform-origin:0 0;">-5</div>
<div style="position:absolute;left:829px;top:625px;width:200px;height:17px;box-sizing:border-box;background:#fff;"></div>
<div style="position:absolute;left:829px;top:625px;width:200px;height:1px;box-sizing:border-box;background:#a0a0a0;"></div>
<div style="position:absolute;left:829px;top:625px;width:1px;height:17px;box-sizing:border-box;background:#a0a0a0;"></div>
<div style="position:absolute;left:830px;top:626px;width:199px;height:1px;box-sizing:border-box;background:#e8e8e8;"></div>
<div style="position:absolute;left:865.50px;top:627px;font-size:11px;color:#000;white-space:pre;line-height:normal;transform:scaleX(0.9617);transform-origin:0 0;">Durée de l'étape en minutes</div>
<div style="position:absolute;left:1036px;top:622px;width:56px;height:21px;box-sizing:border-box;background:#fff;border:1px solid #7a7a7a;"></div>
<div style="position:absolute;left:1039.50px;top:625.5px;font-size:11px;color:#000;white-space:pre;line-height:normal;transform:scaleX(0.9806);transform-origin:0 0;">2.5</div>
<div style="position:absolute;left:828px;top:650px;width:77px;height:25px;box-sizing:border-box;background:#e6e6e6;border:1px solid #adadad;"></div>
<div style="position:absolute;left:849.50px;top:656.5px;font-size:11px;color:#000;white-space:pre;line-height:normal;transform:scaleX(0.9811);transform-origin:0 0;">Effacer</div>
<div style="position:absolute;left:911px;top:650px;width:77px;height:25px;box-sizing:border-box;background:#e6e6e6;border:1px solid #adadad;"></div>
<div style="position:absolute;left:932.50px;top:656.5px;font-size:11px;color:#000;white-space:pre;line-height:normal;transform:scaleX(0.9753);transform-origin:0 0;">Ajouter</div>
<div style="position:absolute;left:993px;top:650px;width:77px;height:25px;box-sizing:border-box;background:#e6e6e6;border:1px solid #adadad;"></div>
<div style="position:absolute;left:1002.00px;top:656.5px;font-size:11px;color:#000;white-space:pre;line-height:normal;transform:scaleX(0.9555);transform-origin:0 0;">Mettre à jour</div>
<div style="position:absolute;left:917px;top:692px;width:78px;height:25px;box-sizing:border-box;background:#e6e6e6;border:1px solid #adadad;"></div>
<div style="position:absolute;left:937.25px;top:698.5px;font-size:11px;color:#000;white-space:pre;line-height:normal;transform:scaleX(0.9585);transform-origin:0 0;">Terminé</div>
<div style="position:absolute;left:1376px;top:28px;width:250px;height:462px;box-sizing:border-box;background:#fff;"></div>
<div style="position:absolute;left:1379.50px;top:33.7px;font-size:12px;color:#a2a2a2;white-space:pre;line-height:normal;transform:scaleX(0.9312);transform-origin:0 0;">QSI 583ws   -&gt;  13.9°C   [0% , 20.0°C]</div>
<div style="position:absolute;left:1606px;top:31px;width:19px;height:19px;box-sizing:border-box;background:#ececec;"></div>
<div style="position:absolute;left:1376px;top:74px;width:248px;height:383px;box-sizing:border-box;background:#fff;border:1px solid #dadada;"></div>
<div style="position:absolute;left:1376px;top:54px;width:68px;height:21px;box-sizing:border-box;background:#fff;border:1px solid #dadada;border-bottom:none;"></div>
<div style="position:absolute;left:1384.50px;top:57.2px;font-size:11px;color:#000;white-space:pre;line-height:normal;transform:scaleX(0.9663);transform-origin:0 0;">QSI 583ws</div>
<div style="position:absolute;left:1381px;top:80px;width:119px;height:37px;box-sizing:border-box;background:#efefef;border:1px solid #a8a8a8;"></div>
<div style="position:absolute;left:1410.00px;top:91.6px;font-size:12px;color:#000;white-space:pre;line-height:normal;transform:scaleX(0.8883);transform-origin:0 0;">DEMARRER</div>
<div style="position:absolute;left:1503px;top:80px;width:119px;height:37px;box-sizing:border-box;background:#cccccc;border:1px solid #c4c4c4;"></div>
<div style="position:absolute;left:1528.00px;top:91.6px;font-size:12px;color:#858585;white-space:pre;line-height:normal;transform:scaleX(0.8148);transform-origin:0 0;">ABANDONNER</div>
<div style="position:absolute;left:1384.80px;top:123px;font-size:11px;color:#000;white-space:pre;line-height:normal;transform:scaleX(0.9586);transform-origin:0 0;">Temps:</div>
<div style="position:absolute;left:1387px;top:148px;width:227px;height:1px;box-sizing:border-box;background:#a0a0a0;"></div>
<div style="position:absolute;left:1384.50px;top:156.7px;font-size:11px;color:#000;white-space:pre;line-height:normal;transform:scaleX(0.9469);transform-origin:0 0;">Exp.(sec)</div>
<div style="position:absolute;left:1432px;top:153px;width:65px;height:21px;box-sizing:border-box;background:#fff;border:1px solid #7a7a7a;"></div>
<div style="position:absolute;left:1436.50px;top:157px;font-size:11px;color:#000;white-space:pre;line-height:normal;">1</div>
<svg style="position:absolute;left:1483px;top:159px;" width="10" height="8"><path d="M1 1.5L5 5.5L9 1.5" fill="none" stroke="#555" stroke-width="1.1"/></svg>
<div style="position:absolute;left:1500.80px;top:153.6px;font-size:11px;color:#000;white-space:pre;line-height:normal;transform:scaleX(0.9722);transform-origin:0 0;">Bouclage</div>
<div style="position:absolute;left:1582px;top:153px;width:13px;height:13px;box-sizing:border-box;background:#fff;border:1px solid #333;"></div>
<div style="position:absolute;left:1601px;top:152px;width:18px;height:18px;box-sizing:border-box;background:#cccccc;"></div>
<svg style="position:absolute;left:1601px;top:152px;" width="18" height="18"><path d="M5 5L13 13M13 5L5 13" stroke="#a0a0a0" stroke-width="1.2"/></svg>
<div style="position:absolute;left:1500.80px;top:172.5px;font-size:11px;color:#000;white-space:pre;line-height:normal;transform:scaleX(0.9586);transform-origin:0 0;">Bouclage infini</div>
<div style="position:absolute;left:1582px;top:172px;width:13px;height:13px;box-sizing:border-box;background:#fff;border:1px solid #333;"></div>
<div style="position:absolute;left:1384.50px;top:193.6px;font-size:11px;color:#000;white-space:pre;line-height:normal;transform:scaleX(0.9674);transform-origin:0 0;">Nbre de boucles</div>
<div style="position:absolute;left:1464px;top:190px;width:55px;height:21px;box-sizing:border-box;background:#fff;border:1px solid #7a7a7a;"></div>
<div style="position:absolute;left:1468.00px;top:193px;font-size:11px;color:#000;white-space:pre;line-height:normal;transform:scaleX(0.9500);transform-origin:0 0;">10</div>
<svg style="position:absolute;left:1502px;top:192px;" width="14" height="17"><rect x="0.5" y="0.5" width="13" height="7.5" fill="#f0f0f0" stroke="#c8c8c8"/><rect x="0.5" y="9" width="13" height="7.5" fill="#f0f0f0" stroke="#c8c8c8"/><path d="M3.5 6.5L7 2.5L10.5 6.5Z" fill="#111"/><path d="M3.5 10.5L7 14.5L10.5 10.5Z" fill="#111"/></svg>
<div style="position:absolute;left:1523.60px;top:193.6px;font-size:11px;color:#000;white-space:pre;line-height:normal;transform:scaleX(0.9279);transform-origin:0 0;">Délai (s)</div>
<div style="position:absolute;left:1570px;top:190px;width:40px;height:21px;box-sizing:border-box;background:#fff;border:1px solid #7a7a7a;"></div>
<div style="position:absolute;left:1574.00px;top:193px;font-size:11px;color:#000;white-space:pre;line-height:normal;transform:scaleX(0.9500);transform-origin:0 0;">1</div>
<svg style="position:absolute;left:1593px;top:192px;" width="14" height="17"><rect x="0.5" y="0.5" width="13" height="7.5" fill="#f0f0f0" stroke="#c8c8c8"/><rect x="0.5" y="9" width="13" height="7.5" fill="#f0f0f0" stroke="#c8c8c8"/><path d="M3.5 6.5L7 2.5L10.5 6.5Z" fill="#111"/><path d="M3.5 10.5L7 14.5L10.5 10.5Z" fill="#111"/></svg>
<div style="position:absolute;left:1387px;top:217px;width:227px;height:1px;box-sizing:border-box;background:#a0a0a0;"></div>
<div style="position:absolute;left:1384.50px;top:226px;font-size:11px;color:#000;white-space:pre;line-height:normal;transform:scaleX(0.8936);transform-origin:0 0;">BinX:</div>
<div style="position:absolute;left:1414px;top:223px;width:40px;height:21px;box-sizing:border-box;background:#fff;border:1px solid #7a7a7a;"></div>
<div style="position:absolute;left:1418.00px;top:226px;font-size:11px;color:#000;white-space:pre;line-height:normal;transform:scaleX(0.9500);transform-origin:0 0;">1</div>
<svg style="position:absolute;left:1437px;top:225px;" width="14" height="17"><rect x="0.5" y="0.5" width="13" height="7.5" fill="#f0f0f0" stroke="#c8c8c8"/><rect x="0.5" y="9" width="13" height="7.5" fill="#f0f0f0" stroke="#c8c8c8"/><path d="M3.5 6.5L7 2.5L10.5 6.5Z" fill="#111"/><path d="M3.5 10.5L7 14.5L10.5 10.5Z" fill="#111"/></svg>
<div style="position:absolute;left:1464.50px;top:226px;font-size:11px;color:#000;white-space:pre;line-height:normal;transform:scaleX(0.9148);transform-origin:0 0;">BinY:</div>
<div style="position:absolute;left:1499px;top:223px;width:40px;height:21px;box-sizing:border-box;background:#fff;border:1px solid #7a7a7a;"></div>
<div style="position:absolute;left:1503.00px;top:226px;font-size:11px;color:#000;white-space:pre;line-height:normal;transform:scaleX(0.9500);transform-origin:0 0;">1</div>
<svg style="position:absolute;left:1522px;top:225px;" width="14" height="17"><rect x="0.5" y="0.5" width="13" height="7.5" fill="#f0f0f0" stroke="#c8c8c8"/><rect x="0.5" y="9" width="13" height="7.5" fill="#f0f0f0" stroke="#c8c8c8"/><path d="M3.5 6.5L7 2.5L10.5 6.5Z" fill="#111"/><path d="M3.5 10.5L7 14.5L10.5 10.5Z" fill="#111"/></svg>
<div style="position:absolute;left:1555px;top:227px;width:13px;height:13px;box-sizing:border-box;background:#fff;border:1px solid #333;"></div>
<svg style="position:absolute;left:1555px;top:227px;" width="13" height="13"><path d="M3 6.5L5.5 9.5L10 3.5" fill="none" stroke="#222" stroke-width="1.3"/></svg>
<div style="position:absolute;left:1571.50px;top:227.5px;font-size:11px;color:#000;white-space:pre;line-height:normal;transform:scaleX(0.8995);transform-origin:0 0;">Lier</div>
<div style="position:absolute;left:1386px;top:251px;width:73px;height:23px;box-sizing:border-box;background:#e6e6e6;border:1px solid #adadad;"></div>
<div style="position:absolute;left:1394.00px;top:256.5px;font-size:11px;color:#000;white-space:pre;line-height:normal;transform:scaleX(0.9707);transform-origin:0 0;">Exp Longue</div>
<div style="position:absolute;left:1466px;top:251px;width:73px;height:23px;box-sizing:border-box;background:#e6e6e6;border:1px solid #adadad;"></div>
<div style="position:absolute;left:1475.50px;top:256.5px;font-size:11px;color:#000;white-space:pre;line-height:normal;transform:scaleX(0.9705);transform-origin:0 0;">Exp. courte</div>
<div style="position:absolute;left:1546px;top:251px;width:73px;height:23px;box-sizing:border-box;background:#e6e6e6;border:1px solid #adadad;"></div>
<div style="position:absolute;left:1558.00px;top:256.5px;font-size:11px;color:#000;white-space:pre;line-height:normal;transform:scaleX(0.9890);transform-origin:0 0;">Sequence</div>
<div style="position:absolute;left:1396px;top:277px;width:209px;height:15px;box-sizing:border-box;background:#ffff00;"></div>
<div style="position:absolute;left:1461.70px;top:278px;font-size:11px;color:#000;white-space:pre;line-height:normal;transform:scaleX(0.9009);transform-origin:0 0;">Caméra n°1</div>
<div style="position:absolute;left:1381px;top:314px;width:239px;height:139px;box-sizing:border-box;background:#fff;border:1px solid #dadada;"></div>
<div style="position:absolute;left:1382px;top:296px;width:60px;height:19px;box-sizing:border-box;background:#fff;border:1px solid #dadada;"></div>
<div style="position:absolute;left:1441px;top:296px;width:48px;height:19px;box-sizing:border-box;background:#fff;border:1px solid #dadada;"></div>
<div style="position:absolute;left:1558px;top:296px;width:34px;height:19px;box-sizing:border-box;background:#fff;border:1px solid #dadada;"></div>
<div style="position:absolute;left:1488px;top:294px;width:71px;height:21px;box-sizing:border-box;background:#fff;border:1px solid #dadada;border-bottom:none;"></div>
<div style="position:absolute;left:1388.60px;top:299.4px;font-size:11px;color:#000;white-space:pre;line-height:normal;transform:scaleX(0.9450);transform-origin:0 0;">Fenêtrage</div>
<div style="position:absolute;left:1448.50px;top:299.4px;font-size:11px;color:#000;white-space:pre;line-height:normal;transform:scaleX(0.9125);transform-origin:0 0;">Caméra</div>
<div style="position:absolute;left:1497.00px;top:297.7px;font-size:11px;color:#000;white-space:pre;line-height:normal;transform:scaleX(0.9377);transform-origin:0 0;">Temp. CCD</div>
<div style="position:absolute;left:1563.60px;top:299.4px;font-size:11px;color:#000;white-space:pre;line-height:normal;transform:scaleX(0.9507);transform-origin:0 0;">Roue</div>
<div style="position:absolute;left:1589px;top:296px;width:16px;height:16px;box-sizing:border-box;background:#f0f0f0;border:1px solid #c0c0c0;"></div>
<div style="position:absolute;left:1605px;top:296px;width:16px;height:16px;box-sizing:border-box;background:#f0f0f0;border:1px solid #c0c0c0;"></div>
<svg style="position:absolute;left:1589px;top:296px;" width="32" height="16"><path d="M9.5 4.5L6 8L9.5 11.5Z" fill="#000"/><path d="M22.5 4.5L26 8L22.5 11.5Z" fill="#000"/></svg>
<div style="position:absolute;left:1388.70px;top:322.6px;font-size:11px;color:#000;white-space:pre;line-height:normal;transform:scaleX(0.9508);transform-origin:0 0;">Temperature CCD: 13.90°C (Ext=18.39°C)</div>
<div style="position:absolute;left:1590px;top:319px;width:18px;height:18px;box-sizing:border-box;background:#e6e6e6;border:1px solid #adadad;"></div>
<div style="position:absolute;left:1595.50px;top:322.5px;font-size:11px;color:#000;white-space:pre;line-height:normal;transform:scaleX(0.8175);transform-origin:0 0;">G</div>
<div style="position:absolute;left:1388.70px;top:343.7px;font-size:11px;color:#000;white-space:pre;line-height:normal;transform:scaleX(0.9431);transform-origin:0 0;">Temp. CCD requise (°C</div>
<div style="position:absolute;left:1505px;top:340px;width:50px;height:21px;box-sizing:border-box;background:#fff;border:1px solid #7a7a7a;"></div>
<div style="position:absolute;left:1508.50px;top:343.7px;font-size:11px;color:#000;white-space:pre;line-height:normal;transform:scaleX(0.9698);transform-origin:0 0;">9.465</div>
<svg style="position:absolute;left:1540px;top:346px;" width="10" height="8"><path d="M1 1.5L5 5.5L9 1.5" fill="none" stroke="#555" stroke-width="1.1"/></svg>
<div style="position:absolute;left:1496px;top:333px;width:67px;height:34px;box-sizing:border-box;border:6px solid #ea1019;border-radius:11px;"></div>
<div style="position:absolute;left:1565px;top:341px;width:43px;height:18px;box-sizing:border-box;background:#e6e6e6;border:1px solid #adadad;"></div>
<div style="position:absolute;left:1574.75px;top:344.5px;font-size:11px;color:#000;white-space:pre;line-height:normal;transform:scaleX(0.9371);transform-origin:0 0;">Appl.</div>
<div style="position:absolute;left:1388.70px;top:368.6px;font-size:11px;color:#000;white-space:pre;line-height:normal;transform:scaleX(0.9340);transform-origin:0 0;">Puissance refroidissement (%) : 0</div>
<div style="position:absolute;left:1590px;top:365px;width:18px;height:18px;box-sizing:border-box;background:#e6e6e6;border:1px solid #adadad;"></div>
<div style="position:absolute;left:1595.50px;top:368.5px;font-size:11px;color:#000;white-space:pre;line-height:normal;transform:scaleX(0.8175);transform-origin:0 0;">G</div>
<div style="position:absolute;left:1388.70px;top:388.7px;font-size:11px;color:#000;white-space:pre;line-height:normal;transform:scaleX(0.9500);transform-origin:0 0;">Consigne de température : 20.0 °C</div>
<div style="position:absolute;left:1389px;top:431px;width:52px;height:18px;box-sizing:border-box;background:#e5f1fb;border:2px solid #2a6da8;"></div>
<div style="position:absolute;left:1401.50px;top:434.7px;font-size:11px;color:#000;white-space:pre;line-height:normal;transform:scaleX(0.9391);transform-origin:0 0;">Editer</div>
<div style="position:absolute;left:1447px;top:431px;width:52px;height:18px;box-sizing:border-box;background:#cccccc;border:1px solid #c4c4c4;"></div>
<div style="position:absolute;left:1462.50px;top:434.7px;font-size:11px;color:#858585;white-space:pre;line-height:normal;transform:scaleX(0.9275);transform-origin:0 0;">Stop</div>
<div style="position:absolute;left:1505px;top:431px;width:52px;height:18px;box-sizing:border-box;background:#e6e6e6;border:1px solid #adadad;"></div>
<div style="position:absolute;left:1511.50px;top:434.7px;font-size:11px;color:#000;white-space:pre;line-height:normal;transform:scaleX(0.9663);transform-origin:0 0;">Descen.</div>
<div style="position:absolute;left:1563px;top:431px;width:52px;height:18px;box-sizing:border-box;background:#e6e6e6;border:1px solid #adadad;"></div>
<div style="position:absolute;left:1572.75px;top:434.7px;font-size:11px;color:#000;white-space:pre;line-height:normal;transform:scaleX(0.9489);transform-origin:0 0;">Monter</div>
<div style="position:absolute;left:1377px;top:459px;width:248px;height:29px;box-sizing:border-box;background:#e8e8e8;border:1px solid #8c8c8c;"></div>
<svg style="position:absolute;left:1471.0px;top:466.0px;" width="15" height="15"><path d="M5.2 0.5H9.8V5.5H13L7.5 11L2 5.5H5.2Z" fill="#d8141c"/><rect x="0.5" y="12" width="14" height="2" fill="#d8141c"/></svg>
<div style="position:absolute;left:1490.50px;top:467.5px;font-size:11px;color:#000;white-space:pre;line-height:normal;transform:scaleX(0.9031);transform-origin:0 0;">Minimiser</div>
<div style="position:absolute;left:1624px;top:561px;width:240px;height:285px;box-sizing:border-box;background:#fff;"></div>
<div style="position:absolute;left:1626px;top:561px;width:236px;height:1px;box-sizing:border-box;background:#ececec;"></div>
<div style="position:absolute;left:1630.50px;top:566.5px;font-size:12px;color:#a2a2a2;white-space:pre;line-height:normal;transform:scaleX(0.9508);transform-origin:0 0;">Roue à Filtres interne CCD (n°1)</div>
<div style="position:absolute;left:1842px;top:564px;width:19px;height:19px;box-sizing:border-box;background:#ececec;"></div>
<div style="position:absolute;left:1627px;top:593px;width:235px;height:120px;box-sizing:border-box;border:1px solid #dcdcdc;"></div>
<div style="position:absolute;left:1633px;top:588px;width:100px;height:10px;box-sizing:border-box;background:#fff;"></div>
<div style="position:absolute;left:1635.70px;top:587.5px;font-size:11px;color:#000;white-space:pre;line-height:normal;transform:scaleX(0.9794);transform-origin:0 0;">QSI FILTRES - v1.5</div>
<div style="position:absolute;left:1653px;top:603px;width:120px;height:16px;box-sizing:border-box;background:#fff;"></div>
<div style="position:absolute;left:1653px;top:603px;width:120px;height:1px;box-sizing:border-box;background:#a0a0a0;"></div>
<div style="position:absolute;left:1653px;top:603px;width:1px;height:16px;box-sizing:border-box;background:#a0a0a0;"></div>
<div style="position:absolute;left:1654px;top:604px;width:119px;height:1px;box-sizing:border-box;background:#e8e8e8;"></div>
<div style="position:absolute;left:1690.00px;top:604.3px;font-size:11px;color:#000;white-space:pre;line-height:normal;transform:scaleX(0.9264);transform-origin:0 0;">Nom Filtre</div>
<div style="position:absolute;left:1776px;top:603px;width:57px;height:16px;box-sizing:border-box;background:#fff;"></div>
<div style="position:absolute;left:1776px;top:603px;width:57px;height:1px;box-sizing:border-box;background:#a0a0a0;"></div>
<div style="position:absolute;left:1776px;top:603px;width:1px;height:16px;box-sizing:border-box;background:#a0a0a0;"></div>
<div style="position:absolute;left:1777px;top:604px;width:56px;height:1px;box-sizing:border-box;background:#e8e8e8;"></div>
<div style="position:absolute;left:1781.50px;top:604.3px;font-size:11px;color:#000;white-space:pre;line-height:normal;transform:scaleX(0.9352);transform-origin:0 0;">Déc. (mm)</div>
<div style="position:absolute;left:1633px;top:622px;width:13px;height:13px;box-sizing:border-box;background:#fff;border:1px solid #333;"></div>
<div style="position:absolute;left:1653px;top:621px;width:120px;height:16px;box-sizing:border-box;background:#fff;"></div>
<div style="position:absolute;left:1653px;top:621px;width:120px;height:1px;box-sizing:border-box;background:#a0a0a0;"></div>
<div style="position:absolute;left:1653px;top:621px;width:1px;height:16px;box-sizing:border-box;background:#a0a0a0;"></div>
<div style="position:absolute;left:1654px;top:622px;width:119px;height:1px;box-sizing:border-box;background:#e8e8e8;"></div>
<div style="position:absolute;left:1710.50px;top:622.3px;font-size:11px;color:#000;white-space:pre;line-height:normal;transform:scaleX(0.9796);transform-origin:0 0;">L</div>
<div style="position:absolute;left:1776px;top:621px;width:57px;height:16px;box-sizing:border-box;background:#fff;"></div>
<div style="position:absolute;left:1776px;top:621px;width:57px;height:1px;box-sizing:border-box;background:#a0a0a0;"></div>
<div style="position:absolute;left:1776px;top:621px;width:1px;height:16px;box-sizing:border-box;background:#a0a0a0;"></div>
<div style="position:absolute;left:1777px;top:622px;width:56px;height:1px;box-sizing:border-box;background:#e8e8e8;"></div>
<div style="position:absolute;left:1791.50px;top:622.3px;font-size:11px;color:#000;white-space:pre;line-height:normal;transform:scaleX(0.9807);transform-origin:0 0;">0.000</div>
<div style="position:absolute;left:1633px;top:640px;width:13px;height:13px;box-sizing:border-box;background:#fff;border:1px solid #333;"></div>
<div style="position:absolute;left:1653px;top:639px;width:120px;height:16px;box-sizing:border-box;background:#fff;"></div>
<div style="position:absolute;left:1653px;top:639px;width:120px;height:1px;box-sizing:border-box;background:#a0a0a0;"></div>
<div style="position:absolute;left:1653px;top:639px;width:1px;height:16px;box-sizing:border-box;background:#a0a0a0;"></div>
<div style="position:absolute;left:1654px;top:640px;width:119px;height:1px;box-sizing:border-box;background:#e8e8e8;"></div>
<div style="position:absolute;left:1708.00px;top:640.3px;font-size:11px;color:#000;white-space:pre;line-height:normal;transform:scaleX(0.8991);transform-origin:0 0;">Sii</div>
<div style="position:absolute;left:1776px;top:639px;width:57px;height:16px;box-sizing:border-box;background:#fff;"></div>
<div style="position:absolute;left:1776px;top:639px;width:57px;height:1px;box-sizing:border-box;background:#a0a0a0;"></div>
<div style="position:absolute;left:1776px;top:639px;width:1px;height:16px;box-sizing:border-box;background:#a0a0a0;"></div>
<div style="position:absolute;left:1777px;top:640px;width:56px;height:1px;box-sizing:border-box;background:#e8e8e8;"></div>
<div style="position:absolute;left:1791.50px;top:640.3px;font-size:11px;color:#000;white-space:pre;line-height:normal;transform:scaleX(0.9807);transform-origin:0 0;">0.294</div>
<div style="position:absolute;left:1633px;top:658px;width:13px;height:13px;box-sizing:border-box;background:#fff;border:1px solid #333;"></div>
<div style="position:absolute;left:1653px;top:657px;width:120px;height:16px;box-sizing:border-box;background:#fff;"></div>
<div style="position:absolute;left:1653px;top:657px;width:120px;height:1px;box-sizing:border-box;background:#a0a0a0;"></div>
<div style="position:absolute;left:1653px;top:657px;width:1px;height:16px;box-sizing:border-box;background:#a0a0a0;"></div>
<div style="position:absolute;left:1654px;top:658px;width:119px;height:1px;box-sizing:border-box;background:#e8e8e8;"></div>
<div style="position:absolute;left:1706.50px;top:658.3px;font-size:11px;color:#000;white-space:pre;line-height:normal;transform:scaleX(0.9956);transform-origin:0 0;">Ha</div>
<div style="position:absolute;left:1776px;top:657px;width:57px;height:16px;box-sizing:border-box;background:#fff;"></div>
<div style="position:absolute;left:1776px;top:657px;width:57px;height:1px;box-sizing:border-box;background:#a0a0a0;"></div>
<div style="position:absolute;left:1776px;top:657px;width:1px;height:16px;box-sizing:border-box;background:#a0a0a0;"></div>
<div style="position:absolute;left:1777px;top:658px;width:56px;height:1px;box-sizing:border-box;background:#e8e8e8;"></div>
<div style="position:absolute;left:1791.50px;top:658.3px;font-size:11px;color:#000;white-space:pre;line-height:normal;transform:scaleX(0.9807);transform-origin:0 0;">0.168</div>
<div style="position:absolute;left:1633px;top:676px;width:13px;height:13px;box-sizing:border-box;background:#fff;border:1px solid #333;"></div>
<div style="position:absolute;left:1653px;top:675px;width:120px;height:16px;box-sizing:border-box;background:#fff;"></div>
<div style="position:absolute;left:1653px;top:675px;width:120px;height:1px;box-sizing:border-box;background:#a0a0a0;"></div>
<div style="position:absolute;left:1653px;top:675px;width:1px;height:16px;box-sizing:border-box;background:#a0a0a0;"></div>
<div style="position:absolute;left:1654px;top:676px;width:119px;height:1px;box-sizing:border-box;background:#e8e8e8;"></div>
<div style="position:absolute;left:1706.50px;top:676.3px;font-size:11px;color:#000;white-space:pre;line-height:normal;transform:scaleX(0.8810);transform-origin:0 0;">Oiii</div>
<div style="position:absolute;left:1776px;top:675px;width:57px;height:16px;box-sizing:border-box;background:#fff;"></div>
<div style="position:absolute;left:1776px;top:675px;width:57px;height:1px;box-sizing:border-box;background:#a0a0a0;"></div>
<div style="position:absolute;left:1776px;top:675px;width:1px;height:16px;box-sizing:border-box;background:#a0a0a0;"></div>
<div style="position:absolute;left:1777px;top:676px;width:56px;height:1px;box-sizing:border-box;background:#e8e8e8;"></div>
<div style="position:absolute;left:1791.50px;top:676.3px;font-size:11px;color:#000;white-space:pre;line-height:normal;transform:scaleX(0.9807);transform-origin:0 0;">0.049</div>
<div style="position:absolute;left:1633px;top:694px;width:13px;height:13px;box-sizing:border-box;background:#fff;border:1px solid #333;"></div>
<div style="position:absolute;left:1653px;top:693px;width:120px;height:16px;box-sizing:border-box;background:#fff;"></div>
<div style="position:absolute;left:1653px;top:693px;width:120px;height:1px;box-sizing:border-box;background:#a0a0a0;"></div>
<div style="position:absolute;left:1653px;top:693px;width:1px;height:16px;box-sizing:border-box;background:#a0a0a0;"></div>
<div style="position:absolute;left:1654px;top:694px;width:119px;height:1px;box-sizing:border-box;background:#e8e8e8;"></div>
<div style="position:absolute;left:1688.50px;top:694.3px;font-size:11px;color:#000;white-space:pre;line-height:normal;transform:scaleX(0.9618);transform-origin:0 0;">Johnson V</div>
<div style="position:absolute;left:1776px;top:693px;width:57px;height:16px;box-sizing:border-box;background:#fff;"></div>
<div style="position:absolute;left:1776px;top:693px;width:57px;height:1px;box-sizing:border-box;background:#a0a0a0;"></div>
<div style="position:absolute;left:1776px;top:693px;width:1px;height:16px;box-sizing:border-box;background:#a0a0a0;"></div>
<div style="position:absolute;left:1777px;top:694px;width:56px;height:1px;box-sizing:border-box;background:#e8e8e8;"></div>
<div style="position:absolute;left:1790.25px;top:694.3px;font-size:11px;color:#000;white-space:pre;line-height:normal;transform:scaleX(0.9454);transform-origin:0 0;">-0.084</div>
<div style="position:absolute;left:1633px;top:718px;width:117px;height:16px;box-sizing:border-box;background:#fff;"></div>
<div style="position:absolute;left:1633px;top:718px;width:117px;height:1px;box-sizing:border-box;background:#a0a0a0;"></div>
<div style="position:absolute;left:1633px;top:718px;width:1px;height:16px;box-sizing:border-box;background:#a0a0a0;"></div>
<div style="position:absolute;left:1634px;top:719px;width:116px;height:1px;box-sizing:border-box;background:#e8e8e8;"></div>
<div style="position:absolute;left:1637.50px;top:719.7px;font-size:11px;color:#000;white-space:pre;line-height:normal;transform:scaleX(0.9489);transform-origin:0 0;">Filtre de référence</div>
<div style="position:absolute;left:1753px;top:718px;width:66px;height:16px;box-sizing:border-box;background:#fff;"></div>
<div style="position:absolute;left:1753px;top:718px;width:66px;height:1px;box-sizing:border-box;background:#a0a0a0;"></div>
<div style="position:absolute;left:1753px;top:718px;width:1px;height:16px;box-sizing:border-box;background:#a0a0a0;"></div>
<div style="position:absolute;left:1754px;top:719px;width:65px;height:1px;box-sizing:border-box;background:#e8e8e8;"></div>
<div style="position:absolute;left:1782.94px;top:719.7px;font-size:11px;color:#000;white-space:pre;line-height:normal;">1</div>
<div style="position:absolute;left:1633px;top:738px;width:117px;height:16px;box-sizing:border-box;background:#fff;"></div>
<div style="position:absolute;left:1633px;top:738px;width:117px;height:1px;box-sizing:border-box;background:#a0a0a0;"></div>
<div style="position:absolute;left:1633px;top:738px;width:1px;height:16px;box-sizing:border-box;background:#a0a0a0;"></div>
<div style="position:absolute;left:1634px;top:739px;width:116px;height:1px;box-sizing:border-box;background:#e8e8e8;"></div>
<div style="position:absolute;left:1637.50px;top:739.8px;font-size:11px;color:#000;white-space:pre;line-height:normal;transform:scaleX(0.9475);transform-origin:0 0;">Foc de référence (mm)</div>
<div style="position:absolute;left:1753px;top:738px;width:66px;height:16px;box-sizing:border-box;background:#fff;"></div>
<div style="position:absolute;left:1753px;top:738px;width:66px;height:1px;box-sizing:border-box;background:#a0a0a0;"></div>
<div style="position:absolute;left:1753px;top:738px;width:1px;height:16px;box-sizing:border-box;background:#a0a0a0;"></div>
<div style="position:absolute;left:1754px;top:739px;width:65px;height:1px;box-sizing:border-box;background:#e8e8e8;"></div>
<div style="position:absolute;left:1770.50px;top:739.8px;font-size:11px;color:#000;white-space:pre;line-height:normal;transform:scaleX(1.0307);transform-origin:0 0;">11.118</div>
<div style="position:absolute;left:1823px;top:738px;width:34px;height:16px;box-sizing:border-box;background:#fff;"></div>
<div style="position:absolute;left:1823px;top:738px;width:34px;height:1px;box-sizing:border-box;background:#a0a0a0;"></div>
<div style="position:absolute;left:1823px;top:738px;width:1px;height:16px;box-sizing:border-box;background:#a0a0a0;"></div>
<div style="position:absolute;left:1824px;top:739px;width:33px;height:1px;box-sizing:border-box;background:#e8e8e8;"></div>
<div style="position:absolute;left:1834.50px;top:739.8px;font-size:11px;color:#000;white-space:pre;line-height:normal;transform:scaleX(0.8860);transform-origin:0 0;">Fix</div>
<div style="position:absolute;left:1634px;top:763px;width:13px;height:13px;box-sizing:border-box;background:#fff;border:1px solid #bcbcbc;"></div>
<svg style="position:absolute;left:1634px;top:763px;" width="13" height="13"><path d="M3 6.5L5.5 9.5L10 3.5" fill="none" stroke="#b0b0b0" stroke-width="1.3"/></svg>
<div style="position:absolute;left:1650.60px;top:763.7px;font-size:11px;color:#858585;white-space:pre;line-height:normal;transform:scaleX(0.9522);transform-origin:0 0;">Synchroniser la focalisation</div>
<div style="position:absolute;left:1791px;top:762px;width:66px;height:15px;box-sizing:border-box;background:#cccccc;border:1px solid #c4c4c4;"></div>
<div style="position:absolute;left:1795.00px;top:763.7px;font-size:11px;color:#9a9a9a;white-space:pre;line-height:normal;transform:scaleX(0.9715);transform-origin:0 0;">Foc ref. sav.</div>
<div style="position:absolute;left:1634.70px;top:784.8px;font-size:11px;color:#c0c0c0;white-space:pre;line-height:normal;transform:scaleX(0.9573);transform-origin:0 0;">Etat :  ......</div>
<div style="position:absolute;left:1628px;top:802px;width:233px;height:23px;box-sizing:border-box;background:#ebebeb;border:2px solid #15629f;"></div>
<svg style="position:absolute;left:1714.5px;top:806.0px;" width="15" height="15"><path d="M5.2 0.5H9.8V5.5H13L7.5 11L2 5.5H5.2Z" fill="#d8141c"/><rect x="0.5" y="12" width="14" height="2" fill="#d8141c"/></svg>
<div style="position:absolute;left:1734.00px;top:807.5px;font-size:11px;color:#000;white-space:pre;line-height:normal;transform:scaleX(0.9031);transform-origin:0 0;">Minimiser</div>
<div style="position:absolute;left:1629.50px;top:829.8px;font-size:12px;color:#000;white-space:pre;line-height:normal;transform:scaleX(0.9687);transform-origin:0 0;">Etat : OK, connecté et prêt</div>
<div style="position:absolute;left:1861px;top:824px;width:1px;height:22px;box-sizing:border-box;background:#e0e0e0;"></div>
<div style="position:absolute;left:1372px;top:865px;width:250px;height:170px;box-sizing:border-box;background:#fff;"></div>
<div style="position:absolute;left:1374px;top:865px;width:246px;height:1px;box-sizing:border-box;background:#ececec;"></div>
<div style="position:absolute;left:1376.60px;top:871.2px;font-size:12px;color:#a2a2a2;white-space:pre;line-height:normal;transform:scaleX(0.9895);transform-origin:0 0;">Contrôle des interrupteurs</div>
<div style="position:absolute;left:1600px;top:868px;width:19px;height:19px;box-sizing:border-box;background:#ececec;"></div>
<div style="position:absolute;left:1378px;top:902px;width:199px;height:14px;box-sizing:border-box;background:#fff;"></div>
<div style="position:absolute;left:1378px;top:902px;width:199px;height:1px;box-sizing:border-box;background:#a0a0a0;"></div>
<div style="position:absolute;left:1378px;top:902px;width:1px;height:14px;box-sizing:border-box;background:#a0a0a0;"></div>
<div style="position:absolute;left:1379px;top:903px;width:198px;height:1px;box-sizing:border-box;background:#e8e8e8;"></div>
<div style="position:absolute;left:1382.30px;top:903.0px;font-size:11px;color:#000;white-space:pre;line-height:normal;transform:scaleX(0.9308);transform-origin:0 0;">MiniPC</div>
<div style="position:absolute;left:1589px;top:899px;width:25px;height:23px;box-sizing:border-box;background:#cce4f7;border:1px solid #2a6da8;"></div>
<div style="position:absolute;left:1595px;top:904px;width:14px;height:14px;box-sizing:border-box;background:#f8461c;"></div>
<div style="position:absolute;left:1378px;top:926px;width:199px;height:14px;box-sizing:border-box;background:#fff;"></div>
<div style="position:absolute;left:1378px;top:926px;width:199px;height:1px;box-sizing:border-box;background:#a0a0a0;"></div>
<div style="position:absolute;left:1378px;top:926px;width:1px;height:14px;box-sizing:border-box;background:#a0a0a0;"></div>
<div style="position:absolute;left:1379px;top:927px;width:198px;height:1px;box-sizing:border-box;background:#e8e8e8;"></div>
<div style="position:absolute;left:1382.30px;top:928.0px;font-size:11px;color:#000;white-space:pre;line-height:normal;transform:scaleX(0.8807);transform-origin:0 0;">CCD</div>
<div style="position:absolute;left:1589px;top:923px;width:25px;height:23px;box-sizing:border-box;background:#cce4f7;border:1px solid #2a6da8;"></div>
<div style="position:absolute;left:1595px;top:928px;width:14px;height:14px;box-sizing:border-box;background:#f8461c;"></div>
<div style="position:absolute;left:1378px;top:952px;width:199px;height:14px;box-sizing:border-box;background:#fff;"></div>
<div style="position:absolute;left:1378px;top:952px;width:199px;height:1px;box-sizing:border-box;background:#a0a0a0;"></div>
<div style="position:absolute;left:1378px;top:952px;width:1px;height:14px;box-sizing:border-box;background:#a0a0a0;"></div>
<div style="position:absolute;left:1379px;top:953px;width:198px;height:1px;box-sizing:border-box;background:#e8e8e8;"></div>
<div style="position:absolute;left:1382.30px;top:953.0px;font-size:11px;color:#000;white-space:pre;line-height:normal;transform:scaleX(0.9658);transform-origin:0 0;">FOCUS_MONTURE_MOXA</div>
<div style="position:absolute;left:1589px;top:949px;width:25px;height:23px;box-sizing:border-box;background:#e1e1e1;border:1px solid #adadad;"></div>
<div style="position:absolute;left:1595px;top:954px;width:14px;height:14px;box-sizing:border-box;background:#14fa14;"></div>
<div style="position:absolute;left:1378px;top:976px;width:199px;height:14px;box-sizing:border-box;background:#fff;"></div>
<div style="position:absolute;left:1378px;top:976px;width:199px;height:1px;box-sizing:border-box;background:#a0a0a0;"></div>
<div style="position:absolute;left:1378px;top:976px;width:1px;height:14px;box-sizing:border-box;background:#a0a0a0;"></div>
<div style="position:absolute;left:1379px;top:977px;width:198px;height:1px;box-sizing:border-box;background:#e8e8e8;"></div>
<div style="position:absolute;left:1382.30px;top:978.0px;font-size:11px;color:#000;white-space:pre;line-height:normal;transform:scaleX(0.9642);transform-origin:0 0;">RESISTANCE</div>
<div style="position:absolute;left:1589px;top:973px;width:25px;height:23px;box-sizing:border-box;background:#e1e1e1;border:1px solid #adadad;"></div>
<div style="position:absolute;left:1595px;top:978px;width:14px;height:14px;box-sizing:border-box;background:#14fa14;"></div>
<div style="position:absolute;left:1416px;top:998px;width:159px;height:22px;box-sizing:border-box;background:#e8e8e8;border:1px solid #8c8c8c;"></div>
<div style="position:absolute;left:1473.00px;top:1003px;font-size:11px;color:#000;white-space:pre;line-height:normal;transform:scaleX(0.9559);transform-origin:0 0;">Rafraichir</div>
<div style="position:absolute;left:1374px;top:1022px;width:245px;height:20px;box-sizing:border-box;background:#e8e8e8;border:1px solid #8c8c8c;"></div>
<svg style="position:absolute;left:1467px;top:1029px;" width="15" height="15"><path d="M5.2 0.5H9.8V5.5H13L7.5 11L2 5.5H5.2Z" fill="#d8141c"/></svg>
<div style="position:absolute;left:1485.00px;top:1031px;font-size:11px;color:#000;white-space:pre;line-height:normal;transform:scaleX(0.9031);transform-origin:0 0;">Minimiser</div>
<div style="position:absolute;left:1048px;top:897px;width:258px;height:116px;box-sizing:border-box;background:#fff;"></div>
<div style="position:absolute;left:1048px;top:897px;width:257px;height:1px;box-sizing:border-box;background:#e8e8e8;"></div>
<div style="position:absolute;left:1058.60px;top:905.8px;font-size:12px;color:#8c8c8c;white-space:pre;line-height:normal;transform:scaleX(0.9738);transform-origin:0 0;">Loupe</div>
<div style="position:absolute;left:1286.5px;top:904.5px;width:19px;height:19px;box-sizing:border-box;background:#ececec;"></div>
<svg style="position:absolute;left:1894px;top:936px;" width="26" height="56"><path d="M4 1 H26 V54 L2.5 40 Q1 39 1 37 V4 Q1 1 4 1Z" fill="#565a5f"/><rect x="5" y="7" width="21" height="20" fill="#143f6e"/><circle cx="15" cy="17" r="8" fill="#5f7d9c" stroke="#7d99b5" stroke-width="1"/><path d="M9 17H21M8.5 17l3.5-2.5v5ZM21.5 17l-3.5-2.5v5Z" stroke="#12315a" fill="#12315a" stroke-width="2"/></svg>
</body></html>
